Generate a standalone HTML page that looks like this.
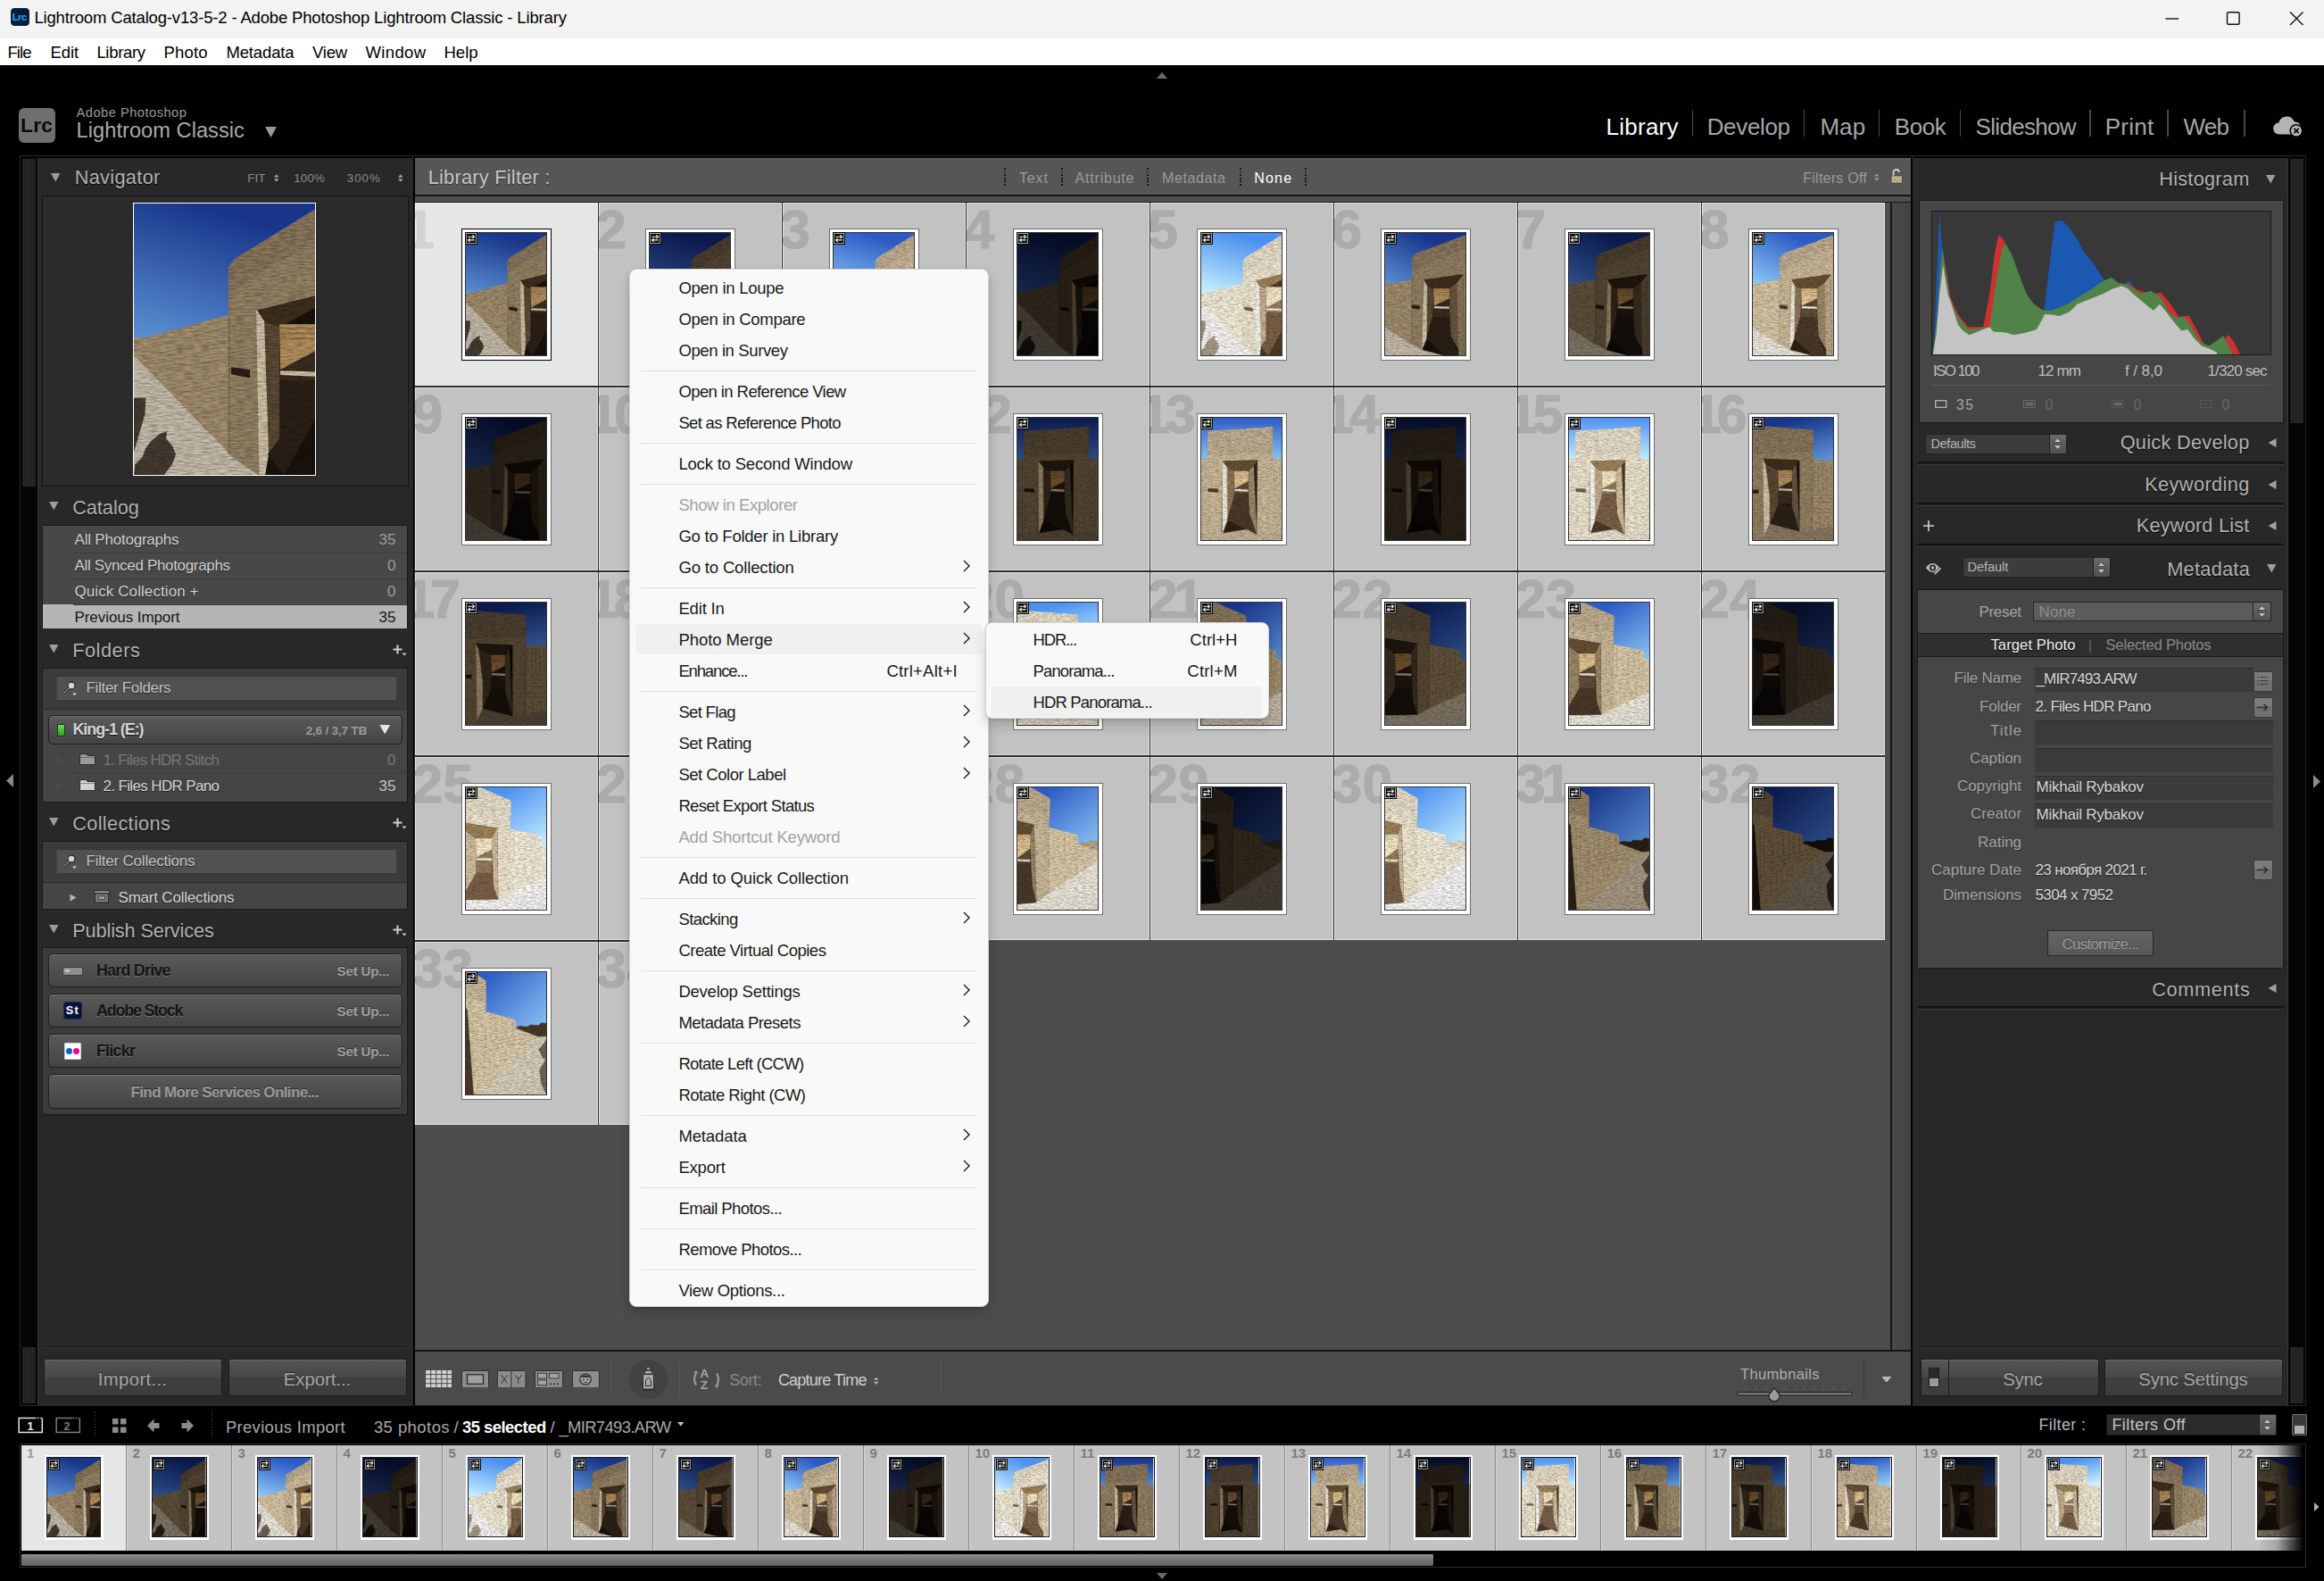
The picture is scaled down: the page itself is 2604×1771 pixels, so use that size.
<!DOCTYPE html>
<html lang="en"><head><meta charset="utf-8"><title>Lightroom Catalog-v13-5-2 - Adobe Photoshop Lightroom Classic - Library</title>
<style>
html,body{margin:0;padding:0;background:#000;}
body{width:2604px;height:1771px;overflow:hidden;font-family:"Liberation Sans",sans-serif;}
#app{position:relative;width:2604px;height:1771px;overflow:hidden;background:#000;}
#app div,#app svg{position:absolute;box-sizing:border-box;}
.t{white-space:nowrap;line-height:1;}
.btn{background:linear-gradient(#565656,#474747 50%,#3f3f3f 51%,#3c3c3c);border:1px solid #1c1c1c;box-shadow:inset 0 1px 0 #6a6a6a;}
.pill{background:linear-gradient(#5a5a5a,#444);border:1px solid #1e1e1e;border-radius:5px;box-shadow:inset 0 1px 0 #707070;}
.cell{background:#c2c2c2;border-left:1px solid #2c2c2c;border-top:2px solid #2c2c2c;box-shadow:inset 0 0 0 1px #e2e2e2;}
.cell.act{background:#e6e6e6;box-shadow:inset 0 0 0 1px #f4f4f4;}
.fr{background:#fff;border:1px solid #6e6e6e;}
.fr.act{border-color:#000;}
.fc{background:#c3c3c3;border-right:1px solid #8a8a8a;box-shadow:inset 1px 0 0 #d4d4d4;}
.fc.act{background:#e6e6e6;}
.hd{height:3px;background:#1a1a1a;border-top:1px solid #0c0c0c;border-bottom:1px solid #3c3c3c;}
.field{background:#3b3b3b;box-shadow:inset 0 1px 0 #2f2f2f;}
.stripes{background:repeating-linear-gradient(90deg,#1c1c1c 0,#1c1c1c 1px,#2c2c2c 1px,#2c2c2c 2px);}
.num{left:-3px;top:0px;font-size:61px;font-weight:700;letter-spacing:-4.5px;}

</style></head><body>
<svg width="0" height="0" style="position:absolute;left:-10px;top:-10px"><defs>
<filter id="nz" x="0" y="0" width="1" height="1" color-interpolation-filters="sRGB"><feTurbulence type="fractalNoise" baseFrequency="0.35 1.9" numOctaves="3" seed="11" result="n"/><feColorMatrix in="n" type="matrix" values="0 0 0 0 0 0 0 0 0 0 0 0 0 0 0 0.55 0 0 0 -0.17" result="a"/><feComposite in="a" in2="SourceGraphic" operator="in" result="m"/><feMerge><feMergeNode in="SourceGraphic"/><feMergeNode in="m"/></feMerge></filter>
<symbol id="p1" viewBox="0 0 60 90" preserveAspectRatio="none"><linearGradient id="g1" gradientUnits="userSpaceOnUse" x1="20" y1="0" x2="6" y2="46"><stop offset="0" stop-color="#18358a"/><stop offset="1" stop-color="#5b90d2"/></linearGradient><rect width="60" height="90" fill="url(#g1)"/><g filter="url(#nz)"><path d="M0 44.5 3.5 44.7 3.5 53 0 53z" fill="#a5906f" stroke="#a5906f" stroke-width="0.35"/><path d="M3.5 44.7 31.5 37.1 31.5 84 0.5 51z" fill="#a5906f" stroke="#a5906f" stroke-width="0.35"/><path d="M0 51 0.5 51 31.5 83.1 41.4 90 0 90z" fill="#c9bfad" stroke="#c9bfad" stroke-width="0.35"/><path d="M31.5 21.1 33.6 18.4 60 2.1 60 90 41.4 90 31.5 83.1z" fill="#978365" stroke="#978365" stroke-width="0.35"/><path d="M31.5 21.1 33.6 18.4 60 2.1 60 13 46 20 31.5 30z" fill="#82705a" stroke="#82705a" stroke-width="0.35" opacity="0.55"/><path d="M31.5 37V83" fill="none" stroke="#7b6749" stroke-width="0.5" opacity="0.8"/><path d="M6 47.5L31 41M5 50L31 46M8 55L31 52M14 63L31 60M20 70L31 68.500" fill="none" stroke="#7b6749" stroke-width="0.3" opacity="0.45"/><path d="M0 64.6 3.8 64.6 3.5 69.800 0 81.800z" fill="#453d33" stroke="#453d33" stroke-width="0.35"/><path d="M0.2 90 0.5 86.700 2.900 84.300 4.100 81.200 5.900 78.800 8.900 76.400 10.800 75.800 10.400 77.900 12.700 80.600 13.700 83.100 12.700 86.100 9.800 90z" fill="#453d33" stroke="#453d33" stroke-width="0.35"/><path d="M40.7 35.6 60 30.8 60 90 43.3 90z" fill="#1a130c" stroke="#1a130c" stroke-width="0.35"/><path d="M43 39 48.4 40.8 48.4 78 44.5 83.100z" fill="#5c4a35" stroke="#5c4a35" stroke-width="0.35"/><path d="M40.7 35.6 60 30.8 60 34.4 48.4 40.8 43 39z" fill="#3f301e" stroke="#3f301e" stroke-width="0.35"/><path d="M40.7 35.6 43 39 44.5 83.100 43.300 90 41.700 90z" fill="#d4c6aa" stroke="#d4c6aa" stroke-width="0.35"/><path d="M48.4 40.2 60 40.2 60 58.9 48.4 58.9z" fill="#3b2d1f" stroke="#3b2d1f" stroke-width="0.35"/><path d="M48.4 40.2 60 40.2 60 48.7 48.699999999999996 54.8z" fill="#b7925f" stroke="#b7925f" stroke-width="0.35"/><path d="M48.4 41.4H60" stroke="#8b6a45" stroke-width="0.6" opacity="0.7"/><path d="M48.4 43.1H60" stroke="#8b6a45" stroke-width="0.6" opacity="0.7"/><path d="M48.4 44.8H60" stroke="#8b6a45" stroke-width="0.6" opacity="0.7"/><path d="M48.699999999999996 55.6 60 56.0 60 57.2 48.699999999999996 56.7z" fill="#d9cdb5" stroke="#d9cdb5" stroke-width="0.35"/><path d="M48.4 58.9 60 58.9 60 90 50 90 44.5 83.100 48.4 78z" fill="#2c2117" stroke="#2c2117" stroke-width="0.35"/><path d="M50 90 60 90 60 72z" fill="#1a130c" stroke="#1a130c" stroke-width="0.35"/><path d="M32.4 54.4 38.3 55.3 38.3 57.7 32.4 56.5z" fill="#2c2117" stroke="#2c2117" stroke-width="0.35"/></g></symbol>
<symbol id="p2" viewBox="0 0 60 90" preserveAspectRatio="none"><linearGradient id="g2" gradientUnits="userSpaceOnUse" x1="20" y1="0" x2="6" y2="46"><stop offset="0" stop-color="#0b194b"/><stop offset="1" stop-color="#2e508a"/></linearGradient><rect width="60" height="90" fill="url(#g2)"/><g filter="url(#nz)"><path d="M0 44.5 3.5 44.7 3.5 53 0 53z" fill="#5f503a" stroke="#5f503a" stroke-width="0.35"/><path d="M3.5 44.7 31.5 37.1 31.5 84 0.5 51z" fill="#5f503a" stroke="#5f503a" stroke-width="0.35"/><path d="M0 51 0.5 51 31.5 83.1 41.4 90 0 90z" fill="#807666" stroke="#807666" stroke-width="0.35"/><path d="M31.5 21.1 33.6 18.4 60 2.1 60 90 41.4 90 31.5 83.1z" fill="#554734" stroke="#554734" stroke-width="0.35"/><path d="M31.5 21.1 33.6 18.4 60 2.1 60 13 46 20 31.5 30z" fill="#463a2d" stroke="#463a2d" stroke-width="0.35" opacity="0.55"/><path d="M31.5 37V83" fill="none" stroke="#413524" stroke-width="0.5" opacity="0.8"/><path d="M6 47.5L31 41M5 50L31 46M8 55L31 52M14 63L31 60M20 70L31 68.500" fill="none" stroke="#413524" stroke-width="0.3" opacity="0.45"/><path d="M0 64.6 3.8 64.6 3.5 69.800 0 81.800z" fill="#221e18" stroke="#221e18" stroke-width="0.35"/><path d="M0.2 90 0.5 86.700 2.900 84.300 4.100 81.200 5.900 78.800 8.900 76.400 10.800 75.800 10.400 77.900 12.700 80.600 13.700 83.100 12.700 86.100 9.800 90z" fill="#221e18" stroke="#221e18" stroke-width="0.35"/><path d="M40.7 35.6 60 30.8 60 90 43.3 90z" fill="#0c0905" stroke="#0c0905" stroke-width="0.35"/><path d="M43 39 48.4 40.8 48.4 78 44.5 83.100z" fill="#2f2419" stroke="#2f2419" stroke-width="0.35"/><path d="M40.7 35.6 60 30.8 60 34.4 48.4 40.8 43 39z" fill="#1f170e" stroke="#1f170e" stroke-width="0.35"/><path d="M40.7 35.6 43 39 44.5 83.100 43.300 90 41.700 90z" fill="#8d7d63" stroke="#8d7d63" stroke-width="0.35"/><path d="M48.4 40.2 60 40.2 60 58.9 48.4 58.9z" fill="#1c150e" stroke="#1c150e" stroke-width="0.35"/><path d="M48.4 40.2 60 40.2 60 48.7 48.699999999999996 54.8z" fill="#6f5130" stroke="#6f5130" stroke-width="0.35"/><path d="M48.4 41.4H60" stroke="#4c3722" stroke-width="0.6" opacity="0.7"/><path d="M48.4 43.1H60" stroke="#4c3722" stroke-width="0.6" opacity="0.7"/><path d="M48.4 44.8H60" stroke="#4c3722" stroke-width="0.6" opacity="0.7"/><path d="M48.699999999999996 55.6 60 56.0 60 57.2 48.699999999999996 56.7z" fill="#93856d" stroke="#93856d" stroke-width="0.35"/><path d="M48.4 58.9 60 58.9 60 90 50 90 44.5 83.100 48.4 78z" fill="#150f0b" stroke="#150f0b" stroke-width="0.35"/><path d="M50 90 60 90 60 72z" fill="#0c0905" stroke="#0c0905" stroke-width="0.35"/><path d="M32.4 54.4 38.3 55.3 38.3 57.7 32.4 56.5z" fill="#150f0b" stroke="#150f0b" stroke-width="0.35"/></g></symbol>
<symbol id="p3" viewBox="0 0 60 90" preserveAspectRatio="none"><linearGradient id="g3" gradientUnits="userSpaceOnUse" x1="20" y1="0" x2="6" y2="46"><stop offset="0" stop-color="#2c5bc5"/><stop offset="1" stop-color="#91caf6"/></linearGradient><rect width="60" height="90" fill="url(#g3)"/><g filter="url(#nz)"><path d="M0 44.5 3.5 44.7 3.5 53 0 53z" fill="#dccaa9" stroke="#dccaa9" stroke-width="0.35"/><path d="M3.5 44.7 31.5 37.1 31.5 84 0.5 51z" fill="#dccaa9" stroke="#dccaa9" stroke-width="0.35"/><path d="M0 51 0.5 51 31.5 83.1 41.4 90 0 90z" fill="#f2ede1" stroke="#f2ede1" stroke-width="0.35"/><path d="M31.5 21.1 33.6 18.4 60 2.1 60 90 41.4 90 31.5 83.1z" fill="#d1be9d" stroke="#d1be9d" stroke-width="0.35"/><path d="M31.5 21.1 33.6 18.4 60 2.1 60 13 46 20 31.5 30z" fill="#bdaa8f" stroke="#bdaa8f" stroke-width="0.35" opacity="0.55"/><path d="M31.5 37V83" fill="none" stroke="#b6a079" stroke-width="0.5" opacity="0.8"/><path d="M6 47.5L31 41M5 50L31 46M8 55L31 52M14 63L31 60M20 70L31 68.500" fill="none" stroke="#b6a079" stroke-width="0.3" opacity="0.45"/><path d="M0 64.6 3.8 64.6 3.5 69.800 0 81.800z" fill="#736758" stroke="#736758" stroke-width="0.35"/><path d="M0.2 90 0.5 86.700 2.900 84.300 4.100 81.200 5.900 78.800 8.900 76.400 10.800 75.800 10.400 77.900 12.700 80.600 13.700 83.100 12.700 86.100 9.800 90z" fill="#736758" stroke="#736758" stroke-width="0.35"/><path d="M40.7 35.6 60 30.8 60 90 43.3 90z" fill="#2f2316" stroke="#2f2316" stroke-width="0.35"/><path d="M43 39 48.4 40.8 48.4 78 44.5 83.100z" fill="#927a5b" stroke="#927a5b" stroke-width="0.35"/><path d="M40.7 35.6 60 30.8 60 34.4 48.4 40.8 43 39z" fill="#6a5336" stroke="#6a5336" stroke-width="0.35"/><path d="M40.7 35.6 43 39 44.5 83.100 43.300 90 41.700 90z" fill="#f6f0df" stroke="#f6f0df" stroke-width="0.35"/><path d="M48.4 40.2 60 40.2 60 58.9 48.4 58.9z" fill="#644f38" stroke="#644f38" stroke-width="0.35"/><path d="M48.4 40.2 60 40.2 60 48.7 48.699999999999996 54.8z" fill="#e8cc96" stroke="#e8cc96" stroke-width="0.35"/><path d="M48.4 41.4H60" stroke="#c6a373" stroke-width="0.6" opacity="0.7"/><path d="M48.4 43.1H60" stroke="#c6a373" stroke-width="0.6" opacity="0.7"/><path d="M48.4 44.8H60" stroke="#c6a373" stroke-width="0.6" opacity="0.7"/><path d="M48.699999999999996 55.6 60 56.0 60 57.2 48.699999999999996 56.7z" fill="#f8f3e7" stroke="#f8f3e7" stroke-width="0.35"/><path d="M48.4 58.9 60 58.9 60 90 50 90 44.5 83.100 48.4 78z" fill="#4d3b2a" stroke="#4d3b2a" stroke-width="0.35"/><path d="M50 90 60 90 60 72z" fill="#2f2316" stroke="#2f2316" stroke-width="0.35"/><path d="M32.4 54.4 38.3 55.3 38.3 57.7 32.4 56.5z" fill="#4d3b2a" stroke="#4d3b2a" stroke-width="0.35"/></g></symbol>
<symbol id="p4" viewBox="0 0 60 90" preserveAspectRatio="none"><linearGradient id="g4" gradientUnits="userSpaceOnUse" x1="20" y1="0" x2="6" y2="46"><stop offset="0" stop-color="#050c25"/><stop offset="1" stop-color="#16274b"/></linearGradient><rect width="60" height="90" fill="url(#g4)"/><g filter="url(#nz)"><path d="M0 44.5 3.5 44.7 3.5 53 0 53z" fill="#30271c" stroke="#30271c" stroke-width="0.35"/><path d="M3.5 44.7 31.5 37.1 31.5 84 0.5 51z" fill="#30271c" stroke="#30271c" stroke-width="0.35"/><path d="M0 51 0.5 51 31.5 83.1 41.4 90 0 90z" fill="#443e34" stroke="#443e34" stroke-width="0.35"/><path d="M31.5 21.1 33.6 18.4 60 2.1 60 90 41.4 90 31.5 83.1z" fill="#2a2218" stroke="#2a2218" stroke-width="0.35"/><path d="M31.5 21.1 33.6 18.4 60 2.1 60 13 46 20 31.5 30z" fill="#221c15" stroke="#221c15" stroke-width="0.35" opacity="0.55"/><path d="M31.5 37V83" fill="none" stroke="#1f1911" stroke-width="0.5" opacity="0.8"/><path d="M6 47.5L31 41M5 50L31 46M8 55L31 52M14 63L31 60M20 70L31 68.500" fill="none" stroke="#1f1911" stroke-width="0.3" opacity="0.45"/><path d="M0 64.6 3.8 64.6 3.5 69.800 0 81.800z" fill="#100e0b" stroke="#100e0b" stroke-width="0.35"/><path d="M0.2 90 0.5 86.700 2.900 84.300 4.100 81.200 5.900 78.800 8.900 76.400 10.800 75.800 10.400 77.900 12.700 80.600 13.700 83.100 12.700 86.100 9.800 90z" fill="#100e0b" stroke="#100e0b" stroke-width="0.35"/><path d="M40.7 35.6 60 30.8 60 90 43.3 90z" fill="#050402" stroke="#050402" stroke-width="0.35"/><path d="M43 39 48.4 40.8 48.4 78 44.5 83.100z" fill="#16110c" stroke="#16110c" stroke-width="0.35"/><path d="M40.7 35.6 60 30.8 60 34.4 48.4 40.8 43 39z" fill="#0e0a06" stroke="#0e0a06" stroke-width="0.35"/><path d="M40.7 35.6 43 39 44.5 83.100 43.300 90 41.700 90z" fill="#4c4232" stroke="#4c4232" stroke-width="0.35"/><path d="M48.4 40.2 60 40.2 60 58.9 48.4 58.9z" fill="#0d0a07" stroke="#0d0a07" stroke-width="0.35"/><path d="M48.4 40.2 60 40.2 60 48.7 48.699999999999996 54.8z" fill="#392817" stroke="#392817" stroke-width="0.35"/><path d="M48.4 41.4H60" stroke="#251a10" stroke-width="0.6" opacity="0.7"/><path d="M48.4 43.1H60" stroke="#251a10" stroke-width="0.6" opacity="0.7"/><path d="M48.4 44.8H60" stroke="#251a10" stroke-width="0.6" opacity="0.7"/><path d="M48.699999999999996 55.6 60 56.0 60 57.2 48.699999999999996 56.7z" fill="#514738" stroke="#514738" stroke-width="0.35"/><path d="M48.4 58.9 60 58.9 60 90 50 90 44.5 83.100 48.4 78z" fill="#090705" stroke="#090705" stroke-width="0.35"/><path d="M50 90 60 90 60 72z" fill="#050402" stroke="#050402" stroke-width="0.35"/><path d="M32.4 54.4 38.3 55.3 38.3 57.7 32.4 56.5z" fill="#090705" stroke="#090705" stroke-width="0.35"/></g></symbol>
<symbol id="p5" viewBox="0 0 60 90" preserveAspectRatio="none"><linearGradient id="g5" gradientUnits="userSpaceOnUse" x1="20" y1="0" x2="6" y2="46"><stop offset="0" stop-color="#4c91f0"/><stop offset="1" stop-color="#cbf2ff"/></linearGradient><rect width="60" height="90" fill="url(#g5)"/><g filter="url(#nz)"><path d="M0 44.5 3.5 44.7 3.5 53 0 53z" fill="#f9f2de" stroke="#f9f2de" stroke-width="0.35"/><path d="M3.5 44.7 31.5 37.1 31.5 84 0.5 51z" fill="#f9f2de" stroke="#f9f2de" stroke-width="0.35"/><path d="M0 51 0.5 51 31.5 83.1 41.4 90 0 90z" fill="#fefdfb" stroke="#fefdfb" stroke-width="0.35"/><path d="M31.5 21.1 33.6 18.4 60 2.1 60 90 41.4 90 31.5 83.1z" fill="#f5ecd5" stroke="#f5ecd5" stroke-width="0.35"/><path d="M31.5 21.1 33.6 18.4 60 2.1 60 13 46 20 31.5 30z" fill="#ebdfca" stroke="#ebdfca" stroke-width="0.35" opacity="0.55"/><path d="M31.5 37V83" fill="none" stroke="#e7d7b3" stroke-width="0.5" opacity="0.8"/><path d="M6 47.5L31 41M5 50L31 46M8 55L31 52M14 63L31 60M20 70L31 68.500" fill="none" stroke="#e7d7b3" stroke-width="0.3" opacity="0.45"/><path d="M0 64.6 3.8 64.6 3.5 69.800 0 81.800z" fill="#ada08d" stroke="#ada08d" stroke-width="0.35"/><path d="M0.2 90 0.5 86.700 2.900 84.300 4.100 81.200 5.900 78.800 8.900 76.400 10.800 75.800 10.400 77.900 12.700 80.600 13.700 83.100 12.700 86.100 9.800 90z" fill="#ada08d" stroke="#ada08d" stroke-width="0.35"/><path d="M40.7 35.6 60 30.8 60 90 43.3 90z" fill="#523e29" stroke="#523e29" stroke-width="0.35"/><path d="M43 39 48.4 40.8 48.4 78 44.5 83.100z" fill="#ccb591" stroke="#ccb591" stroke-width="0.35"/><path d="M40.7 35.6 60 30.8 60 34.4 48.4 40.8 43 39z" fill="#a3875d" stroke="#a3875d" stroke-width="0.35"/><path d="M40.7 35.6 43 39 44.5 83.100 43.300 90 41.700 90z" fill="#fffefa" stroke="#fffefa" stroke-width="0.35"/><path d="M48.4 40.2 60 40.2 60 58.9 48.4 58.9z" fill="#9c805f" stroke="#9c805f" stroke-width="0.35"/><path d="M48.4 40.2 60 40.2 60 48.7 48.699999999999996 54.8z" fill="#fcf3cf" stroke="#fcf3cf" stroke-width="0.35"/><path d="M48.4 41.4H60" stroke="#f0daad" stroke-width="0.6" opacity="0.7"/><path d="M48.4 43.1H60" stroke="#f0daad" stroke-width="0.6" opacity="0.7"/><path d="M48.4 44.8H60" stroke="#f0daad" stroke-width="0.6" opacity="0.7"/><path d="M48.699999999999996 55.6 60 56.0 60 57.2 48.699999999999996 56.7z" fill="#fffefc" stroke="#fffefc" stroke-width="0.35"/><path d="M48.4 58.9 60 58.9 60 90 50 90 44.5 83.100 48.4 78z" fill="#7e644a" stroke="#7e644a" stroke-width="0.35"/><path d="M50 90 60 90 60 72z" fill="#523e29" stroke="#523e29" stroke-width="0.35"/><path d="M32.4 54.4 38.3 55.3 38.3 57.7 32.4 56.5z" fill="#7e644a" stroke="#7e644a" stroke-width="0.35"/></g></symbol>
<symbol id="p6" viewBox="0 0 60 90" preserveAspectRatio="none"><linearGradient id="g6" gradientUnits="userSpaceOnUse" x1="24" y1="0" x2="4" y2="40"><stop offset="0" stop-color="#18358a"/><stop offset="1" stop-color="#5b90d2"/></linearGradient><rect width="60" height="90" fill="url(#g6)"/><g filter="url(#nz)"><path d="M0 38.2 20.1 34.9 20.1 82 0 68.9z" fill="#a5906f" stroke="#a5906f" stroke-width="0.35"/><path d="M0 68.9 18.8 81.4 28 85.4 47 90 0 90z" fill="#c9bfad" stroke="#c9bfad" stroke-width="0.35"/><path d="M20.6 18.5 23.4 15.8 60 2.3 60 90 47 90 28 85.4 20.1 81.4z" fill="#978365" stroke="#978365" stroke-width="0.35"/><path d="M20.6 18.5 23.4 15.8 60 2.3 60 12 40 20 20.4 27z" fill="#82705a" stroke="#82705a" stroke-width="0.35" opacity="0.55"/><path d="M20.1 35V81.4" fill="none" stroke="#7b6749" stroke-width="0.5" opacity="0.8"/><path d="M1 42L20 39.500M1 48L20 46M1 55L20 54M4 63L20 62.500" fill="none" stroke="#7b6749" stroke-width="0.3" opacity="0.4"/><path d="M29.1 34.9 57.7 31 58.7 90 45 90 27.7 85.4z" fill="#1a130c" stroke="#1a130c" stroke-width="0.35"/><path d="M31.4 39.2 36.4 41.2 35.4 62.3 31.1 77.5z" fill="#5c4a35" stroke="#5c4a35" stroke-width="0.35"/><path d="M47.7 40.9 53.7 36.3 54.7 85.400 48.700 75.500z" fill="#695740" stroke="#695740" stroke-width="0.35"/><path d="M53.7 36.3 57.7 31.3 58.700 90 54.700 90z" fill="#978365" stroke="#978365" stroke-width="0.35" opacity="0.9"/><path d="M29.1 34.9 57.7 31 53.7 36.3 47.7 40.9 36.4 41.2 31.4 39.2z" fill="#3f301e" stroke="#3f301e" stroke-width="0.35"/><path d="M29.1 35.3 31.4 39.2 31.1 77.5 27.7 85.4z" fill="#d4c6aa" stroke="#d4c6aa" stroke-width="0.35"/><path d="M36.4 41.2 47.7 41.2 47.7 62 36.4 62z" fill="#3b2d1f" stroke="#3b2d1f" stroke-width="0.35"/><path d="M36.4 41.2 47.7 41.2 47.7 48.3 36.699999999999996 53.3z" fill="#b7925f" stroke="#b7925f" stroke-width="0.35"/><path d="M36.4 42.4H47.7" stroke="#8b6a45" stroke-width="0.6" opacity="0.7"/><path d="M36.4 44.1H47.7" stroke="#8b6a45" stroke-width="0.6" opacity="0.7"/><path d="M36.4 45.8H47.7" stroke="#8b6a45" stroke-width="0.6" opacity="0.7"/><path d="M36.699999999999996 54.1 47.7 54.5 47.7 55.7 36.699999999999996 55.2z" fill="#d9cdb5" stroke="#d9cdb5" stroke-width="0.35"/><path d="M31.1 77.5 35.4 62.3 47.7 62 48.700 75.500 54.700 90 45 90z" fill="#2c2117" stroke="#2c2117" stroke-width="0.35"/><path d="M20.4 53.1 26.1 53.7 26.1 56 20.4 55.4z" fill="#2c2117" stroke="#2c2117" stroke-width="0.35"/></g></symbol>
<symbol id="p7" viewBox="0 0 60 90" preserveAspectRatio="none"><linearGradient id="g7" gradientUnits="userSpaceOnUse" x1="24" y1="0" x2="4" y2="40"><stop offset="0" stop-color="#0b194b"/><stop offset="1" stop-color="#2e508a"/></linearGradient><rect width="60" height="90" fill="url(#g7)"/><g filter="url(#nz)"><path d="M0 38.2 20.1 34.9 20.1 82 0 68.9z" fill="#5f503a" stroke="#5f503a" stroke-width="0.35"/><path d="M0 68.9 18.8 81.4 28 85.4 47 90 0 90z" fill="#807666" stroke="#807666" stroke-width="0.35"/><path d="M20.6 18.5 23.4 15.8 60 2.3 60 90 47 90 28 85.4 20.1 81.4z" fill="#554734" stroke="#554734" stroke-width="0.35"/><path d="M20.6 18.5 23.4 15.8 60 2.3 60 12 40 20 20.4 27z" fill="#463a2d" stroke="#463a2d" stroke-width="0.35" opacity="0.55"/><path d="M20.1 35V81.4" fill="none" stroke="#413524" stroke-width="0.5" opacity="0.8"/><path d="M1 42L20 39.500M1 48L20 46M1 55L20 54M4 63L20 62.500" fill="none" stroke="#413524" stroke-width="0.3" opacity="0.4"/><path d="M29.1 34.9 57.7 31 58.7 90 45 90 27.7 85.4z" fill="#0c0905" stroke="#0c0905" stroke-width="0.35"/><path d="M31.4 39.2 36.4 41.2 35.4 62.3 31.1 77.5z" fill="#2f2419" stroke="#2f2419" stroke-width="0.35"/><path d="M47.7 40.9 53.7 36.3 54.7 85.400 48.700 75.500z" fill="#362c1f" stroke="#362c1f" stroke-width="0.35"/><path d="M53.7 36.3 57.7 31.3 58.700 90 54.700 90z" fill="#554734" stroke="#554734" stroke-width="0.35" opacity="0.9"/><path d="M29.1 34.9 57.7 31 53.7 36.3 47.7 40.9 36.4 41.2 31.4 39.2z" fill="#1f170e" stroke="#1f170e" stroke-width="0.35"/><path d="M29.1 35.3 31.4 39.2 31.1 77.5 27.7 85.4z" fill="#8d7d63" stroke="#8d7d63" stroke-width="0.35"/><path d="M36.4 41.2 47.7 41.2 47.7 62 36.4 62z" fill="#1c150e" stroke="#1c150e" stroke-width="0.35"/><path d="M36.4 41.2 47.7 41.2 47.7 48.3 36.699999999999996 53.3z" fill="#6f5130" stroke="#6f5130" stroke-width="0.35"/><path d="M36.4 42.4H47.7" stroke="#4c3722" stroke-width="0.6" opacity="0.7"/><path d="M36.4 44.1H47.7" stroke="#4c3722" stroke-width="0.6" opacity="0.7"/><path d="M36.4 45.8H47.7" stroke="#4c3722" stroke-width="0.6" opacity="0.7"/><path d="M36.699999999999996 54.1 47.7 54.5 47.7 55.7 36.699999999999996 55.2z" fill="#93856d" stroke="#93856d" stroke-width="0.35"/><path d="M31.1 77.5 35.4 62.3 47.7 62 48.700 75.500 54.700 90 45 90z" fill="#150f0b" stroke="#150f0b" stroke-width="0.35"/><path d="M20.4 53.1 26.1 53.7 26.1 56 20.4 55.4z" fill="#150f0b" stroke="#150f0b" stroke-width="0.35"/></g></symbol>
<symbol id="p8" viewBox="0 0 60 90" preserveAspectRatio="none"><linearGradient id="g8" gradientUnits="userSpaceOnUse" x1="24" y1="0" x2="4" y2="40"><stop offset="0" stop-color="#2c5bc5"/><stop offset="1" stop-color="#91caf6"/></linearGradient><rect width="60" height="90" fill="url(#g8)"/><g filter="url(#nz)"><path d="M0 38.2 20.1 34.9 20.1 82 0 68.9z" fill="#dccaa9" stroke="#dccaa9" stroke-width="0.35"/><path d="M0 68.9 18.8 81.4 28 85.4 47 90 0 90z" fill="#f2ede1" stroke="#f2ede1" stroke-width="0.35"/><path d="M20.6 18.5 23.4 15.8 60 2.3 60 90 47 90 28 85.4 20.1 81.4z" fill="#d1be9d" stroke="#d1be9d" stroke-width="0.35"/><path d="M20.6 18.5 23.4 15.8 60 2.3 60 12 40 20 20.4 27z" fill="#bdaa8f" stroke="#bdaa8f" stroke-width="0.35" opacity="0.55"/><path d="M20.1 35V81.4" fill="none" stroke="#b6a079" stroke-width="0.5" opacity="0.8"/><path d="M1 42L20 39.500M1 48L20 46M1 55L20 54M4 63L20 62.500" fill="none" stroke="#b6a079" stroke-width="0.3" opacity="0.4"/><path d="M29.1 34.9 57.7 31 58.7 90 45 90 27.7 85.4z" fill="#2f2316" stroke="#2f2316" stroke-width="0.35"/><path d="M31.4 39.2 36.4 41.2 35.4 62.3 31.1 77.5z" fill="#927a5b" stroke="#927a5b" stroke-width="0.35"/><path d="M47.7 40.9 53.7 36.3 54.7 85.400 48.700 75.500z" fill="#a28c6c" stroke="#a28c6c" stroke-width="0.35"/><path d="M53.7 36.3 57.7 31.3 58.700 90 54.700 90z" fill="#d1be9d" stroke="#d1be9d" stroke-width="0.35" opacity="0.9"/><path d="M29.1 34.9 57.7 31 53.7 36.3 47.7 40.9 36.4 41.2 31.4 39.2z" fill="#6a5336" stroke="#6a5336" stroke-width="0.35"/><path d="M29.1 35.3 31.4 39.2 31.1 77.5 27.7 85.4z" fill="#f6f0df" stroke="#f6f0df" stroke-width="0.35"/><path d="M36.4 41.2 47.7 41.2 47.7 62 36.4 62z" fill="#644f38" stroke="#644f38" stroke-width="0.35"/><path d="M36.4 41.2 47.7 41.2 47.7 48.3 36.699999999999996 53.3z" fill="#e8cc96" stroke="#e8cc96" stroke-width="0.35"/><path d="M36.4 42.4H47.7" stroke="#c6a373" stroke-width="0.6" opacity="0.7"/><path d="M36.4 44.1H47.7" stroke="#c6a373" stroke-width="0.6" opacity="0.7"/><path d="M36.4 45.8H47.7" stroke="#c6a373" stroke-width="0.6" opacity="0.7"/><path d="M36.699999999999996 54.1 47.7 54.5 47.7 55.7 36.699999999999996 55.2z" fill="#f8f3e7" stroke="#f8f3e7" stroke-width="0.35"/><path d="M31.1 77.5 35.4 62.3 47.7 62 48.700 75.500 54.700 90 45 90z" fill="#4d3b2a" stroke="#4d3b2a" stroke-width="0.35"/><path d="M20.4 53.1 26.1 53.7 26.1 56 20.4 55.4z" fill="#4d3b2a" stroke="#4d3b2a" stroke-width="0.35"/></g></symbol>
<symbol id="p9" viewBox="0 0 60 90" preserveAspectRatio="none"><linearGradient id="g9" gradientUnits="userSpaceOnUse" x1="24" y1="0" x2="4" y2="40"><stop offset="0" stop-color="#050c25"/><stop offset="1" stop-color="#16274b"/></linearGradient><rect width="60" height="90" fill="url(#g9)"/><g filter="url(#nz)"><path d="M0 38.2 20.1 34.9 20.1 82 0 68.9z" fill="#30271c" stroke="#30271c" stroke-width="0.35"/><path d="M0 68.9 18.8 81.4 28 85.4 47 90 0 90z" fill="#443e34" stroke="#443e34" stroke-width="0.35"/><path d="M20.6 18.5 23.4 15.8 60 2.3 60 90 47 90 28 85.4 20.1 81.4z" fill="#2a2218" stroke="#2a2218" stroke-width="0.35"/><path d="M20.6 18.5 23.4 15.8 60 2.3 60 12 40 20 20.4 27z" fill="#221c15" stroke="#221c15" stroke-width="0.35" opacity="0.55"/><path d="M20.1 35V81.4" fill="none" stroke="#1f1911" stroke-width="0.5" opacity="0.8"/><path d="M1 42L20 39.500M1 48L20 46M1 55L20 54M4 63L20 62.500" fill="none" stroke="#1f1911" stroke-width="0.3" opacity="0.4"/><path d="M29.1 34.9 57.7 31 58.7 90 45 90 27.7 85.4z" fill="#050402" stroke="#050402" stroke-width="0.35"/><path d="M31.4 39.2 36.4 41.2 35.4 62.3 31.1 77.5z" fill="#16110c" stroke="#16110c" stroke-width="0.35"/><path d="M47.7 40.9 53.7 36.3 54.7 85.400 48.700 75.500z" fill="#1a140e" stroke="#1a140e" stroke-width="0.35"/><path d="M53.7 36.3 57.7 31.3 58.700 90 54.700 90z" fill="#2a2218" stroke="#2a2218" stroke-width="0.35" opacity="0.9"/><path d="M29.1 34.9 57.7 31 53.7 36.3 47.7 40.9 36.4 41.2 31.4 39.2z" fill="#0e0a06" stroke="#0e0a06" stroke-width="0.35"/><path d="M29.1 35.3 31.4 39.2 31.1 77.5 27.7 85.4z" fill="#4c4232" stroke="#4c4232" stroke-width="0.35"/><path d="M36.4 41.2 47.7 41.2 47.7 62 36.4 62z" fill="#0d0a07" stroke="#0d0a07" stroke-width="0.35"/><path d="M36.4 41.2 47.7 41.2 47.7 48.3 36.699999999999996 53.3z" fill="#392817" stroke="#392817" stroke-width="0.35"/><path d="M36.4 42.4H47.7" stroke="#251a10" stroke-width="0.6" opacity="0.7"/><path d="M36.4 44.1H47.7" stroke="#251a10" stroke-width="0.6" opacity="0.7"/><path d="M36.4 45.8H47.7" stroke="#251a10" stroke-width="0.6" opacity="0.7"/><path d="M36.699999999999996 54.1 47.7 54.5 47.7 55.7 36.699999999999996 55.2z" fill="#514738" stroke="#514738" stroke-width="0.35"/><path d="M31.1 77.5 35.4 62.3 47.7 62 48.700 75.500 54.700 90 45 90z" fill="#090705" stroke="#090705" stroke-width="0.35"/><path d="M20.4 53.1 26.1 53.7 26.1 56 20.4 55.4z" fill="#090705" stroke="#090705" stroke-width="0.35"/></g></symbol>
<symbol id="p10" viewBox="0 0 60 90" preserveAspectRatio="none"><linearGradient id="g10" gradientUnits="userSpaceOnUse" x1="24" y1="0" x2="4" y2="40"><stop offset="0" stop-color="#4c91f0"/><stop offset="1" stop-color="#cbf2ff"/></linearGradient><rect width="60" height="90" fill="url(#g10)"/><g filter="url(#nz)"><path d="M0 38.2 20.1 34.9 20.1 82 0 68.9z" fill="#f9f2de" stroke="#f9f2de" stroke-width="0.35"/><path d="M0 68.9 18.8 81.4 28 85.4 47 90 0 90z" fill="#fefdfb" stroke="#fefdfb" stroke-width="0.35"/><path d="M20.6 18.5 23.4 15.8 60 2.3 60 90 47 90 28 85.4 20.1 81.4z" fill="#f5ecd5" stroke="#f5ecd5" stroke-width="0.35"/><path d="M20.6 18.5 23.4 15.8 60 2.3 60 12 40 20 20.4 27z" fill="#ebdfca" stroke="#ebdfca" stroke-width="0.35" opacity="0.55"/><path d="M20.1 35V81.4" fill="none" stroke="#e7d7b3" stroke-width="0.5" opacity="0.8"/><path d="M1 42L20 39.500M1 48L20 46M1 55L20 54M4 63L20 62.500" fill="none" stroke="#e7d7b3" stroke-width="0.3" opacity="0.4"/><path d="M29.1 34.9 57.7 31 58.7 90 45 90 27.7 85.4z" fill="#523e29" stroke="#523e29" stroke-width="0.35"/><path d="M31.4 39.2 36.4 41.2 35.4 62.3 31.1 77.5z" fill="#ccb591" stroke="#ccb591" stroke-width="0.35"/><path d="M47.7 40.9 53.7 36.3 54.7 85.400 48.700 75.500z" fill="#d9c6a5" stroke="#d9c6a5" stroke-width="0.35"/><path d="M53.7 36.3 57.7 31.3 58.700 90 54.700 90z" fill="#f5ecd5" stroke="#f5ecd5" stroke-width="0.35" opacity="0.9"/><path d="M29.1 34.9 57.7 31 53.7 36.3 47.7 40.9 36.4 41.2 31.4 39.2z" fill="#a3875d" stroke="#a3875d" stroke-width="0.35"/><path d="M29.1 35.3 31.4 39.2 31.1 77.5 27.7 85.4z" fill="#fffefa" stroke="#fffefa" stroke-width="0.35"/><path d="M36.4 41.2 47.7 41.2 47.7 62 36.4 62z" fill="#9c805f" stroke="#9c805f" stroke-width="0.35"/><path d="M36.4 41.2 47.7 41.2 47.7 48.3 36.699999999999996 53.3z" fill="#fcf3cf" stroke="#fcf3cf" stroke-width="0.35"/><path d="M36.4 42.4H47.7" stroke="#f0daad" stroke-width="0.6" opacity="0.7"/><path d="M36.4 44.1H47.7" stroke="#f0daad" stroke-width="0.6" opacity="0.7"/><path d="M36.4 45.8H47.7" stroke="#f0daad" stroke-width="0.6" opacity="0.7"/><path d="M36.699999999999996 54.1 47.7 54.5 47.7 55.7 36.699999999999996 55.2z" fill="#fffefc" stroke="#fffefc" stroke-width="0.35"/><path d="M31.1 77.5 35.4 62.3 47.7 62 48.700 75.500 54.700 90 45 90z" fill="#7e644a" stroke="#7e644a" stroke-width="0.35"/><path d="M20.4 53.1 26.1 53.7 26.1 56 20.4 55.4z" fill="#7e644a" stroke="#7e644a" stroke-width="0.35"/></g></symbol>
<symbol id="p11" viewBox="0 0 60 90" preserveAspectRatio="none"><linearGradient id="g11" gradientUnits="userSpaceOnUse" x1="30" y1="0" x2="30" y2="34"><stop offset="0" stop-color="#18358a"/><stop offset="1" stop-color="#5b90d2"/></linearGradient><rect width="60" height="90" fill="url(#g11)"/><g filter="url(#nz)"><path d="M0 30.7 5 30.7 5 90 0 90z" fill="#978365" stroke="#978365" stroke-width="0.35"/><path d="M52.500 30.7 60 30.7 60 90 52.500 90z" fill="#978365" stroke="#978365" stroke-width="0.35"/><path d="M5.8 10.6 53 7.4 52.500 90 5 90z" fill="#978365" stroke="#978365" stroke-width="0.35"/><path d="M5.8 10.6 53 7.4 52.800 26 5.3 28z" fill="#82705a" stroke="#82705a" stroke-width="0.35" opacity="0.5"/><path d="M54 36V80M56 36V80M58 36V80M53 50H60M53 53H60M53 56H60M53 70H60M2 40V82M4 60V84" fill="none" stroke="#7b6749" stroke-width="0.4" opacity="0.55"/><path d="M16.2 32.5 41.8 31.6 41.3 85.700 15.7 84.800z" fill="#1a130c" stroke="#1a130c" stroke-width="0.35"/><path d="M19.3 36.5 25.1 39.6 25.500 55 19.800 75z" fill="#5c4a35" stroke="#5c4a35" stroke-width="0.35"/><path d="M35 39.6 39.1 35.6 41.3 85.700 36 70.500z" fill="#695740" stroke="#695740" stroke-width="0.35"/><path d="M16.2 32.5 41.8 31.6 39.1 35.6 35 39.6 25.1 39.6 19.3 36.5z" fill="#3f301e" stroke="#3f301e" stroke-width="0.35"/><path d="M16.2 32.5 19.3 36.5 19.800 75 16.2 84.800z" fill="#d4c6aa" stroke="#d4c6aa" stroke-width="0.35"/><path d="M25.1 39.6 35 39.6 35 56 25.1 56z" fill="#3b2d1f" stroke="#3b2d1f" stroke-width="0.35"/><path d="M25.1 39.6 35 39.6 35 46.8 25.400000000000002 51.8z" fill="#b7925f" stroke="#b7925f" stroke-width="0.35"/><path d="M25.1 40.8H35" stroke="#8b6a45" stroke-width="0.6" opacity="0.7"/><path d="M25.1 42.5H35" stroke="#8b6a45" stroke-width="0.6" opacity="0.7"/><path d="M25.1 44.2H35" stroke="#8b6a45" stroke-width="0.6" opacity="0.7"/><path d="M25.400000000000002 52.6 35 53.0 35 54.2 25.400000000000002 53.7z" fill="#d9cdb5" stroke="#d9cdb5" stroke-width="0.35"/><path d="M19.800 75 25.500 56 35 56 36 70.500 41.3 85.700 34 82z" fill="#2c2117" stroke="#2c2117" stroke-width="0.35"/><path d="M5.8 52.2 13 52.6 13 54.800 5.8 54.400z" fill="#2c2117" stroke="#2c2117" stroke-width="0.35"/><path d="M0 85 15.700 84.800 34 82 41.300 85.700 60 84 60 90 0 90z" fill="#8d7c64" stroke="#8d7c64" stroke-width="0.35"/></g></symbol>
<symbol id="p12" viewBox="0 0 60 90" preserveAspectRatio="none"><linearGradient id="g12" gradientUnits="userSpaceOnUse" x1="30" y1="0" x2="30" y2="34"><stop offset="0" stop-color="#0b194b"/><stop offset="1" stop-color="#2e508a"/></linearGradient><rect width="60" height="90" fill="url(#g12)"/><g filter="url(#nz)"><path d="M0 30.7 5 30.7 5 90 0 90z" fill="#554734" stroke="#554734" stroke-width="0.35"/><path d="M52.500 30.7 60 30.7 60 90 52.500 90z" fill="#554734" stroke="#554734" stroke-width="0.35"/><path d="M5.8 10.6 53 7.4 52.500 90 5 90z" fill="#554734" stroke="#554734" stroke-width="0.35"/><path d="M5.8 10.6 53 7.4 52.800 26 5.3 28z" fill="#463a2d" stroke="#463a2d" stroke-width="0.35" opacity="0.5"/><path d="M54 36V80M56 36V80M58 36V80M53 50H60M53 53H60M53 56H60M53 70H60M2 40V82M4 60V84" fill="none" stroke="#413524" stroke-width="0.4" opacity="0.55"/><path d="M16.2 32.5 41.8 31.6 41.3 85.700 15.7 84.800z" fill="#0c0905" stroke="#0c0905" stroke-width="0.35"/><path d="M19.3 36.5 25.1 39.6 25.500 55 19.800 75z" fill="#2f2419" stroke="#2f2419" stroke-width="0.35"/><path d="M35 39.6 39.1 35.6 41.3 85.700 36 70.500z" fill="#362c1f" stroke="#362c1f" stroke-width="0.35"/><path d="M16.2 32.5 41.8 31.6 39.1 35.6 35 39.6 25.1 39.6 19.3 36.5z" fill="#1f170e" stroke="#1f170e" stroke-width="0.35"/><path d="M16.2 32.5 19.3 36.5 19.800 75 16.2 84.800z" fill="#8d7d63" stroke="#8d7d63" stroke-width="0.35"/><path d="M25.1 39.6 35 39.6 35 56 25.1 56z" fill="#1c150e" stroke="#1c150e" stroke-width="0.35"/><path d="M25.1 39.6 35 39.6 35 46.8 25.400000000000002 51.8z" fill="#6f5130" stroke="#6f5130" stroke-width="0.35"/><path d="M25.1 40.8H35" stroke="#4c3722" stroke-width="0.6" opacity="0.7"/><path d="M25.1 42.5H35" stroke="#4c3722" stroke-width="0.6" opacity="0.7"/><path d="M25.1 44.2H35" stroke="#4c3722" stroke-width="0.6" opacity="0.7"/><path d="M25.400000000000002 52.6 35 53.0 35 54.2 25.400000000000002 53.7z" fill="#93856d" stroke="#93856d" stroke-width="0.35"/><path d="M19.800 75 25.500 56 35 56 36 70.500 41.3 85.700 34 82z" fill="#150f0b" stroke="#150f0b" stroke-width="0.35"/><path d="M5.8 52.2 13 52.6 13 54.800 5.8 54.400z" fill="#150f0b" stroke="#150f0b" stroke-width="0.35"/><path d="M0 85 15.700 84.800 34 82 41.300 85.700 60 84 60 90 0 90z" fill="#4d4233" stroke="#4d4233" stroke-width="0.35"/></g></symbol>
<symbol id="p13" viewBox="0 0 60 90" preserveAspectRatio="none"><linearGradient id="g13" gradientUnits="userSpaceOnUse" x1="30" y1="0" x2="30" y2="34"><stop offset="0" stop-color="#2c5bc5"/><stop offset="1" stop-color="#91caf6"/></linearGradient><rect width="60" height="90" fill="url(#g13)"/><g filter="url(#nz)"><path d="M0 30.7 5 30.7 5 90 0 90z" fill="#d1be9d" stroke="#d1be9d" stroke-width="0.35"/><path d="M52.500 30.7 60 30.7 60 90 52.500 90z" fill="#d1be9d" stroke="#d1be9d" stroke-width="0.35"/><path d="M5.8 10.6 53 7.4 52.500 90 5 90z" fill="#d1be9d" stroke="#d1be9d" stroke-width="0.35"/><path d="M5.8 10.6 53 7.4 52.800 26 5.3 28z" fill="#bdaa8f" stroke="#bdaa8f" stroke-width="0.35" opacity="0.5"/><path d="M54 36V80M56 36V80M58 36V80M53 50H60M53 53H60M53 56H60M53 70H60M2 40V82M4 60V84" fill="none" stroke="#b6a079" stroke-width="0.4" opacity="0.55"/><path d="M16.2 32.5 41.8 31.6 41.3 85.700 15.7 84.800z" fill="#2f2316" stroke="#2f2316" stroke-width="0.35"/><path d="M19.3 36.5 25.1 39.6 25.500 55 19.800 75z" fill="#927a5b" stroke="#927a5b" stroke-width="0.35"/><path d="M35 39.6 39.1 35.6 41.3 85.700 36 70.500z" fill="#a28c6c" stroke="#a28c6c" stroke-width="0.35"/><path d="M16.2 32.5 41.8 31.6 39.1 35.6 35 39.6 25.1 39.6 19.3 36.5z" fill="#6a5336" stroke="#6a5336" stroke-width="0.35"/><path d="M16.2 32.5 19.3 36.5 19.800 75 16.2 84.800z" fill="#f6f0df" stroke="#f6f0df" stroke-width="0.35"/><path d="M25.1 39.6 35 39.6 35 56 25.1 56z" fill="#644f38" stroke="#644f38" stroke-width="0.35"/><path d="M25.1 39.6 35 39.6 35 46.8 25.400000000000002 51.8z" fill="#e8cc96" stroke="#e8cc96" stroke-width="0.35"/><path d="M25.1 40.8H35" stroke="#c6a373" stroke-width="0.6" opacity="0.7"/><path d="M25.1 42.5H35" stroke="#c6a373" stroke-width="0.6" opacity="0.7"/><path d="M25.1 44.2H35" stroke="#c6a373" stroke-width="0.6" opacity="0.7"/><path d="M25.400000000000002 52.6 35 53.0 35 54.2 25.400000000000002 53.7z" fill="#f8f3e7" stroke="#f8f3e7" stroke-width="0.35"/><path d="M19.800 75 25.500 56 35 56 36 70.500 41.3 85.700 34 82z" fill="#4d3b2a" stroke="#4d3b2a" stroke-width="0.35"/><path d="M5.8 52.2 13 52.6 13 54.800 5.8 54.400z" fill="#4d3b2a" stroke="#4d3b2a" stroke-width="0.35"/><path d="M0 85 15.700 84.800 34 82 41.300 85.700 60 84 60 90 0 90z" fill="#c8b79c" stroke="#c8b79c" stroke-width="0.35"/></g></symbol>
<symbol id="p14" viewBox="0 0 60 90" preserveAspectRatio="none"><linearGradient id="g14" gradientUnits="userSpaceOnUse" x1="30" y1="0" x2="30" y2="34"><stop offset="0" stop-color="#050c25"/><stop offset="1" stop-color="#16274b"/></linearGradient><rect width="60" height="90" fill="url(#g14)"/><g filter="url(#nz)"><path d="M0 30.7 5 30.7 5 90 0 90z" fill="#2a2218" stroke="#2a2218" stroke-width="0.35"/><path d="M52.500 30.7 60 30.7 60 90 52.500 90z" fill="#2a2218" stroke="#2a2218" stroke-width="0.35"/><path d="M5.8 10.6 53 7.4 52.500 90 5 90z" fill="#2a2218" stroke="#2a2218" stroke-width="0.35"/><path d="M5.8 10.6 53 7.4 52.800 26 5.3 28z" fill="#221c15" stroke="#221c15" stroke-width="0.35" opacity="0.5"/><path d="M54 36V80M56 36V80M58 36V80M53 50H60M53 53H60M53 56H60M53 70H60M2 40V82M4 60V84" fill="none" stroke="#1f1911" stroke-width="0.4" opacity="0.55"/><path d="M16.2 32.5 41.8 31.6 41.3 85.700 15.7 84.800z" fill="#050402" stroke="#050402" stroke-width="0.35"/><path d="M19.3 36.5 25.1 39.6 25.500 55 19.800 75z" fill="#16110c" stroke="#16110c" stroke-width="0.35"/><path d="M35 39.6 39.1 35.6 41.3 85.700 36 70.500z" fill="#1a140e" stroke="#1a140e" stroke-width="0.35"/><path d="M16.2 32.5 41.8 31.6 39.1 35.6 35 39.6 25.1 39.6 19.3 36.5z" fill="#0e0a06" stroke="#0e0a06" stroke-width="0.35"/><path d="M16.2 32.5 19.3 36.5 19.800 75 16.2 84.800z" fill="#4c4232" stroke="#4c4232" stroke-width="0.35"/><path d="M25.1 39.6 35 39.6 35 56 25.1 56z" fill="#0d0a07" stroke="#0d0a07" stroke-width="0.35"/><path d="M25.1 39.6 35 39.6 35 46.8 25.400000000000002 51.8z" fill="#392817" stroke="#392817" stroke-width="0.35"/><path d="M25.1 40.8H35" stroke="#251a10" stroke-width="0.6" opacity="0.7"/><path d="M25.1 42.5H35" stroke="#251a10" stroke-width="0.6" opacity="0.7"/><path d="M25.1 44.2H35" stroke="#251a10" stroke-width="0.6" opacity="0.7"/><path d="M25.400000000000002 52.6 35 53.0 35 54.2 25.400000000000002 53.7z" fill="#514738" stroke="#514738" stroke-width="0.35"/><path d="M19.800 75 25.500 56 35 56 36 70.500 41.3 85.700 34 82z" fill="#090705" stroke="#090705" stroke-width="0.35"/><path d="M5.8 52.2 13 52.6 13 54.800 5.8 54.400z" fill="#090705" stroke="#090705" stroke-width="0.35"/><path d="M0 85 15.700 84.800 34 82 41.300 85.700 60 84 60 90 0 90z" fill="#262018" stroke="#262018" stroke-width="0.35"/></g></symbol>
<symbol id="p15" viewBox="0 0 60 90" preserveAspectRatio="none"><linearGradient id="g15" gradientUnits="userSpaceOnUse" x1="30" y1="0" x2="30" y2="34"><stop offset="0" stop-color="#4c91f0"/><stop offset="1" stop-color="#cbf2ff"/></linearGradient><rect width="60" height="90" fill="url(#g15)"/><g filter="url(#nz)"><path d="M0 30.7 5 30.7 5 90 0 90z" fill="#f5ecd5" stroke="#f5ecd5" stroke-width="0.35"/><path d="M52.500 30.7 60 30.7 60 90 52.500 90z" fill="#f5ecd5" stroke="#f5ecd5" stroke-width="0.35"/><path d="M5.8 10.6 53 7.4 52.500 90 5 90z" fill="#f5ecd5" stroke="#f5ecd5" stroke-width="0.35"/><path d="M5.8 10.6 53 7.4 52.800 26 5.3 28z" fill="#ebdfca" stroke="#ebdfca" stroke-width="0.35" opacity="0.5"/><path d="M54 36V80M56 36V80M58 36V80M53 50H60M53 53H60M53 56H60M53 70H60M2 40V82M4 60V84" fill="none" stroke="#e7d7b3" stroke-width="0.4" opacity="0.55"/><path d="M16.2 32.5 41.8 31.6 41.3 85.700 15.7 84.800z" fill="#523e29" stroke="#523e29" stroke-width="0.35"/><path d="M19.3 36.5 25.1 39.6 25.500 55 19.800 75z" fill="#ccb591" stroke="#ccb591" stroke-width="0.35"/><path d="M35 39.6 39.1 35.6 41.3 85.700 36 70.500z" fill="#d9c6a5" stroke="#d9c6a5" stroke-width="0.35"/><path d="M16.2 32.5 41.8 31.6 39.1 35.6 35 39.6 25.1 39.6 19.3 36.5z" fill="#a3875d" stroke="#a3875d" stroke-width="0.35"/><path d="M16.2 32.5 19.3 36.5 19.800 75 16.2 84.800z" fill="#fffefa" stroke="#fffefa" stroke-width="0.35"/><path d="M25.1 39.6 35 39.6 35 56 25.1 56z" fill="#9c805f" stroke="#9c805f" stroke-width="0.35"/><path d="M25.1 39.6 35 39.6 35 46.8 25.400000000000002 51.8z" fill="#fcf3cf" stroke="#fcf3cf" stroke-width="0.35"/><path d="M25.1 40.8H35" stroke="#f0daad" stroke-width="0.6" opacity="0.7"/><path d="M25.1 42.5H35" stroke="#f0daad" stroke-width="0.6" opacity="0.7"/><path d="M25.1 44.2H35" stroke="#f0daad" stroke-width="0.6" opacity="0.7"/><path d="M25.400000000000002 52.6 35 53.0 35 54.2 25.400000000000002 53.7z" fill="#fffefc" stroke="#fffefc" stroke-width="0.35"/><path d="M19.800 75 25.500 56 35 56 36 70.500 41.3 85.700 34 82z" fill="#7e644a" stroke="#7e644a" stroke-width="0.35"/><path d="M5.8 52.2 13 52.6 13 54.800 5.8 54.400z" fill="#7e644a" stroke="#7e644a" stroke-width="0.35"/><path d="M0 85 15.700 84.800 34 82 41.300 85.700 60 84 60 90 0 90z" fill="#f1e8d5" stroke="#f1e8d5" stroke-width="0.35"/></g></symbol>
<symbol id="p16" viewBox="0 0 60 90" preserveAspectRatio="none"><linearGradient id="g16" gradientUnits="userSpaceOnUse" x1="40" y1="0" x2="48" y2="32"><stop offset="0" stop-color="#18358a"/><stop offset="1" stop-color="#5b90d2"/></linearGradient><rect width="60" height="90" fill="url(#g16)"/><g filter="url(#nz)"><path d="M44.400 31.2 60 32.2 60 90 44.400 90z" fill="#a5906f" stroke="#a5906f" stroke-width="0.35"/><path d="M46 34V54M49 34V54M52 34V54M55 34V54M58 34V54M45 57H60M45 59.500H60M45 62H60M45 67H60M45 69.500H60M47 72V80M50 72V80M53 72V80M56 72V80" fill="none" stroke="#7b6749" stroke-width="0.45" opacity="0.6"/><path d="M0 6.3 44.7 9.7 44.400 90 0 90z" fill="#978365" stroke="#978365" stroke-width="0.35"/><path d="M0 6.3 44.7 9.7 44.600 25 0 27z" fill="#82705a" stroke="#82705a" stroke-width="0.35" opacity="0.5"/><path d="M44.500 31V82" fill="none" stroke="#7b6749" stroke-width="0.5" opacity="0.7"/><path d="M8.1 30.6 34.8 31.8 34.8 83.500 8.900 87z" fill="#1a130c" stroke="#1a130c" stroke-width="0.35"/><path d="M9.6 34 19.4 39 19.7 63.1 13.6 78.1z" fill="#5c4a35" stroke="#5c4a35" stroke-width="0.35"/><path d="M29.3 39.3 32.500 34.500 34.8 83.500 29.3 65.200z" fill="#695740" stroke="#695740" stroke-width="0.35"/><path d="M8.1 30.6 34.8 31.8 32.500 34.500 29.3 39.3 19.4 39 9.6 34z" fill="#3f301e" stroke="#3f301e" stroke-width="0.35"/><path d="M8.1 30.8 9.6 34 12.9 58 12.9 78.1 8.900 87z" fill="#d4c6aa" stroke="#d4c6aa" stroke-width="0.35"/><path d="M19.4 39 29.3 39 29.3 63.1 19.4 63.1z" fill="#3b2d1f" stroke="#3b2d1f" stroke-width="0.35"/><path d="M19.4 39 29.3 39 29.3 46.3 19.7 51.4z" fill="#b7925f" stroke="#b7925f" stroke-width="0.35"/><path d="M19.4 40.2H29.3" stroke="#8b6a45" stroke-width="0.6" opacity="0.7"/><path d="M19.4 41.9H29.3" stroke="#8b6a45" stroke-width="0.6" opacity="0.7"/><path d="M19.4 43.6H29.3" stroke="#8b6a45" stroke-width="0.6" opacity="0.7"/><path d="M19.7 52.2 29.3 52.6 29.3 53.8 19.7 53.3z" fill="#d9cdb5" stroke="#d9cdb5" stroke-width="0.35"/><path d="M13.6 78.1 19.7 63.1 29.3 65.200 34.8 83.500z" fill="#2c2117" stroke="#2c2117" stroke-width="0.35"/><path d="M0 53.3 4.7 53.3 4.7 55.6 0 55.6z" fill="#2c2117" stroke="#2c2117" stroke-width="0.35"/><path d="M8.900 87 13.6 78.1 34.8 83.500 44.400 82.200 60 79.500 60 90 8 90z" fill="#8d7c64" stroke="#8d7c64" stroke-width="0.35"/></g></symbol>
<symbol id="p17" viewBox="0 0 60 90" preserveAspectRatio="none"><linearGradient id="g17" gradientUnits="userSpaceOnUse" x1="40" y1="0" x2="48" y2="32"><stop offset="0" stop-color="#0b194b"/><stop offset="1" stop-color="#2e508a"/></linearGradient><rect width="60" height="90" fill="url(#g17)"/><g filter="url(#nz)"><path d="M44.400 31.2 60 32.2 60 90 44.400 90z" fill="#5f503a" stroke="#5f503a" stroke-width="0.35"/><path d="M46 34V54M49 34V54M52 34V54M55 34V54M58 34V54M45 57H60M45 59.500H60M45 62H60M45 67H60M45 69.500H60M47 72V80M50 72V80M53 72V80M56 72V80" fill="none" stroke="#413524" stroke-width="0.45" opacity="0.6"/><path d="M0 6.3 44.7 9.7 44.400 90 0 90z" fill="#554734" stroke="#554734" stroke-width="0.35"/><path d="M0 6.3 44.7 9.7 44.600 25 0 27z" fill="#463a2d" stroke="#463a2d" stroke-width="0.35" opacity="0.5"/><path d="M44.500 31V82" fill="none" stroke="#413524" stroke-width="0.5" opacity="0.7"/><path d="M8.1 30.6 34.8 31.8 34.8 83.500 8.900 87z" fill="#0c0905" stroke="#0c0905" stroke-width="0.35"/><path d="M9.6 34 19.4 39 19.7 63.1 13.6 78.1z" fill="#2f2419" stroke="#2f2419" stroke-width="0.35"/><path d="M29.3 39.3 32.500 34.500 34.8 83.500 29.3 65.200z" fill="#362c1f" stroke="#362c1f" stroke-width="0.35"/><path d="M8.1 30.6 34.8 31.8 32.500 34.500 29.3 39.3 19.4 39 9.6 34z" fill="#1f170e" stroke="#1f170e" stroke-width="0.35"/><path d="M8.1 30.8 9.6 34 12.9 58 12.9 78.1 8.900 87z" fill="#8d7d63" stroke="#8d7d63" stroke-width="0.35"/><path d="M19.4 39 29.3 39 29.3 63.1 19.4 63.1z" fill="#1c150e" stroke="#1c150e" stroke-width="0.35"/><path d="M19.4 39 29.3 39 29.3 46.3 19.7 51.4z" fill="#6f5130" stroke="#6f5130" stroke-width="0.35"/><path d="M19.4 40.2H29.3" stroke="#4c3722" stroke-width="0.6" opacity="0.7"/><path d="M19.4 41.9H29.3" stroke="#4c3722" stroke-width="0.6" opacity="0.7"/><path d="M19.4 43.6H29.3" stroke="#4c3722" stroke-width="0.6" opacity="0.7"/><path d="M19.7 52.2 29.3 52.6 29.3 53.8 19.7 53.3z" fill="#93856d" stroke="#93856d" stroke-width="0.35"/><path d="M13.6 78.1 19.7 63.1 29.3 65.200 34.8 83.500z" fill="#150f0b" stroke="#150f0b" stroke-width="0.35"/><path d="M0 53.3 4.7 53.3 4.7 55.6 0 55.6z" fill="#150f0b" stroke="#150f0b" stroke-width="0.35"/><path d="M8.900 87 13.6 78.1 34.8 83.500 44.400 82.200 60 79.500 60 90 8 90z" fill="#4d4233" stroke="#4d4233" stroke-width="0.35"/></g></symbol>
<symbol id="p18" viewBox="0 0 60 90" preserveAspectRatio="none"><linearGradient id="g18" gradientUnits="userSpaceOnUse" x1="40" y1="0" x2="48" y2="32"><stop offset="0" stop-color="#2c5bc5"/><stop offset="1" stop-color="#91caf6"/></linearGradient><rect width="60" height="90" fill="url(#g18)"/><g filter="url(#nz)"><path d="M44.400 31.2 60 32.2 60 90 44.400 90z" fill="#dccaa9" stroke="#dccaa9" stroke-width="0.35"/><path d="M46 34V54M49 34V54M52 34V54M55 34V54M58 34V54M45 57H60M45 59.500H60M45 62H60M45 67H60M45 69.500H60M47 72V80M50 72V80M53 72V80M56 72V80" fill="none" stroke="#b6a079" stroke-width="0.45" opacity="0.6"/><path d="M0 6.3 44.7 9.7 44.400 90 0 90z" fill="#d1be9d" stroke="#d1be9d" stroke-width="0.35"/><path d="M0 6.3 44.7 9.7 44.600 25 0 27z" fill="#bdaa8f" stroke="#bdaa8f" stroke-width="0.35" opacity="0.5"/><path d="M44.500 31V82" fill="none" stroke="#b6a079" stroke-width="0.5" opacity="0.7"/><path d="M8.1 30.6 34.8 31.8 34.8 83.500 8.900 87z" fill="#2f2316" stroke="#2f2316" stroke-width="0.35"/><path d="M9.6 34 19.4 39 19.7 63.1 13.6 78.1z" fill="#927a5b" stroke="#927a5b" stroke-width="0.35"/><path d="M29.3 39.3 32.500 34.500 34.8 83.500 29.3 65.200z" fill="#a28c6c" stroke="#a28c6c" stroke-width="0.35"/><path d="M8.1 30.6 34.8 31.8 32.500 34.500 29.3 39.3 19.4 39 9.6 34z" fill="#6a5336" stroke="#6a5336" stroke-width="0.35"/><path d="M8.1 30.8 9.6 34 12.9 58 12.9 78.1 8.900 87z" fill="#f6f0df" stroke="#f6f0df" stroke-width="0.35"/><path d="M19.4 39 29.3 39 29.3 63.1 19.4 63.1z" fill="#644f38" stroke="#644f38" stroke-width="0.35"/><path d="M19.4 39 29.3 39 29.3 46.3 19.7 51.4z" fill="#e8cc96" stroke="#e8cc96" stroke-width="0.35"/><path d="M19.4 40.2H29.3" stroke="#c6a373" stroke-width="0.6" opacity="0.7"/><path d="M19.4 41.9H29.3" stroke="#c6a373" stroke-width="0.6" opacity="0.7"/><path d="M19.4 43.6H29.3" stroke="#c6a373" stroke-width="0.6" opacity="0.7"/><path d="M19.7 52.2 29.3 52.6 29.3 53.8 19.7 53.3z" fill="#f8f3e7" stroke="#f8f3e7" stroke-width="0.35"/><path d="M13.6 78.1 19.7 63.1 29.3 65.200 34.8 83.500z" fill="#4d3b2a" stroke="#4d3b2a" stroke-width="0.35"/><path d="M0 53.3 4.7 53.3 4.7 55.6 0 55.6z" fill="#4d3b2a" stroke="#4d3b2a" stroke-width="0.35"/><path d="M8.900 87 13.6 78.1 34.8 83.500 44.400 82.200 60 79.500 60 90 8 90z" fill="#c8b79c" stroke="#c8b79c" stroke-width="0.35"/></g></symbol>
<symbol id="p19" viewBox="0 0 60 90" preserveAspectRatio="none"><linearGradient id="g19" gradientUnits="userSpaceOnUse" x1="40" y1="0" x2="48" y2="32"><stop offset="0" stop-color="#050c25"/><stop offset="1" stop-color="#16274b"/></linearGradient><rect width="60" height="90" fill="url(#g19)"/><g filter="url(#nz)"><path d="M44.400 31.2 60 32.2 60 90 44.400 90z" fill="#30271c" stroke="#30271c" stroke-width="0.35"/><path d="M46 34V54M49 34V54M52 34V54M55 34V54M58 34V54M45 57H60M45 59.500H60M45 62H60M45 67H60M45 69.500H60M47 72V80M50 72V80M53 72V80M56 72V80" fill="none" stroke="#1f1911" stroke-width="0.45" opacity="0.6"/><path d="M0 6.3 44.7 9.7 44.400 90 0 90z" fill="#2a2218" stroke="#2a2218" stroke-width="0.35"/><path d="M0 6.3 44.7 9.7 44.600 25 0 27z" fill="#221c15" stroke="#221c15" stroke-width="0.35" opacity="0.5"/><path d="M44.500 31V82" fill="none" stroke="#1f1911" stroke-width="0.5" opacity="0.7"/><path d="M8.1 30.6 34.8 31.8 34.8 83.500 8.900 87z" fill="#050402" stroke="#050402" stroke-width="0.35"/><path d="M9.6 34 19.4 39 19.7 63.1 13.6 78.1z" fill="#16110c" stroke="#16110c" stroke-width="0.35"/><path d="M29.3 39.3 32.500 34.500 34.8 83.500 29.3 65.200z" fill="#1a140e" stroke="#1a140e" stroke-width="0.35"/><path d="M8.1 30.6 34.8 31.8 32.500 34.500 29.3 39.3 19.4 39 9.6 34z" fill="#0e0a06" stroke="#0e0a06" stroke-width="0.35"/><path d="M8.1 30.8 9.6 34 12.9 58 12.9 78.1 8.900 87z" fill="#4c4232" stroke="#4c4232" stroke-width="0.35"/><path d="M19.4 39 29.3 39 29.3 63.1 19.4 63.1z" fill="#0d0a07" stroke="#0d0a07" stroke-width="0.35"/><path d="M19.4 39 29.3 39 29.3 46.3 19.7 51.4z" fill="#392817" stroke="#392817" stroke-width="0.35"/><path d="M19.4 40.2H29.3" stroke="#251a10" stroke-width="0.6" opacity="0.7"/><path d="M19.4 41.9H29.3" stroke="#251a10" stroke-width="0.6" opacity="0.7"/><path d="M19.4 43.6H29.3" stroke="#251a10" stroke-width="0.6" opacity="0.7"/><path d="M19.7 52.2 29.3 52.6 29.3 53.8 19.7 53.3z" fill="#514738" stroke="#514738" stroke-width="0.35"/><path d="M13.6 78.1 19.7 63.1 29.3 65.200 34.8 83.500z" fill="#090705" stroke="#090705" stroke-width="0.35"/><path d="M0 53.3 4.7 53.3 4.7 55.6 0 55.6z" fill="#090705" stroke="#090705" stroke-width="0.35"/><path d="M8.900 87 13.6 78.1 34.8 83.500 44.400 82.200 60 79.500 60 90 8 90z" fill="#262018" stroke="#262018" stroke-width="0.35"/></g></symbol>
<symbol id="p20" viewBox="0 0 60 90" preserveAspectRatio="none"><linearGradient id="g20" gradientUnits="userSpaceOnUse" x1="40" y1="0" x2="48" y2="32"><stop offset="0" stop-color="#4c91f0"/><stop offset="1" stop-color="#cbf2ff"/></linearGradient><rect width="60" height="90" fill="url(#g20)"/><g filter="url(#nz)"><path d="M44.400 31.2 60 32.2 60 90 44.400 90z" fill="#f9f2de" stroke="#f9f2de" stroke-width="0.35"/><path d="M46 34V54M49 34V54M52 34V54M55 34V54M58 34V54M45 57H60M45 59.500H60M45 62H60M45 67H60M45 69.500H60M47 72V80M50 72V80M53 72V80M56 72V80" fill="none" stroke="#e7d7b3" stroke-width="0.45" opacity="0.6"/><path d="M0 6.3 44.7 9.7 44.400 90 0 90z" fill="#f5ecd5" stroke="#f5ecd5" stroke-width="0.35"/><path d="M0 6.3 44.7 9.7 44.600 25 0 27z" fill="#ebdfca" stroke="#ebdfca" stroke-width="0.35" opacity="0.5"/><path d="M44.500 31V82" fill="none" stroke="#e7d7b3" stroke-width="0.5" opacity="0.7"/><path d="M8.1 30.6 34.8 31.8 34.8 83.500 8.900 87z" fill="#523e29" stroke="#523e29" stroke-width="0.35"/><path d="M9.6 34 19.4 39 19.7 63.1 13.6 78.1z" fill="#ccb591" stroke="#ccb591" stroke-width="0.35"/><path d="M29.3 39.3 32.500 34.500 34.8 83.500 29.3 65.200z" fill="#d9c6a5" stroke="#d9c6a5" stroke-width="0.35"/><path d="M8.1 30.6 34.8 31.8 32.500 34.500 29.3 39.3 19.4 39 9.6 34z" fill="#a3875d" stroke="#a3875d" stroke-width="0.35"/><path d="M8.1 30.8 9.6 34 12.9 58 12.9 78.1 8.900 87z" fill="#fffefa" stroke="#fffefa" stroke-width="0.35"/><path d="M19.4 39 29.3 39 29.3 63.1 19.4 63.1z" fill="#9c805f" stroke="#9c805f" stroke-width="0.35"/><path d="M19.4 39 29.3 39 29.3 46.3 19.7 51.4z" fill="#fcf3cf" stroke="#fcf3cf" stroke-width="0.35"/><path d="M19.4 40.2H29.3" stroke="#f0daad" stroke-width="0.6" opacity="0.7"/><path d="M19.4 41.9H29.3" stroke="#f0daad" stroke-width="0.6" opacity="0.7"/><path d="M19.4 43.6H29.3" stroke="#f0daad" stroke-width="0.6" opacity="0.7"/><path d="M19.7 52.2 29.3 52.6 29.3 53.8 19.7 53.3z" fill="#fffefc" stroke="#fffefc" stroke-width="0.35"/><path d="M13.6 78.1 19.7 63.1 29.3 65.200 34.8 83.500z" fill="#7e644a" stroke="#7e644a" stroke-width="0.35"/><path d="M0 53.3 4.7 53.3 4.7 55.6 0 55.6z" fill="#7e644a" stroke="#7e644a" stroke-width="0.35"/><path d="M8.900 87 13.6 78.1 34.8 83.500 44.400 82.200 60 79.500 60 90 8 90z" fill="#f1e8d5" stroke="#f1e8d5" stroke-width="0.35"/></g></symbol>
<symbol id="p21" viewBox="0 0 60 90" preserveAspectRatio="none"><linearGradient id="g21" gradientUnits="userSpaceOnUse" x1="34" y1="0" x2="62" y2="44"><stop offset="0" stop-color="#18358a"/><stop offset="1" stop-color="#5b90d2"/></linearGradient><rect width="60" height="90" fill="url(#g21)"/><g filter="url(#nz)"><path d="M33.1 31.2 55.3 35.6 56 42 60 42.4 60 66 32 80z" fill="#ab9674" stroke="#ab9674" stroke-width="0.35"/><path d="M36 33V50M40 34V52M44 34.500V53M48 35.500V52M52 36V50M34 55L58 50M34 58L58 52.500M34 61L58 55M38 63V74M42 62V72M46 60.500V70M50 59V68M54 58V66" fill="none" stroke="#7b6749" stroke-width="0.45" opacity="0.55"/><path d="M0 0 9 0 33.6 10.4 33.1 31.2 32.7 78.1 24.2 82.500 0 82.900z" fill="#978365" stroke="#978365" stroke-width="0.35"/><path d="M0 0 9 0 33.6 10.4 33.4 22 0 20z" fill="#82705a" stroke="#82705a" stroke-width="0.35" opacity="0.5"/><path d="M32.900 31V78" fill="none" stroke="#7b6749" stroke-width="0.5" opacity="0.7"/><path d="M0 26.7 23.7 30.5 24.2 82.500 0 82.900z" fill="#1a130c" stroke="#1a130c" stroke-width="0.35"/><path d="M0 32 8.1 38 8.4 63.1 0 77.4z" fill="#695740" stroke="#695740" stroke-width="0.35"/><path d="M19.7 38 21.700 33.500 23.7 30.5 24.2 82.500 21.1 73.300z" fill="#695740" stroke="#695740" stroke-width="0.35"/><path d="M0 26.7 23.7 30.5 21.700 33.500 19.7 38 8.1 38 0 32z" fill="#3f301e" stroke="#3f301e" stroke-width="0.35"/><path d="M8.1 38 19.7 38 19.7 63 8.1 63z" fill="#3b2d1f" stroke="#3b2d1f" stroke-width="0.35"/><path d="M8.1 38 19.7 38 19.7 45.8 8.4 51.4z" fill="#b7925f" stroke="#b7925f" stroke-width="0.35"/><path d="M8.1 39.2H19.7" stroke="#8b6a45" stroke-width="0.6" opacity="0.7"/><path d="M8.1 40.9H19.7" stroke="#8b6a45" stroke-width="0.6" opacity="0.7"/><path d="M8.1 42.6H19.7" stroke="#8b6a45" stroke-width="0.6" opacity="0.7"/><path d="M8.4 52.2 19.7 52.6 19.7 53.8 8.4 53.3z" fill="#d9cdb5" stroke="#d9cdb5" stroke-width="0.35"/><path d="M0 77.4 8.4 63.1 19.7 63 21.1 73.300 24.2 82.500 0 82.900z" fill="#2c2117" stroke="#2c2117" stroke-width="0.35"/><path d="M0 82.900 24.2 82.500 32.700 78.100 60 65.900 60 90 0 90z" fill="#c9bfad" stroke="#c9bfad" stroke-width="0.35"/></g></symbol>
<symbol id="p22" viewBox="0 0 60 90" preserveAspectRatio="none"><linearGradient id="g22" gradientUnits="userSpaceOnUse" x1="34" y1="0" x2="62" y2="44"><stop offset="0" stop-color="#0b194b"/><stop offset="1" stop-color="#2e508a"/></linearGradient><rect width="60" height="90" fill="url(#g22)"/><g filter="url(#nz)"><path d="M33.1 31.2 55.3 35.6 56 42 60 42.4 60 66 32 80z" fill="#64543d" stroke="#64543d" stroke-width="0.35"/><path d="M36 33V50M40 34V52M44 34.500V53M48 35.500V52M52 36V50M34 55L58 50M34 58L58 52.500M34 61L58 55M38 63V74M42 62V72M46 60.500V70M50 59V68M54 58V66" fill="none" stroke="#413524" stroke-width="0.45" opacity="0.55"/><path d="M0 0 9 0 33.6 10.4 33.1 31.2 32.7 78.1 24.2 82.500 0 82.900z" fill="#554734" stroke="#554734" stroke-width="0.35"/><path d="M0 0 9 0 33.6 10.4 33.4 22 0 20z" fill="#463a2d" stroke="#463a2d" stroke-width="0.35" opacity="0.5"/><path d="M32.900 31V78" fill="none" stroke="#413524" stroke-width="0.5" opacity="0.7"/><path d="M0 26.7 23.7 30.5 24.2 82.500 0 82.900z" fill="#0c0905" stroke="#0c0905" stroke-width="0.35"/><path d="M0 32 8.1 38 8.4 63.1 0 77.4z" fill="#362c1f" stroke="#362c1f" stroke-width="0.35"/><path d="M19.7 38 21.700 33.500 23.7 30.5 24.2 82.500 21.1 73.300z" fill="#362c1f" stroke="#362c1f" stroke-width="0.35"/><path d="M0 26.7 23.7 30.5 21.700 33.500 19.7 38 8.1 38 0 32z" fill="#1f170e" stroke="#1f170e" stroke-width="0.35"/><path d="M8.1 38 19.7 38 19.7 63 8.1 63z" fill="#1c150e" stroke="#1c150e" stroke-width="0.35"/><path d="M8.1 38 19.7 38 19.7 45.8 8.4 51.4z" fill="#6f5130" stroke="#6f5130" stroke-width="0.35"/><path d="M8.1 39.2H19.7" stroke="#4c3722" stroke-width="0.6" opacity="0.7"/><path d="M8.1 40.9H19.7" stroke="#4c3722" stroke-width="0.6" opacity="0.7"/><path d="M8.1 42.6H19.7" stroke="#4c3722" stroke-width="0.6" opacity="0.7"/><path d="M8.4 52.2 19.7 52.6 19.7 53.8 8.4 53.3z" fill="#93856d" stroke="#93856d" stroke-width="0.35"/><path d="M0 77.4 8.4 63.1 19.7 63 21.1 73.300 24.2 82.500 0 82.900z" fill="#150f0b" stroke="#150f0b" stroke-width="0.35"/><path d="M0 82.900 24.2 82.500 32.700 78.100 60 65.900 60 90 0 90z" fill="#807666" stroke="#807666" stroke-width="0.35"/></g></symbol>
<symbol id="p23" viewBox="0 0 60 90" preserveAspectRatio="none"><linearGradient id="g23" gradientUnits="userSpaceOnUse" x1="34" y1="0" x2="62" y2="44"><stop offset="0" stop-color="#2c5bc5"/><stop offset="1" stop-color="#91caf6"/></linearGradient><rect width="60" height="90" fill="url(#g23)"/><g filter="url(#nz)"><path d="M33.1 31.2 55.3 35.6 56 42 60 42.4 60 66 32 80z" fill="#e0d0ae" stroke="#e0d0ae" stroke-width="0.35"/><path d="M36 33V50M40 34V52M44 34.500V53M48 35.500V52M52 36V50M34 55L58 50M34 58L58 52.500M34 61L58 55M38 63V74M42 62V72M46 60.500V70M50 59V68M54 58V66" fill="none" stroke="#b6a079" stroke-width="0.45" opacity="0.55"/><path d="M0 0 9 0 33.6 10.4 33.1 31.2 32.7 78.1 24.2 82.500 0 82.900z" fill="#d1be9d" stroke="#d1be9d" stroke-width="0.35"/><path d="M0 0 9 0 33.6 10.4 33.4 22 0 20z" fill="#bdaa8f" stroke="#bdaa8f" stroke-width="0.35" opacity="0.5"/><path d="M32.900 31V78" fill="none" stroke="#b6a079" stroke-width="0.5" opacity="0.7"/><path d="M0 26.7 23.7 30.5 24.2 82.500 0 82.900z" fill="#2f2316" stroke="#2f2316" stroke-width="0.35"/><path d="M0 32 8.1 38 8.4 63.1 0 77.4z" fill="#a28c6c" stroke="#a28c6c" stroke-width="0.35"/><path d="M19.7 38 21.700 33.500 23.7 30.5 24.2 82.500 21.1 73.300z" fill="#a28c6c" stroke="#a28c6c" stroke-width="0.35"/><path d="M0 26.7 23.7 30.5 21.700 33.500 19.7 38 8.1 38 0 32z" fill="#6a5336" stroke="#6a5336" stroke-width="0.35"/><path d="M8.1 38 19.7 38 19.7 63 8.1 63z" fill="#644f38" stroke="#644f38" stroke-width="0.35"/><path d="M8.1 38 19.7 38 19.7 45.8 8.4 51.4z" fill="#e8cc96" stroke="#e8cc96" stroke-width="0.35"/><path d="M8.1 39.2H19.7" stroke="#c6a373" stroke-width="0.6" opacity="0.7"/><path d="M8.1 40.9H19.7" stroke="#c6a373" stroke-width="0.6" opacity="0.7"/><path d="M8.1 42.6H19.7" stroke="#c6a373" stroke-width="0.6" opacity="0.7"/><path d="M8.4 52.2 19.7 52.6 19.7 53.8 8.4 53.3z" fill="#f8f3e7" stroke="#f8f3e7" stroke-width="0.35"/><path d="M0 77.4 8.4 63.1 19.7 63 21.1 73.300 24.2 82.500 0 82.900z" fill="#4d3b2a" stroke="#4d3b2a" stroke-width="0.35"/><path d="M0 82.900 24.2 82.500 32.700 78.100 60 65.900 60 90 0 90z" fill="#f2ede1" stroke="#f2ede1" stroke-width="0.35"/></g></symbol>
<symbol id="p24" viewBox="0 0 60 90" preserveAspectRatio="none"><linearGradient id="g24" gradientUnits="userSpaceOnUse" x1="34" y1="0" x2="62" y2="44"><stop offset="0" stop-color="#050c25"/><stop offset="1" stop-color="#16274b"/></linearGradient><rect width="60" height="90" fill="url(#g24)"/><g filter="url(#nz)"><path d="M33.1 31.2 55.3 35.6 56 42 60 42.4 60 66 32 80z" fill="#33291d" stroke="#33291d" stroke-width="0.35"/><path d="M36 33V50M40 34V52M44 34.500V53M48 35.500V52M52 36V50M34 55L58 50M34 58L58 52.500M34 61L58 55M38 63V74M42 62V72M46 60.500V70M50 59V68M54 58V66" fill="none" stroke="#1f1911" stroke-width="0.45" opacity="0.55"/><path d="M0 0 9 0 33.6 10.4 33.1 31.2 32.7 78.1 24.2 82.500 0 82.900z" fill="#2a2218" stroke="#2a2218" stroke-width="0.35"/><path d="M0 0 9 0 33.6 10.4 33.4 22 0 20z" fill="#221c15" stroke="#221c15" stroke-width="0.35" opacity="0.5"/><path d="M32.900 31V78" fill="none" stroke="#1f1911" stroke-width="0.5" opacity="0.7"/><path d="M0 26.7 23.7 30.5 24.2 82.500 0 82.900z" fill="#050402" stroke="#050402" stroke-width="0.35"/><path d="M0 32 8.1 38 8.4 63.1 0 77.4z" fill="#1a140e" stroke="#1a140e" stroke-width="0.35"/><path d="M19.7 38 21.700 33.500 23.7 30.5 24.2 82.500 21.1 73.300z" fill="#1a140e" stroke="#1a140e" stroke-width="0.35"/><path d="M0 26.7 23.7 30.5 21.700 33.500 19.7 38 8.1 38 0 32z" fill="#0e0a06" stroke="#0e0a06" stroke-width="0.35"/><path d="M8.1 38 19.7 38 19.7 63 8.1 63z" fill="#0d0a07" stroke="#0d0a07" stroke-width="0.35"/><path d="M8.1 38 19.7 38 19.7 45.8 8.4 51.4z" fill="#392817" stroke="#392817" stroke-width="0.35"/><path d="M8.1 39.2H19.7" stroke="#251a10" stroke-width="0.6" opacity="0.7"/><path d="M8.1 40.9H19.7" stroke="#251a10" stroke-width="0.6" opacity="0.7"/><path d="M8.1 42.6H19.7" stroke="#251a10" stroke-width="0.6" opacity="0.7"/><path d="M8.4 52.2 19.7 52.6 19.7 53.8 8.4 53.3z" fill="#514738" stroke="#514738" stroke-width="0.35"/><path d="M0 77.4 8.4 63.1 19.7 63 21.1 73.300 24.2 82.500 0 82.900z" fill="#090705" stroke="#090705" stroke-width="0.35"/><path d="M0 82.900 24.2 82.500 32.700 78.100 60 65.900 60 90 0 90z" fill="#443e34" stroke="#443e34" stroke-width="0.35"/></g></symbol>
<symbol id="p25" viewBox="0 0 60 90" preserveAspectRatio="none"><linearGradient id="g25" gradientUnits="userSpaceOnUse" x1="34" y1="0" x2="62" y2="44"><stop offset="0" stop-color="#4c91f0"/><stop offset="1" stop-color="#cbf2ff"/></linearGradient><rect width="60" height="90" fill="url(#g25)"/><g filter="url(#nz)"><path d="M33.1 31.2 55.3 35.6 56 42 60 42.4 60 66 32 80z" fill="#faf5e2" stroke="#faf5e2" stroke-width="0.35"/><path d="M36 33V50M40 34V52M44 34.500V53M48 35.500V52M52 36V50M34 55L58 50M34 58L58 52.500M34 61L58 55M38 63V74M42 62V72M46 60.500V70M50 59V68M54 58V66" fill="none" stroke="#e7d7b3" stroke-width="0.45" opacity="0.55"/><path d="M0 0 9 0 33.6 10.4 33.1 31.2 32.7 78.1 24.2 82.500 0 82.900z" fill="#f5ecd5" stroke="#f5ecd5" stroke-width="0.35"/><path d="M0 0 9 0 33.6 10.4 33.4 22 0 20z" fill="#ebdfca" stroke="#ebdfca" stroke-width="0.35" opacity="0.5"/><path d="M32.900 31V78" fill="none" stroke="#e7d7b3" stroke-width="0.5" opacity="0.7"/><path d="M0 26.7 23.7 30.5 24.2 82.500 0 82.900z" fill="#523e29" stroke="#523e29" stroke-width="0.35"/><path d="M0 32 8.1 38 8.4 63.1 0 77.4z" fill="#d9c6a5" stroke="#d9c6a5" stroke-width="0.35"/><path d="M19.7 38 21.700 33.500 23.7 30.5 24.2 82.500 21.1 73.300z" fill="#d9c6a5" stroke="#d9c6a5" stroke-width="0.35"/><path d="M0 26.7 23.7 30.5 21.700 33.500 19.7 38 8.1 38 0 32z" fill="#a3875d" stroke="#a3875d" stroke-width="0.35"/><path d="M8.1 38 19.7 38 19.7 63 8.1 63z" fill="#9c805f" stroke="#9c805f" stroke-width="0.35"/><path d="M8.1 38 19.7 38 19.7 45.8 8.4 51.4z" fill="#fcf3cf" stroke="#fcf3cf" stroke-width="0.35"/><path d="M8.1 39.2H19.7" stroke="#f0daad" stroke-width="0.6" opacity="0.7"/><path d="M8.1 40.9H19.7" stroke="#f0daad" stroke-width="0.6" opacity="0.7"/><path d="M8.1 42.6H19.7" stroke="#f0daad" stroke-width="0.6" opacity="0.7"/><path d="M8.4 52.2 19.7 52.6 19.7 53.8 8.4 53.3z" fill="#fffefc" stroke="#fffefc" stroke-width="0.35"/><path d="M0 77.4 8.4 63.1 19.7 63 21.1 73.300 24.2 82.500 0 82.900z" fill="#7e644a" stroke="#7e644a" stroke-width="0.35"/><path d="M0 82.900 24.2 82.500 32.700 78.100 60 65.900 60 90 0 90z" fill="#fefdfb" stroke="#fefdfb" stroke-width="0.35"/></g></symbol>
<symbol id="p26" viewBox="0 0 60 90" preserveAspectRatio="none"><linearGradient id="g26" gradientUnits="userSpaceOnUse" x1="26" y1="0" x2="62" y2="46"><stop offset="0" stop-color="#18358a"/><stop offset="1" stop-color="#5b90d2"/></linearGradient><rect width="60" height="90" fill="url(#g26)"/><g filter="url(#nz)"><path d="M45 42.5 47 40.500 52 41 53 39.500 60 40 60 49 45 49z" fill="#82705a" stroke="#82705a" stroke-width="0.35"/><path d="M23.9 29.9 44.7 35.3 45.1 42.1 60 47 60 54.200 23 80z" fill="#ab9674" stroke="#ab9674" stroke-width="0.35"/><path d="M27 31.500V48M31 32.500V49M35 33.500V50M39 34.500V50M43 35.500V49M25 52L52 47M25 55L50 50M25 58L48 53M28 60V72M32 58.500V69M36 57V66M40 55.500V63" fill="none" stroke="#7b6749" stroke-width="0.45" opacity="0.55"/><path d="M0 0 9 0 24.4 8.8 23.9 29.9 23.5 78.500 14.400 84.800 0 86z" fill="#978365" stroke="#978365" stroke-width="0.35"/><path d="M0 0 9 0 24.4 8.8 24.200 20 0 19z" fill="#82705a" stroke="#82705a" stroke-width="0.35" opacity="0.5"/><path d="M23.700 30V78" fill="none" stroke="#7b6749" stroke-width="0.5" opacity="0.7"/><path d="M0 25 12.6 28.1 14.4 84.800 0 86z" fill="#1a130c" stroke="#1a130c" stroke-width="0.35"/><path d="M9.900 35.300 11.500 31 12.6 28.1 14.4 84.800 11.500 72z" fill="#695740" stroke="#695740" stroke-width="0.35"/><path d="M0 25 12.6 28.1 11.500 31 9.900 35.300 0 35.300z" fill="#3f301e" stroke="#3f301e" stroke-width="0.35"/><path d="M0 35.3 9.9 35.3 9.9 56 0 56z" fill="#3b2d1f" stroke="#3b2d1f" stroke-width="0.35"/><path d="M0 35.3 9.9 35.3 9.9 45.0 0.3 52.2z" fill="#b7925f" stroke="#b7925f" stroke-width="0.35"/><path d="M0 36.5H9.9" stroke="#8b6a45" stroke-width="0.6" opacity="0.7"/><path d="M0 38.2H9.9" stroke="#8b6a45" stroke-width="0.6" opacity="0.7"/><path d="M0 39.9H9.9" stroke="#8b6a45" stroke-width="0.6" opacity="0.7"/><path d="M0.3 53 9.9 53.4 9.9 54.6 0.3 54.1z" fill="#d9cdb5" stroke="#d9cdb5" stroke-width="0.35"/><path d="M0 56 9.900 56 11.500 72 14.4 84.800 0 86z" fill="#2c2117" stroke="#2c2117" stroke-width="0.35"/><path d="M0 86 14.4 84.800 23.500 78.500 60 54.200 60 90 0 90z" fill="#c9bfad" stroke="#c9bfad" stroke-width="0.35"/></g></symbol>
<symbol id="p27" viewBox="0 0 60 90" preserveAspectRatio="none"><linearGradient id="g27" gradientUnits="userSpaceOnUse" x1="26" y1="0" x2="62" y2="46"><stop offset="0" stop-color="#0b194b"/><stop offset="1" stop-color="#2e508a"/></linearGradient><rect width="60" height="90" fill="url(#g27)"/><g filter="url(#nz)"><path d="M45 42.5 47 40.500 52 41 53 39.500 60 40 60 49 45 49z" fill="#463a2d" stroke="#463a2d" stroke-width="0.35"/><path d="M23.9 29.9 44.7 35.3 45.1 42.1 60 47 60 54.200 23 80z" fill="#64543d" stroke="#64543d" stroke-width="0.35"/><path d="M27 31.500V48M31 32.500V49M35 33.500V50M39 34.500V50M43 35.500V49M25 52L52 47M25 55L50 50M25 58L48 53M28 60V72M32 58.500V69M36 57V66M40 55.500V63" fill="none" stroke="#413524" stroke-width="0.45" opacity="0.55"/><path d="M0 0 9 0 24.4 8.8 23.9 29.9 23.5 78.500 14.400 84.800 0 86z" fill="#554734" stroke="#554734" stroke-width="0.35"/><path d="M0 0 9 0 24.4 8.8 24.200 20 0 19z" fill="#463a2d" stroke="#463a2d" stroke-width="0.35" opacity="0.5"/><path d="M23.700 30V78" fill="none" stroke="#413524" stroke-width="0.5" opacity="0.7"/><path d="M0 25 12.6 28.1 14.4 84.800 0 86z" fill="#0c0905" stroke="#0c0905" stroke-width="0.35"/><path d="M9.900 35.300 11.500 31 12.6 28.1 14.4 84.800 11.500 72z" fill="#362c1f" stroke="#362c1f" stroke-width="0.35"/><path d="M0 25 12.6 28.1 11.500 31 9.900 35.300 0 35.300z" fill="#1f170e" stroke="#1f170e" stroke-width="0.35"/><path d="M0 35.3 9.9 35.3 9.9 56 0 56z" fill="#1c150e" stroke="#1c150e" stroke-width="0.35"/><path d="M0 35.3 9.9 35.3 9.9 45.0 0.3 52.2z" fill="#6f5130" stroke="#6f5130" stroke-width="0.35"/><path d="M0 36.5H9.9" stroke="#4c3722" stroke-width="0.6" opacity="0.7"/><path d="M0 38.2H9.9" stroke="#4c3722" stroke-width="0.6" opacity="0.7"/><path d="M0 39.9H9.9" stroke="#4c3722" stroke-width="0.6" opacity="0.7"/><path d="M0.3 53 9.9 53.4 9.9 54.6 0.3 54.1z" fill="#93856d" stroke="#93856d" stroke-width="0.35"/><path d="M0 56 9.900 56 11.500 72 14.4 84.800 0 86z" fill="#150f0b" stroke="#150f0b" stroke-width="0.35"/><path d="M0 86 14.4 84.800 23.500 78.500 60 54.200 60 90 0 90z" fill="#807666" stroke="#807666" stroke-width="0.35"/></g></symbol>
<symbol id="p28" viewBox="0 0 60 90" preserveAspectRatio="none"><linearGradient id="g28" gradientUnits="userSpaceOnUse" x1="26" y1="0" x2="62" y2="46"><stop offset="0" stop-color="#2c5bc5"/><stop offset="1" stop-color="#91caf6"/></linearGradient><rect width="60" height="90" fill="url(#g28)"/><g filter="url(#nz)"><path d="M45 42.5 47 40.500 52 41 53 39.500 60 40 60 49 45 49z" fill="#bdaa8f" stroke="#bdaa8f" stroke-width="0.35"/><path d="M23.9 29.9 44.7 35.3 45.1 42.1 60 47 60 54.200 23 80z" fill="#e0d0ae" stroke="#e0d0ae" stroke-width="0.35"/><path d="M27 31.500V48M31 32.500V49M35 33.500V50M39 34.500V50M43 35.500V49M25 52L52 47M25 55L50 50M25 58L48 53M28 60V72M32 58.500V69M36 57V66M40 55.500V63" fill="none" stroke="#b6a079" stroke-width="0.45" opacity="0.55"/><path d="M0 0 9 0 24.4 8.8 23.9 29.9 23.5 78.500 14.400 84.800 0 86z" fill="#d1be9d" stroke="#d1be9d" stroke-width="0.35"/><path d="M0 0 9 0 24.4 8.8 24.200 20 0 19z" fill="#bdaa8f" stroke="#bdaa8f" stroke-width="0.35" opacity="0.5"/><path d="M23.700 30V78" fill="none" stroke="#b6a079" stroke-width="0.5" opacity="0.7"/><path d="M0 25 12.6 28.1 14.4 84.800 0 86z" fill="#2f2316" stroke="#2f2316" stroke-width="0.35"/><path d="M9.900 35.300 11.500 31 12.6 28.1 14.4 84.800 11.500 72z" fill="#a28c6c" stroke="#a28c6c" stroke-width="0.35"/><path d="M0 25 12.6 28.1 11.500 31 9.900 35.300 0 35.300z" fill="#6a5336" stroke="#6a5336" stroke-width="0.35"/><path d="M0 35.3 9.9 35.3 9.9 56 0 56z" fill="#644f38" stroke="#644f38" stroke-width="0.35"/><path d="M0 35.3 9.9 35.3 9.9 45.0 0.3 52.2z" fill="#e8cc96" stroke="#e8cc96" stroke-width="0.35"/><path d="M0 36.5H9.9" stroke="#c6a373" stroke-width="0.6" opacity="0.7"/><path d="M0 38.2H9.9" stroke="#c6a373" stroke-width="0.6" opacity="0.7"/><path d="M0 39.9H9.9" stroke="#c6a373" stroke-width="0.6" opacity="0.7"/><path d="M0.3 53 9.9 53.4 9.9 54.6 0.3 54.1z" fill="#f8f3e7" stroke="#f8f3e7" stroke-width="0.35"/><path d="M0 56 9.900 56 11.500 72 14.4 84.800 0 86z" fill="#4d3b2a" stroke="#4d3b2a" stroke-width="0.35"/><path d="M0 86 14.4 84.800 23.500 78.500 60 54.200 60 90 0 90z" fill="#f2ede1" stroke="#f2ede1" stroke-width="0.35"/></g></symbol>
<symbol id="p29" viewBox="0 0 60 90" preserveAspectRatio="none"><linearGradient id="g29" gradientUnits="userSpaceOnUse" x1="26" y1="0" x2="62" y2="46"><stop offset="0" stop-color="#050c25"/><stop offset="1" stop-color="#16274b"/></linearGradient><rect width="60" height="90" fill="url(#g29)"/><g filter="url(#nz)"><path d="M45 42.5 47 40.500 52 41 53 39.500 60 40 60 49 45 49z" fill="#221c15" stroke="#221c15" stroke-width="0.35"/><path d="M23.9 29.9 44.7 35.3 45.1 42.1 60 47 60 54.200 23 80z" fill="#33291d" stroke="#33291d" stroke-width="0.35"/><path d="M27 31.500V48M31 32.500V49M35 33.500V50M39 34.500V50M43 35.500V49M25 52L52 47M25 55L50 50M25 58L48 53M28 60V72M32 58.500V69M36 57V66M40 55.500V63" fill="none" stroke="#1f1911" stroke-width="0.45" opacity="0.55"/><path d="M0 0 9 0 24.4 8.8 23.9 29.9 23.5 78.500 14.400 84.800 0 86z" fill="#2a2218" stroke="#2a2218" stroke-width="0.35"/><path d="M0 0 9 0 24.4 8.8 24.200 20 0 19z" fill="#221c15" stroke="#221c15" stroke-width="0.35" opacity="0.5"/><path d="M23.700 30V78" fill="none" stroke="#1f1911" stroke-width="0.5" opacity="0.7"/><path d="M0 25 12.6 28.1 14.4 84.800 0 86z" fill="#050402" stroke="#050402" stroke-width="0.35"/><path d="M9.900 35.300 11.500 31 12.6 28.1 14.4 84.800 11.500 72z" fill="#1a140e" stroke="#1a140e" stroke-width="0.35"/><path d="M0 25 12.6 28.1 11.500 31 9.900 35.300 0 35.300z" fill="#0e0a06" stroke="#0e0a06" stroke-width="0.35"/><path d="M0 35.3 9.9 35.3 9.9 56 0 56z" fill="#0d0a07" stroke="#0d0a07" stroke-width="0.35"/><path d="M0 35.3 9.9 35.3 9.9 45.0 0.3 52.2z" fill="#392817" stroke="#392817" stroke-width="0.35"/><path d="M0 36.5H9.9" stroke="#251a10" stroke-width="0.6" opacity="0.7"/><path d="M0 38.2H9.9" stroke="#251a10" stroke-width="0.6" opacity="0.7"/><path d="M0 39.9H9.9" stroke="#251a10" stroke-width="0.6" opacity="0.7"/><path d="M0.3 53 9.9 53.4 9.9 54.6 0.3 54.1z" fill="#514738" stroke="#514738" stroke-width="0.35"/><path d="M0 56 9.900 56 11.500 72 14.4 84.800 0 86z" fill="#090705" stroke="#090705" stroke-width="0.35"/><path d="M0 86 14.4 84.800 23.500 78.500 60 54.200 60 90 0 90z" fill="#443e34" stroke="#443e34" stroke-width="0.35"/></g></symbol>
<symbol id="p30" viewBox="0 0 60 90" preserveAspectRatio="none"><linearGradient id="g30" gradientUnits="userSpaceOnUse" x1="26" y1="0" x2="62" y2="46"><stop offset="0" stop-color="#4c91f0"/><stop offset="1" stop-color="#cbf2ff"/></linearGradient><rect width="60" height="90" fill="url(#g30)"/><g filter="url(#nz)"><path d="M45 42.5 47 40.500 52 41 53 39.500 60 40 60 49 45 49z" fill="#ebdfca" stroke="#ebdfca" stroke-width="0.35"/><path d="M23.9 29.9 44.7 35.3 45.1 42.1 60 47 60 54.200 23 80z" fill="#faf5e2" stroke="#faf5e2" stroke-width="0.35"/><path d="M27 31.500V48M31 32.500V49M35 33.500V50M39 34.500V50M43 35.500V49M25 52L52 47M25 55L50 50M25 58L48 53M28 60V72M32 58.500V69M36 57V66M40 55.500V63" fill="none" stroke="#e7d7b3" stroke-width="0.45" opacity="0.55"/><path d="M0 0 9 0 24.4 8.8 23.9 29.9 23.5 78.500 14.400 84.800 0 86z" fill="#f5ecd5" stroke="#f5ecd5" stroke-width="0.35"/><path d="M0 0 9 0 24.4 8.8 24.200 20 0 19z" fill="#ebdfca" stroke="#ebdfca" stroke-width="0.35" opacity="0.5"/><path d="M23.700 30V78" fill="none" stroke="#e7d7b3" stroke-width="0.5" opacity="0.7"/><path d="M0 25 12.6 28.1 14.4 84.800 0 86z" fill="#523e29" stroke="#523e29" stroke-width="0.35"/><path d="M9.900 35.300 11.500 31 12.6 28.1 14.4 84.800 11.500 72z" fill="#d9c6a5" stroke="#d9c6a5" stroke-width="0.35"/><path d="M0 25 12.6 28.1 11.500 31 9.900 35.300 0 35.300z" fill="#a3875d" stroke="#a3875d" stroke-width="0.35"/><path d="M0 35.3 9.9 35.3 9.9 56 0 56z" fill="#9c805f" stroke="#9c805f" stroke-width="0.35"/><path d="M0 35.3 9.9 35.3 9.9 45.0 0.3 52.2z" fill="#fcf3cf" stroke="#fcf3cf" stroke-width="0.35"/><path d="M0 36.5H9.9" stroke="#f0daad" stroke-width="0.6" opacity="0.7"/><path d="M0 38.2H9.9" stroke="#f0daad" stroke-width="0.6" opacity="0.7"/><path d="M0 39.9H9.9" stroke="#f0daad" stroke-width="0.6" opacity="0.7"/><path d="M0.3 53 9.9 53.4 9.9 54.6 0.3 54.1z" fill="#fffefc" stroke="#fffefc" stroke-width="0.35"/><path d="M0 56 9.900 56 11.500 72 14.4 84.800 0 86z" fill="#7e644a" stroke="#7e644a" stroke-width="0.35"/><path d="M0 86 14.4 84.800 23.500 78.500 60 54.200 60 90 0 90z" fill="#fefdfb" stroke="#fefdfb" stroke-width="0.35"/></g></symbol>
<symbol id="p31" viewBox="0 0 60 90" preserveAspectRatio="none"><linearGradient id="g31" gradientUnits="userSpaceOnUse" x1="18" y1="0" x2="62" y2="46"><stop offset="0" stop-color="#18358a"/><stop offset="1" stop-color="#5b90d2"/></linearGradient><rect width="60" height="90" fill="url(#g31)"/><g filter="url(#nz)"><path d="M37 41.500 40 40 46 40.500 48 39 54 39.500 56 37.500 60 38 60 49 37 49z" fill="#2c2117" stroke="#2c2117" stroke-width="0.35"/><path d="M0 0 9.800 3.4 15.2 7 15.2 29.5 36.900 35.300 37.400 41.600 54.100 47.900 10.700 90 0 90z" fill="#ab9674" stroke="#ab9674" stroke-width="0.35"/><path d="M0 0 9.800 3.4 15.2 7 15.2 22 0 20z" fill="#82705a" stroke="#82705a" stroke-width="0.35" opacity="0.45"/><path d="M15.200 29.500V62M19 31V50M23 32V50M27 33V50M31 34V49M35 35V47M12 53L44 46M12 56L42 49M12 59L40 52M14 62V78M18 60.500V74M22 59V70M26 57.500V66M30 56V62M6 30V70M9 30V74" fill="none" stroke="#7b6749" stroke-width="0.45" opacity="0.55"/><path d="M0 26 1.600 28 6.200 90 0 90z" fill="#2c2117" stroke="#2c2117" stroke-width="0.35"/><path d="M10.700 90 54.100 47.900 60 47.400 60 90z" fill="#a99c86" stroke="#a99c86" stroke-width="0.35"/><path d="M60 49.700 55.900 55.100 54.100 56.900 57.300 63.200 59.500 64.100 55 71.300 55.900 81.200 60 90z" fill="#453d33" stroke="#453d33" stroke-width="0.35"/></g></symbol>
<symbol id="p32" viewBox="0 0 60 90" preserveAspectRatio="none"><linearGradient id="g32" gradientUnits="userSpaceOnUse" x1="18" y1="0" x2="62" y2="46"><stop offset="0" stop-color="#0b194b"/><stop offset="1" stop-color="#2e508a"/></linearGradient><rect width="60" height="90" fill="url(#g32)"/><g filter="url(#nz)"><path d="M37 41.500 40 40 46 40.500 48 39 54 39.500 56 37.500 60 38 60 49 37 49z" fill="#150f0b" stroke="#150f0b" stroke-width="0.35"/><path d="M0 0 9.800 3.4 15.2 7 15.2 29.5 36.900 35.300 37.400 41.600 54.100 47.900 10.700 90 0 90z" fill="#64543d" stroke="#64543d" stroke-width="0.35"/><path d="M0 0 9.800 3.4 15.2 7 15.2 22 0 20z" fill="#463a2d" stroke="#463a2d" stroke-width="0.35" opacity="0.45"/><path d="M15.200 29.500V62M19 31V50M23 32V50M27 33V50M31 34V49M35 35V47M12 53L44 46M12 56L42 49M12 59L40 52M14 62V78M18 60.500V74M22 59V70M26 57.500V66M30 56V62M6 30V70M9 30V74" fill="none" stroke="#413524" stroke-width="0.45" opacity="0.55"/><path d="M0 26 1.600 28 6.200 90 0 90z" fill="#150f0b" stroke="#150f0b" stroke-width="0.35"/><path d="M10.700 90 54.100 47.900 60 47.400 60 90z" fill="#635849" stroke="#635849" stroke-width="0.35"/><path d="M60 49.700 55.900 55.100 54.100 56.900 57.300 63.200 59.500 64.100 55 71.300 55.900 81.200 60 90z" fill="#221e18" stroke="#221e18" stroke-width="0.35"/></g></symbol>
<symbol id="p33" viewBox="0 0 60 90" preserveAspectRatio="none"><linearGradient id="g33" gradientUnits="userSpaceOnUse" x1="18" y1="0" x2="62" y2="46"><stop offset="0" stop-color="#2c5bc5"/><stop offset="1" stop-color="#91caf6"/></linearGradient><rect width="60" height="90" fill="url(#g33)"/><g filter="url(#nz)"><path d="M37 41.500 40 40 46 40.500 48 39 54 39.500 56 37.500 60 38 60 49 37 49z" fill="#4d3b2a" stroke="#4d3b2a" stroke-width="0.35"/><path d="M0 0 9.800 3.4 15.2 7 15.2 29.5 36.900 35.300 37.400 41.600 54.100 47.900 10.700 90 0 90z" fill="#e0d0ae" stroke="#e0d0ae" stroke-width="0.35"/><path d="M0 0 9.800 3.4 15.2 7 15.2 22 0 20z" fill="#bdaa8f" stroke="#bdaa8f" stroke-width="0.35" opacity="0.45"/><path d="M15.200 29.500V62M19 31V50M23 32V50M27 33V50M31 34V49M35 35V47M12 53L44 46M12 56L42 49M12 59L40 52M14 62V78M18 60.500V74M22 59V70M26 57.500V66M30 56V62M6 30V70M9 30V74" fill="none" stroke="#b6a079" stroke-width="0.45" opacity="0.55"/><path d="M0 26 1.600 28 6.200 90 0 90z" fill="#4d3b2a" stroke="#4d3b2a" stroke-width="0.35"/><path d="M10.700 90 54.100 47.900 60 47.400 60 90z" fill="#dfd5c1" stroke="#dfd5c1" stroke-width="0.35"/><path d="M60 49.700 55.900 55.100 54.100 56.900 57.300 63.200 59.500 64.100 55 71.300 55.900 81.200 60 90z" fill="#736758" stroke="#736758" stroke-width="0.35"/></g></symbol>
<symbol id="p34" viewBox="0 0 60 90" preserveAspectRatio="none"><linearGradient id="g34" gradientUnits="userSpaceOnUse" x1="18" y1="0" x2="62" y2="46"><stop offset="0" stop-color="#050c25"/><stop offset="1" stop-color="#16274b"/></linearGradient><rect width="60" height="90" fill="url(#g34)"/><g filter="url(#nz)"><path d="M37 41.500 40 40 46 40.500 48 39 54 39.500 56 37.500 60 38 60 49 37 49z" fill="#090705" stroke="#090705" stroke-width="0.35"/><path d="M0 0 9.800 3.4 15.2 7 15.2 29.5 36.900 35.300 37.400 41.600 54.100 47.900 10.700 90 0 90z" fill="#33291d" stroke="#33291d" stroke-width="0.35"/><path d="M0 0 9.800 3.4 15.2 7 15.2 22 0 20z" fill="#221c15" stroke="#221c15" stroke-width="0.35" opacity="0.45"/><path d="M15.200 29.500V62M19 31V50M23 32V50M27 33V50M31 34V49M35 35V47M12 53L44 46M12 56L42 49M12 59L40 52M14 62V78M18 60.500V74M22 59V70M26 57.500V66M30 56V62M6 30V70M9 30V74" fill="none" stroke="#1f1911" stroke-width="0.45" opacity="0.55"/><path d="M0 26 1.600 28 6.200 90 0 90z" fill="#090705" stroke="#090705" stroke-width="0.35"/><path d="M10.700 90 54.100 47.900 60 47.400 60 90z" fill="#322c23" stroke="#322c23" stroke-width="0.35"/><path d="M60 49.700 55.900 55.100 54.100 56.900 57.300 63.200 59.500 64.100 55 71.300 55.900 81.200 60 90z" fill="#100e0b" stroke="#100e0b" stroke-width="0.35"/></g></symbol>
<symbol id="p35" viewBox="0 0 60 90" preserveAspectRatio="none"><linearGradient id="g35" gradientUnits="userSpaceOnUse" x1="18" y1="0" x2="62" y2="46"><stop offset="0" stop-color="#4c91f0"/><stop offset="1" stop-color="#cbf2ff"/></linearGradient><rect width="60" height="90" fill="url(#g35)"/><g filter="url(#nz)"><path d="M37 41.500 40 40 46 40.500 48 39 54 39.500 56 37.500 60 38 60 49 37 49z" fill="#7e644a" stroke="#7e644a" stroke-width="0.35"/><path d="M0 0 9.800 3.4 15.2 7 15.2 29.5 36.900 35.300 37.400 41.600 54.100 47.900 10.700 90 0 90z" fill="#faf5e2" stroke="#faf5e2" stroke-width="0.35"/><path d="M0 0 9.800 3.4 15.2 7 15.2 22 0 20z" fill="#ebdfca" stroke="#ebdfca" stroke-width="0.35" opacity="0.45"/><path d="M15.200 29.500V62M19 31V50M23 32V50M27 33V50M31 34V49M35 35V47M12 53L44 46M12 56L42 49M12 59L40 52M14 62V78M18 60.500V74M22 59V70M26 57.500V66M30 56V62M6 30V70M9 30V74" fill="none" stroke="#e7d7b3" stroke-width="0.45" opacity="0.55"/><path d="M0 26 1.600 28 6.200 90 0 90z" fill="#7e644a" stroke="#7e644a" stroke-width="0.35"/><path d="M10.700 90 54.100 47.900 60 47.400 60 90z" fill="#faf7ee" stroke="#faf7ee" stroke-width="0.35"/><path d="M60 49.700 55.900 55.100 54.100 56.900 57.300 63.200 59.500 64.100 55 71.300 55.900 81.200 60 90z" fill="#ada08d" stroke="#ada08d" stroke-width="0.35"/></g></symbol>

</defs></svg>
<div id="app">
<div style="left:0px;top:0px;width:2604px;height:43px;background:#f3f3f3"></div>
<div style="left:0px;top:43px;width:2604px;height:30px;background:#fff"></div>
<div style="left:12px;top:9px;width:21px;height:19.5px;background:#001e36;border-radius:4px;border:1px solid #0a2a4a"></div>
<div class="t" style="left:13.8px;top:14.2px;font-size:11px;color:#31a8ff;letter-spacing:-0.40px;font-weight:700;">Lrc</div>
<div class="t" style="left:38.4px;top:11.3px;font-size:18.5px;color:#000;letter-spacing:-0.16px;">Lightroom Catalog-v13-5-2 - Adobe Photoshop Lightroom Classic - Library</div>
<svg style="left:2420px;top:8px" width="170" height="28" viewBox="0 0 170 28"><g stroke="#111" stroke-width="1.4" fill="none"><path d="M6.5 13H21"/><rect x="75.5" y="5.7" width="13.6" height="13.6" rx="1.5"/><path d="M146 5.5L160.5 20M160.5 5.5L146 20"/></g></svg>
<div class="t" style="left:8.4px;top:49.6px;font-size:18.5px;color:#000;letter-spacing:-0.86px;">File</div>
<div class="t" style="left:56.4px;top:49.6px;font-size:18.5px;color:#000;letter-spacing:-0.06px;">Edit</div>
<div class="t" style="left:108.4px;top:49.6px;font-size:18.5px;color:#000;letter-spacing:-0.31px;">Library</div>
<div class="t" style="left:183.4px;top:49.6px;font-size:18.5px;color:#000;letter-spacing:0.22px;">Photo</div>
<div class="t" style="left:253.4px;top:49.6px;font-size:18.5px;color:#000;letter-spacing:-0.13px;">Metadata</div>
<div class="t" style="left:349.9px;top:49.6px;font-size:18.5px;color:#000;letter-spacing:-0.18px;">View</div>
<div class="t" style="left:409.4px;top:49.6px;font-size:18.5px;color:#000;letter-spacing:0.38px;">Window</div>
<div class="t" style="left:497.4px;top:49.6px;font-size:18.5px;color:#000;letter-spacing:0.05px;">Help</div>
<svg style="left:1296px;top:81px" width="12" height="7" viewBox="0 0 12 7"><path d="M0 7L6 0L12 7z" fill="#6a6a6a"/></svg>
<svg style="left:1296px;top:1762px" width="12" height="7" viewBox="0 0 12 7"><path d="M0 0L6 7L12 0z" fill="#6a6a6a"/></svg>
<div style="left:21px;top:121px;width:41px;height:39px;background:#6f6f6f;border-radius:6px"></div>
<div class="t" style="left:23.1px;top:129.3px;font-size:22.68px;color:#0a0a0a;letter-spacing:0.22px;font-weight:700;">Lrc</div>
<div class="t" style="left:85.6px;top:118.6px;font-size:14.65px;color:#9a9a9a;letter-spacing:0.49px;">Adobe Photoshop</div>
<div class="t" style="left:85.6px;top:134.5px;font-size:23.62px;color:#a9a9a9;letter-spacing:0.04px;">Lightroom Classic</div>
<svg style="left:296.5px;top:142px" width="13" height="12" viewBox="0 0 13 12"><path d="M0 0H13L6.5 12z" fill="#9a9a9a"/></svg>
<div class="t" style="left:1799.6px;top:128.5px;font-size:25.99px;color:#fff;letter-spacing:0.25px;">Library</div>
<div class="t" style="left:1912.7px;top:128.5px;font-size:25.99px;color:#a6a6a6;letter-spacing:-0.34px;">Develop</div>
<div class="t" style="left:2039.4px;top:128.5px;font-size:25.99px;color:#a6a6a6;letter-spacing:0.08px;">Map</div>
<div class="t" style="left:2122.8px;top:128.5px;font-size:25.99px;color:#a6a6a6;letter-spacing:-0.41px;">Book</div>
<div class="t" style="left:2213.6px;top:128.5px;font-size:25.99px;color:#a6a6a6;letter-spacing:-0.69px;">Slideshow</div>
<div class="t" style="left:2358.7px;top:128.5px;font-size:25.99px;color:#a6a6a6;letter-spacing:0.30px;">Print</div>
<div class="t" style="left:2446.6px;top:128.5px;font-size:25.99px;color:#a6a6a6;letter-spacing:-0.82px;">Web</div>
<div style="left:1895.9px;top:123px;width:1.5px;height:30px;background:#4a4a4a"></div>
<div style="left:2020.8px;top:123px;width:1.5px;height:30px;background:#4a4a4a"></div>
<div style="left:2104.9px;top:123px;width:1.5px;height:30px;background:#4a4a4a"></div>
<div style="left:2195.5px;top:123px;width:1.5px;height:30px;background:#4a4a4a"></div>
<div style="left:2341.3px;top:123px;width:1.5px;height:30px;background:#4a4a4a"></div>
<div style="left:2428.1px;top:123px;width:1.5px;height:30px;background:#4a4a4a"></div>
<div style="left:2514.4px;top:123px;width:1.5px;height:30px;background:#4a4a4a"></div>
<svg style="left:2546px;top:129px" width="36" height="26" viewBox="0 0 36 26"><path d="M8 21.5a6.5 6.5 0 0 1-.6-13A9 9 0 0 1 24.6 7.2 7.3 7.3 0 0 1 27 21.5z" fill="#b4b4b4"/><circle cx="27" cy="17.5" r="7.6" fill="#000"/><circle cx="27" cy="17.5" r="6" fill="#b4b4b4"/><path d="M24.4 14.9l5.2 5.2M29.6 14.9l-5.2 5.2" stroke="#000" stroke-width="1.6"/></svg>
<div style="left:22px;top:174px;width:2562px;height:1px;background:#262626"></div>
<div style="left:22px;top:174px;width:441px;height:1401px;background:#050505;border:1px solid #262626"></div>
<div class="stripes" style="left:25px;top:178px;width:15px;height:367px;"></div>
<div class="stripes" style="left:25px;top:1509px;width:15px;height:63px;"></div>
<div style="left:42px;top:177px;width:420px;height:1397px;background:#282828;border-left:1px solid #3a3a3a"></div>
<svg style="left:56.5px;top:194px" width="10.5" height="9.5" viewBox="0 0 10 9"><path d="M0 0H10L5 9z" fill="#9c9c9c"/></svg>
<div class="t" style="left:83.7px;top:187.6px;font-size:21.73px;color:#b2b2b2;letter-spacing:0.33px;text-shadow:0 1px 1px #000;">Navigator</div>
<div class="t" style="left:277.2px;top:193.4px;font-size:13.23px;color:#8c8c8c;letter-spacing:0.13px;">FIT</div>
<svg style="left:307px;top:194.5px" width="5.5" height="9" viewBox="0 0 6 10"><path d="M0 4L3 0.5L6 4zM0 6L3 9.5L6 6z" fill="#b0b0b0"/></svg>
<div class="t" style="left:329.2px;top:193.4px;font-size:13.23px;color:#8c8c8c;letter-spacing:0.26px;">100%</div>
<div class="t" style="left:388.7px;top:193.4px;font-size:13.23px;color:#8c8c8c;letter-spacing:1.09px;">300%</div>
<svg style="left:446px;top:194.5px" width="5.5" height="9" viewBox="0 0 6 10"><path d="M0 4L3 0.5L6 4zM0 6L3 9.5L6 6z" fill="#b0b0b0"/></svg>
<div style="left:47px;top:219px;width:410.5px;height:326px;background:#2b2b2b;border:1px solid #161616"></div>
<div style="left:149px;top:227px;width:205px;height:306px;background:#fff"></div>
<svg style="left:150px;top:228px" width="203" height="304"><use href="#p1" width="203" height="304"/></svg>
<svg style="left:55px;top:561.5px" width="10.5" height="9.5" viewBox="0 0 10 9"><path d="M0 0H10L5 9z" fill="#9c9c9c"/></svg>
<div class="t" style="left:81.2px;top:557.6px;font-size:21.73px;color:#b2b2b2;letter-spacing:-0.04px;text-shadow:0 1px 1px #000;">Catalog</div>
<div style="left:46.5px;top:588px;width:410.5px;height:116px;background:#484848;border:1px solid #1a1a1a"></div>
<div style="left:47.5px;top:677px;width:408.5px;height:26.5px;background:#b5b5b5"></div>
<div class="t" style="left:83.5px;top:596.4px;font-size:17.01px;color:#cfcfcf;letter-spacing:-0.21px;text-shadow:0 1px 1px #222;">All Photographs</div>
<div class="t" style="left:424.6px;top:596.4px;font-size:17.01px;color:#9c9c9c;">35</div>
<div style="left:82px;top:618.5px;width:374px;height:1px;background:#3c3c3c"></div>
<div class="t" style="left:83.5px;top:625.4px;font-size:17.01px;color:#cfcfcf;letter-spacing:-0.33px;text-shadow:0 1px 1px #222;">All Synced Photographs</div>
<div class="t" style="left:434.1px;top:625.4px;font-size:17.01px;color:#9c9c9c;">0</div>
<div style="left:82px;top:647.5px;width:374px;height:1px;background:#3c3c3c"></div>
<div class="t" style="left:83.5px;top:654.4px;font-size:17.01px;color:#cfcfcf;letter-spacing:0.09px;text-shadow:0 1px 1px #222;">Quick Collection  +</div>
<div class="t" style="left:434.1px;top:654.4px;font-size:17.01px;color:#9c9c9c;">0</div>
<div style="left:82px;top:676.5px;width:374px;height:1px;background:#3c3c3c"></div>
<div class="t" style="left:83.5px;top:683.4px;font-size:17.01px;color:#161616;letter-spacing:-0.07px;">Previous Import</div>
<div class="t" style="left:424.6px;top:683.4px;font-size:17.01px;color:#161616;">35</div>
<svg style="left:55px;top:722px" width="10.5" height="9.5" viewBox="0 0 10 9"><path d="M0 0H10L5 9z" fill="#9c9c9c"/></svg>
<div class="t" style="left:81.2px;top:717.6px;font-size:21.73px;color:#b2b2b2;letter-spacing:0.53px;text-shadow:0 1px 1px #000;">Folders</div>
<svg style="left:440px;top:722px" width="16" height="14" viewBox="0 0 16 14"><path d="M0.5 5.5H10.5M5.5 0.5V10.5" stroke="#d0d0d0" stroke-width="2" fill="none"/><path d="M10.5 9.5H15.5L13 12.5z" fill="#c8c8c8"/></svg>
<div style="left:46.5px;top:747.5px;width:410.5px;height:151px;background:#3b3b3b;border:1px solid #1a1a1a"></div>
<div style="left:62.5px;top:756.5px;width:381px;height:27.5px;background:#515151;border-top:1px solid #353535;border-left:1px solid #454545"></div>
<svg style="left:70px;top:761.5px" width="18" height="18" viewBox="0 0 18 18"><circle cx="10" cy="6" r="4" fill="#d4d4d4" stroke="#2a2a2a" stroke-width="1.3"/><path d="M7 9L1.5 14.5" stroke="#2a2a2a" stroke-width="2.6"/><path d="M7 9L1.5 14.5" stroke="#c8c8c8" stroke-width="1"/><path d="M11 14.5H16L13.5 17z" fill="#d4d4d4"/></svg>
<div class="t" style="left:96.5px;top:761.6px;font-size:17.01px;color:#c4c4c4;letter-spacing:-0.32px;text-shadow:0 1px 1px #222;">Filter Folders</div>
<div style="left:47.5px;top:793.5px;width:408.5px;height:1px;background:#2a2a2a"></div>
<div style="left:47.5px;top:794.5px;width:408.5px;height:103px;background:#454545"></div>
<div class="pill" style="left:53.5px;top:801px;width:397px;height:33px;"></div>
<div style="left:63.5px;top:811px;width:9px;height:13.5px;background:linear-gradient(#6fd957,#2f9e22);border:1px solid #1a3a12;border-radius:1px"></div>
<div class="t" style="left:81.4px;top:809.3px;font-size:17.95px;color:#d6d6d6;letter-spacing:-1.05px;font-weight:700;text-shadow:0 1px 1px #111;">King-1 (E:)</div>
<div class="t" style="left:342.7px;top:811.7px;font-size:13.7px;color:#9a9a9a;letter-spacing:-0.26px;font-weight:700;">2,6 / 3,7 TB</div>
<svg style="left:425px;top:812px" width="12.5" height="10.5" viewBox="0 0 10 9"><path d="M0 0H10L5 9z" fill="#e6e6e6"/></svg>
<svg style="left:62px;top:847.5px" width="8" height="8" viewBox="0 0 8 8"><path d="M1 0.5L7 4L1 7.5z" fill="none" stroke="#606060" stroke-width="0.8" stroke-dasharray="1 1"/></svg>
<svg style="left:88.5px;top:843.5px" width="18" height="13" viewBox="0 0 18 13"><path d="M0.5 2.5q0-2 2-2h5l1.5 2h8.5v10h-17z" fill="#9a9a9a" stroke="#2c2c2c" stroke-width="1"/><path d="M1 4.5h16" stroke="#2c2c2c" stroke-width="0.8" opacity="0.5"/></svg>
<div class="t" style="left:115.5px;top:843.3px;font-size:17.01px;color:#787878;letter-spacing:-0.73px;">1. Files HDR Stitch</div>
<div class="t" style="left:434.1px;top:843.3px;font-size:17.01px;color:#787878;">0</div>
<div style="left:82px;top:865px;width:374px;height:1px;background:#3a3a3a"></div>
<svg style="left:62px;top:876.5px" width="8" height="8" viewBox="0 0 8 8"><path d="M1 0.5L7 4L1 7.5z" fill="none" stroke="#606060" stroke-width="0.8" stroke-dasharray="1 1"/></svg>
<svg style="left:88.5px;top:872.5px" width="18" height="13" viewBox="0 0 18 13"><path d="M0.5 2.5q0-2 2-2h5l1.5 2h8.5v10h-17z" fill="#d0d0d0" stroke="#2c2c2c" stroke-width="1"/><path d="M1 4.5h16" stroke="#2c2c2c" stroke-width="0.8" opacity="0.5"/></svg>
<div class="t" style="left:115.5px;top:872.3px;font-size:17.01px;color:#d4d4d4;letter-spacing:-0.64px;text-shadow:0 1px 1px #222;">2. Files HDR Pano</div>
<div class="t" style="left:424.6px;top:872.3px;font-size:17.01px;color:#c4c4c4;">35</div>
<svg style="left:55px;top:915.5px" width="10.5" height="9.5" viewBox="0 0 10 9"><path d="M0 0H10L5 9z" fill="#9c9c9c"/></svg>
<div class="t" style="left:81.2px;top:911.8px;font-size:21.73px;color:#b2b2b2;letter-spacing:0.34px;text-shadow:0 1px 1px #000;">Collections</div>
<svg style="left:440px;top:915.5px" width="16" height="14" viewBox="0 0 16 14"><path d="M0.5 5.5H10.5M5.5 0.5V10.5" stroke="#d0d0d0" stroke-width="2" fill="none"/><path d="M10.5 9.5H15.5L13 12.5z" fill="#c8c8c8"/></svg>
<div style="left:46.5px;top:942px;width:410.5px;height:76.5px;background:#3b3b3b;border:1px solid #1a1a1a"></div>
<div style="left:62.5px;top:950.5px;width:381px;height:27.5px;background:#515151;border-top:1px solid #353535;border-left:1px solid #454545"></div>
<svg style="left:70px;top:955.5px" width="18" height="18" viewBox="0 0 18 18"><circle cx="10" cy="6" r="4" fill="#d4d4d4" stroke="#2a2a2a" stroke-width="1.3"/><path d="M7 9L1.5 14.5" stroke="#2a2a2a" stroke-width="2.6"/><path d="M7 9L1.5 14.5" stroke="#c8c8c8" stroke-width="1"/><path d="M11 14.5H16L13.5 17z" fill="#d4d4d4"/></svg>
<div class="t" style="left:96.5px;top:955.6px;font-size:17.01px;color:#c4c4c4;letter-spacing:-0.21px;text-shadow:0 1px 1px #222;">Filter Collections</div>
<div style="left:47.5px;top:987.5px;width:408.5px;height:1px;background:#2a2a2a"></div>
<div style="left:47.5px;top:988.5px;width:408.5px;height:29px;background:#454545"></div>
<svg style="left:78px;top:1000.5px" width="8" height="9" viewBox="0 0 8 9"><path d="M0.5 0.5L7.5 4.5L0.5 8.5z" fill="#b4b4b4"/></svg>
<svg style="left:104.5px;top:996.5px" width="18" height="15" viewBox="0 0 18 15"><rect x="0.5" y="0.5" width="17" height="3.5" fill="#8a8a8a" stroke="#2a2a2a"/><rect x="1.5" y="4" width="15" height="10" fill="#777" stroke="#2a2a2a"/><rect x="5.5" y="7" width="7" height="3.5" fill="#a8a8a8" stroke="#333" stroke-width="0.8"/></svg>
<div class="t" style="left:132.5px;top:996.9px;font-size:17.01px;color:#d4d4d4;letter-spacing:-0.20px;text-shadow:0 1px 1px #222;">Smart Collections</div>
<svg style="left:55px;top:1036px" width="10.5" height="9.5" viewBox="0 0 10 9"><path d="M0 0H10L5 9z" fill="#9c9c9c"/></svg>
<div class="t" style="left:81.2px;top:1032.2px;font-size:21.73px;color:#b2b2b2;letter-spacing:-0.13px;text-shadow:0 1px 1px #000;">Publish Services</div>
<svg style="left:440px;top:1036px" width="16" height="14" viewBox="0 0 16 14"><path d="M0.5 5.5H10.5M5.5 0.5V10.5" stroke="#d0d0d0" stroke-width="2" fill="none"/><path d="M10.5 9.5H15.5L13 12.5z" fill="#c8c8c8"/></svg>
<div style="left:46.5px;top:1061px;width:410.5px;height:187.5px;background:#3b3b3b;border:1px solid #1a1a1a"></div>
<div class="pill" style="left:53.5px;top:1068.3px;width:397px;height:37.5px;"></div>
<div class="t" style="left:107.9px;top:1079.4px;font-size:17.95px;color:#141414;letter-spacing:-0.79px;font-weight:700;text-shadow:0 1px 0 rgba(255,255,255,0.22);">Hard Drive</div>
<div class="t" style="left:377.6px;top:1080.3px;font-size:15.12px;color:#a0a0a0;letter-spacing:-0.20px;font-weight:700;text-shadow:0 -1px 0 #2a2a2a;">Set Up...</div>
<div class="pill" style="left:53.5px;top:1113.2px;width:397px;height:37.5px;"></div>
<div class="t" style="left:107.9px;top:1124.3px;font-size:17.95px;color:#141414;letter-spacing:-1.20px;font-weight:700;text-shadow:0 1px 0 rgba(255,255,255,0.22);">Adobe Stock</div>
<div class="t" style="left:377.6px;top:1125.2px;font-size:15.12px;color:#a0a0a0;letter-spacing:-0.20px;font-weight:700;text-shadow:0 -1px 0 #2a2a2a;">Set Up...</div>
<div class="pill" style="left:53.5px;top:1158.2px;width:397px;height:37.5px;"></div>
<div class="t" style="left:107.9px;top:1169.3px;font-size:17.95px;color:#141414;letter-spacing:-0.74px;font-weight:700;text-shadow:0 1px 0 rgba(255,255,255,0.22);">Flickr</div>
<div class="t" style="left:377.6px;top:1170.2px;font-size:15.12px;color:#a0a0a0;letter-spacing:-0.20px;font-weight:700;text-shadow:0 -1px 0 #2a2a2a;">Set Up...</div>
<div class="pill" style="left:53.5px;top:1203px;width:397px;height:39px;"></div>
<div class="t" style="left:146.5px;top:1214.9px;font-size:17.01px;color:#9a9a9a;letter-spacing:-0.62px;font-weight:700;text-shadow:0 -1px 0 #2a2a2a;">Find More Services Online...</div>
<svg style="left:70px;top:1082.5px" width="23" height="10" viewBox="0 0 23 10"><rect x="0.5" y="0.5" width="22" height="9" rx="1.5" fill="#8e8e8e" stroke="#3a3a3a"/><rect x="3" y="3.5" width="5" height="2" fill="#d8d8d8"/></svg>
<div style="left:70.5px;top:1122px;width:21px;height:19.5px;background:#0b1238;border-radius:3px;border:1px solid #1d2a5a"></div>
<div class="t" style="left:73.7px;top:1126.2px;font-size:12.76px;color:#fff;letter-spacing:1.28px;font-weight:700;">St</div>
<div style="left:71.5px;top:1167.5px;width:19px;height:19.5px;background:#fff;border:1px solid #ccc;border-radius:1px"></div>
<div style="left:74px;top:1173.5px;width:7px;height:7px;background:#0063dc;border-radius:50%"></div>
<div style="left:81.5px;top:1173.5px;width:7px;height:7px;background:#ff0084;border-radius:50%"></div>
<div style="left:49.5px;top:1508px;width:405px;height:1px;background:#141414"></div>
<div style="left:49.5px;top:1509px;width:405px;height:1px;background:#363636"></div>
<div class="btn" style="left:49px;top:1522px;width:200px;height:42px;"></div>
<div class="btn" style="left:256px;top:1522px;width:199.5px;height:42px;"></div>
<div class="t" style="left:109.8px;top:1535.1px;font-size:20.32px;color:#a8a8a8;letter-spacing:0.37px;text-shadow:0 -1px 0 #1e1e1e;">Import...</div>
<div class="t" style="left:317.8px;top:1535.1px;font-size:20.32px;color:#a8a8a8;letter-spacing:-0.03px;text-shadow:0 -1px 0 #1e1e1e;">Export...</div>
<svg style="left:7px;top:867px" width="8" height="15" viewBox="0 0 8 15"><path d="M8 0V15L0 7.5z" fill="#8a8a8a"/></svg>
<svg style="left:2591.5px;top:868px" width="8" height="15" viewBox="0 0 8 15"><path d="M0 0V15L8 7.5z" fill="#8a8a8a"/></svg>
<div style="left:465px;top:177px;width:1676px;height:1397px;background:#4d4d4d"></div>
<div style="left:465px;top:177px;width:1676px;height:41px;background:#565656;border-top:1px solid #626262"></div>
<div style="left:465px;top:217.8px;width:1676px;height:1.8px;background:#141414"></div>
<div style="left:465px;top:219.6px;width:1676px;height:6.3px;background:#4f4f4f"></div>
<div style="left:465px;top:225.8px;width:1676px;height:1.2px;background:#141414"></div>
<div class="t" style="left:479.7px;top:187.6px;font-size:21.73px;color:#c6c6c6;letter-spacing:0.26px;text-shadow:0 1px 1px #333;">Library Filter :</div>
<div class="t" style="left:1142.0px;top:190.9px;font-size:16.06px;color:#9a9a9a;letter-spacing:0.83px;">Text</div>
<div class="t" style="left:1204.6px;top:190.9px;font-size:16.06px;color:#9a9a9a;letter-spacing:0.77px;">Attribute</div>
<div class="t" style="left:1302.0px;top:190.9px;font-size:16.06px;color:#9a9a9a;letter-spacing:0.57px;">Metadata</div>
<div class="t" style="left:1405.2px;top:190.9px;font-size:16.06px;color:#fff;letter-spacing:1.18px;">None</div>
<div style="left:1125px;top:188px;width:2px;height:20px;background:repeating-linear-gradient(#161616 0,#161616 1.800px,transparent 1.800px,transparent 3.600px)"></div>
<div style="left:1189px;top:188px;width:2px;height:20px;background:repeating-linear-gradient(#161616 0,#161616 1.800px,transparent 1.800px,transparent 3.600px)"></div>
<div style="left:1285.3px;top:188px;width:2px;height:20px;background:repeating-linear-gradient(#161616 0,#161616 1.800px,transparent 1.800px,transparent 3.600px)"></div>
<div style="left:1389px;top:188px;width:2px;height:20px;background:repeating-linear-gradient(#161616 0,#161616 1.800px,transparent 1.800px,transparent 3.600px)"></div>
<div style="left:1461.8px;top:188px;width:2px;height:20px;background:repeating-linear-gradient(#161616 0,#161616 1.800px,transparent 1.800px,transparent 3.600px)"></div>
<div class="t" style="left:2020.3px;top:190.9px;font-size:16.06px;color:#9a9a9a;letter-spacing:0.22px;">Filters Off</div>
<svg style="left:2100px;top:193.5px" width="5.5" height="9" viewBox="0 0 6 10"><path d="M0 4L3 0.5L6 4zM0 6L3 9.5L6 6z" fill="#9a9a9a"/></svg>
<svg style="left:2117.5px;top:189px" width="15" height="17" viewBox="0 0 15 17"><path d="M3.5 8V4.5a3.2 3.2 0 0 1 6.4-0.6" fill="none" stroke="#d8d0b8" stroke-width="1.8"/><rect x="1" y="8" width="12.5" height="8" rx="1" fill="#c9bf9e" stroke="#3a3a3a" stroke-width="0.8"/><path d="M1.5 11H13M1.5 13.5H13" stroke="#8a8268" stroke-width="0.8"/></svg>
<div style="left:2118px;top:227px;width:1.6px;height:1285px;background:#161616"></div>
<div style="left:2119.6px;top:227px;width:21.5px;height:1285px;background:linear-gradient(90deg,#484848,#454545 60%,#424242)"></div>
<div style="left:0px;top:227px;width:2604px;height:1285px;overflow:hidden"><div class="cell act" style="left:464.2px;top:-2.2px;width:205.9px;height:207.1px;overflow:hidden"><div class="t num" style="color:#d2d2d2;-webkit-text-stroke:1.1px #d2d2d2; left:-12px;letter-spacing:-5px;">1</div><div class="fr act" style="left:52px;top:29px;width:101px;height:148px"></div><svg style="left:56.100px;top:33.100px;outline:1px solid #333;outline-offset:-1px" width="92" height="139"><use href="#p1" width="91.500" height="138.500"/></svg><svg style="left:56.1px;top:33.1px" width="14" height="14" viewBox="0 0 14 14"><rect width="14" height="14" fill="#0a0a0a"/><rect x="1.5" y="1.5" width="11" height="11" fill="none" stroke="#b4b4b4" stroke-width="0.9"/><path d="M3.2 5.2H10.5M8.3 3.2L10.6 5.2L8.3 7.200M10.800 8.900H3.500M5.700 6.900L3.400 8.900L5.700 10.900" fill="none" stroke="#f0f0f0" stroke-width="1.1"/></svg></div><div class="cell" style="left:670.1px;top:-2.2px;width:206px;height:207.1px;overflow:hidden"><div class="t num" style="color:#ababab;-webkit-text-stroke:1.1px #ababab;letter-spacing:0.500px;">2</div><div class="fr" style="left:52px;top:29px;width:101px;height:148px"></div><svg style="left:56.100px;top:33.100px;outline:1px solid #333;outline-offset:-1px" width="92" height="139"><use href="#p2" width="91.500" height="138.500"/></svg><svg style="left:56.1px;top:33.1px" width="14" height="14" viewBox="0 0 14 14"><rect width="14" height="14" fill="#0a0a0a"/><rect x="1.5" y="1.5" width="11" height="11" fill="none" stroke="#b4b4b4" stroke-width="0.9"/><path d="M3.2 5.2H10.5M8.3 3.2L10.6 5.2L8.3 7.200M10.800 8.900H3.500M5.700 6.900L3.400 8.900L5.700 10.900" fill="none" stroke="#f0f0f0" stroke-width="1.1"/></svg></div><div class="cell" style="left:876.1px;top:-2.2px;width:205.9px;height:207.1px;overflow:hidden"><div class="t num" style="color:#ababab;-webkit-text-stroke:1.1px #ababab;letter-spacing:0.500px;">3</div><div class="fr" style="left:52px;top:29px;width:101px;height:148px"></div><svg style="left:56.100px;top:33.100px;outline:1px solid #333;outline-offset:-1px" width="92" height="139"><use href="#p3" width="91.500" height="138.500"/></svg><svg style="left:56.1px;top:33.1px" width="14" height="14" viewBox="0 0 14 14"><rect width="14" height="14" fill="#0a0a0a"/><rect x="1.5" y="1.5" width="11" height="11" fill="none" stroke="#b4b4b4" stroke-width="0.9"/><path d="M3.2 5.2H10.5M8.3 3.2L10.6 5.2L8.3 7.200M10.800 8.900H3.500M5.700 6.900L3.400 8.900L5.700 10.900" fill="none" stroke="#f0f0f0" stroke-width="1.1"/></svg></div><div class="cell" style="left:1082px;top:-2.2px;width:206px;height:207.1px;overflow:hidden"><div class="t num" style="color:#ababab;-webkit-text-stroke:1.1px #ababab;letter-spacing:0.500px;">4</div><div class="fr" style="left:52px;top:29px;width:101px;height:148px"></div><svg style="left:56.100px;top:33.100px;outline:1px solid #333;outline-offset:-1px" width="92" height="139"><use href="#p4" width="91.500" height="138.500"/></svg><svg style="left:56.1px;top:33.1px" width="14" height="14" viewBox="0 0 14 14"><rect width="14" height="14" fill="#0a0a0a"/><rect x="1.5" y="1.5" width="11" height="11" fill="none" stroke="#b4b4b4" stroke-width="0.9"/><path d="M3.2 5.2H10.5M8.3 3.2L10.6 5.2L8.3 7.200M10.800 8.900H3.500M5.700 6.900L3.400 8.900L5.700 10.900" fill="none" stroke="#f0f0f0" stroke-width="1.1"/></svg></div><div class="cell" style="left:1288px;top:-2.2px;width:206px;height:207.1px;overflow:hidden"><div class="t num" style="color:#ababab;-webkit-text-stroke:1.1px #ababab;letter-spacing:0.500px;">5</div><div class="fr" style="left:52px;top:29px;width:101px;height:148px"></div><svg style="left:56.100px;top:33.100px;outline:1px solid #333;outline-offset:-1px" width="92" height="139"><use href="#p5" width="91.500" height="138.500"/></svg><svg style="left:56.1px;top:33.1px" width="14" height="14" viewBox="0 0 14 14"><rect width="14" height="14" fill="#0a0a0a"/><rect x="1.5" y="1.5" width="11" height="11" fill="none" stroke="#b4b4b4" stroke-width="0.9"/><path d="M3.2 5.2H10.5M8.3 3.2L10.6 5.2L8.3 7.200M10.800 8.900H3.500M5.700 6.900L3.400 8.900L5.700 10.900" fill="none" stroke="#f0f0f0" stroke-width="1.1"/></svg></div><div class="cell" style="left:1494px;top:-2.2px;width:205.9px;height:207.1px;overflow:hidden"><div class="t num" style="color:#ababab;-webkit-text-stroke:1.1px #ababab;letter-spacing:0.500px;">6</div><div class="fr" style="left:52px;top:29px;width:101px;height:148px"></div><svg style="left:56.100px;top:33.100px;outline:1px solid #333;outline-offset:-1px" width="92" height="139"><use href="#p6" width="91.500" height="138.500"/></svg><svg style="left:56.1px;top:33.1px" width="14" height="14" viewBox="0 0 14 14"><rect width="14" height="14" fill="#0a0a0a"/><rect x="1.5" y="1.5" width="11" height="11" fill="none" stroke="#b4b4b4" stroke-width="0.9"/><path d="M3.2 5.2H10.5M8.3 3.2L10.6 5.2L8.3 7.200M10.800 8.900H3.500M5.700 6.900L3.400 8.900L5.700 10.900" fill="none" stroke="#f0f0f0" stroke-width="1.1"/></svg></div><div class="cell" style="left:1699.9px;top:-2.2px;width:205.9px;height:207.1px;overflow:hidden"><div class="t num" style="color:#ababab;-webkit-text-stroke:1.1px #ababab;letter-spacing:0.500px;">7</div><div class="fr" style="left:52px;top:29px;width:101px;height:148px"></div><svg style="left:56.100px;top:33.100px;outline:1px solid #333;outline-offset:-1px" width="92" height="139"><use href="#p7" width="91.500" height="138.500"/></svg><svg style="left:56.1px;top:33.1px" width="14" height="14" viewBox="0 0 14 14"><rect width="14" height="14" fill="#0a0a0a"/><rect x="1.5" y="1.5" width="11" height="11" fill="none" stroke="#b4b4b4" stroke-width="0.9"/><path d="M3.2 5.2H10.5M8.3 3.2L10.6 5.2L8.3 7.200M10.800 8.900H3.500M5.700 6.900L3.400 8.900L5.700 10.900" fill="none" stroke="#f0f0f0" stroke-width="1.1"/></svg></div><div class="cell" style="left:1905.8px;top:-2.2px;width:206px;height:207.1px;overflow:hidden"><div class="t num" style="color:#ababab;-webkit-text-stroke:1.1px #ababab;letter-spacing:0.500px;">8</div><div class="fr" style="left:52px;top:29px;width:101px;height:148px"></div><svg style="left:56.100px;top:33.100px;outline:1px solid #333;outline-offset:-1px" width="92" height="139"><use href="#p8" width="91.500" height="138.500"/></svg><svg style="left:56.1px;top:33.1px" width="14" height="14" viewBox="0 0 14 14"><rect width="14" height="14" fill="#0a0a0a"/><rect x="1.5" y="1.5" width="11" height="11" fill="none" stroke="#b4b4b4" stroke-width="0.9"/><path d="M3.2 5.2H10.5M8.3 3.2L10.6 5.2L8.3 7.200M10.800 8.900H3.500M5.700 6.900L3.400 8.900L5.700 10.900" fill="none" stroke="#f0f0f0" stroke-width="1.1"/></svg></div><div class="cell" style="left:464.2px;top:204.9px;width:205.9px;height:207.1px;overflow:hidden"><div class="t num" style="color:#ababab;-webkit-text-stroke:1.1px #ababab;letter-spacing:0.500px;">9</div><div class="fr" style="left:52px;top:29px;width:101px;height:148px"></div><svg style="left:56.100px;top:33.100px;outline:1px solid #333;outline-offset:-1px" width="92" height="139"><use href="#p9" width="91.500" height="138.500"/></svg><svg style="left:56.1px;top:33.1px" width="14" height="14" viewBox="0 0 14 14"><rect width="14" height="14" fill="#0a0a0a"/><rect x="1.5" y="1.5" width="11" height="11" fill="none" stroke="#b4b4b4" stroke-width="0.9"/><path d="M3.2 5.2H10.5M8.3 3.2L10.6 5.2L8.3 7.200M10.800 8.900H3.500M5.700 6.900L3.400 8.900L5.700 10.900" fill="none" stroke="#f0f0f0" stroke-width="1.1"/></svg></div><div class="cell" style="left:670.1px;top:204.9px;width:206px;height:207.1px;overflow:hidden"><div class="t num" style="color:#ababab;-webkit-text-stroke:1.1px #ababab; left:-12px;letter-spacing:-5px;">10</div><div class="fr" style="left:52px;top:29px;width:101px;height:148px"></div><svg style="left:56.100px;top:33.100px;outline:1px solid #333;outline-offset:-1px" width="92" height="139"><use href="#p10" width="91.500" height="138.500"/></svg><svg style="left:56.1px;top:33.1px" width="14" height="14" viewBox="0 0 14 14"><rect width="14" height="14" fill="#0a0a0a"/><rect x="1.5" y="1.5" width="11" height="11" fill="none" stroke="#b4b4b4" stroke-width="0.9"/><path d="M3.2 5.2H10.5M8.3 3.2L10.6 5.2L8.3 7.200M10.800 8.900H3.500M5.700 6.900L3.400 8.900L5.700 10.900" fill="none" stroke="#f0f0f0" stroke-width="1.1"/></svg></div><div class="cell" style="left:876.1px;top:204.9px;width:205.9px;height:207.1px;overflow:hidden"><div class="t num" style="color:#ababab;-webkit-text-stroke:1.1px #ababab; left:-12px;letter-spacing:-5px;">11</div><div class="fr" style="left:52px;top:29px;width:101px;height:148px"></div><svg style="left:56.100px;top:33.100px;outline:1px solid #333;outline-offset:-1px" width="92" height="139"><use href="#p11" width="91.500" height="138.500"/></svg><svg style="left:56.1px;top:33.1px" width="14" height="14" viewBox="0 0 14 14"><rect width="14" height="14" fill="#0a0a0a"/><rect x="1.5" y="1.5" width="11" height="11" fill="none" stroke="#b4b4b4" stroke-width="0.9"/><path d="M3.2 5.2H10.5M8.3 3.2L10.6 5.2L8.3 7.200M10.800 8.900H3.500M5.700 6.900L3.400 8.900L5.700 10.900" fill="none" stroke="#f0f0f0" stroke-width="1.1"/></svg></div><div class="cell" style="left:1082px;top:204.9px;width:206px;height:207.1px;overflow:hidden"><div class="t num" style="color:#ababab;-webkit-text-stroke:1.1px #ababab; left:-12px;letter-spacing:-5px;">12</div><div class="fr" style="left:52px;top:29px;width:101px;height:148px"></div><svg style="left:56.100px;top:33.100px;outline:1px solid #333;outline-offset:-1px" width="92" height="139"><use href="#p12" width="91.500" height="138.500"/></svg><svg style="left:56.1px;top:33.1px" width="14" height="14" viewBox="0 0 14 14"><rect width="14" height="14" fill="#0a0a0a"/><rect x="1.5" y="1.5" width="11" height="11" fill="none" stroke="#b4b4b4" stroke-width="0.9"/><path d="M3.2 5.2H10.5M8.3 3.2L10.6 5.2L8.3 7.200M10.800 8.900H3.500M5.700 6.900L3.400 8.900L5.700 10.900" fill="none" stroke="#f0f0f0" stroke-width="1.1"/></svg></div><div class="cell" style="left:1288px;top:204.9px;width:206px;height:207.1px;overflow:hidden"><div class="t num" style="color:#ababab;-webkit-text-stroke:1.1px #ababab; left:-12px;letter-spacing:-5px;">13</div><div class="fr" style="left:52px;top:29px;width:101px;height:148px"></div><svg style="left:56.100px;top:33.100px;outline:1px solid #333;outline-offset:-1px" width="92" height="139"><use href="#p13" width="91.500" height="138.500"/></svg><svg style="left:56.1px;top:33.1px" width="14" height="14" viewBox="0 0 14 14"><rect width="14" height="14" fill="#0a0a0a"/><rect x="1.5" y="1.5" width="11" height="11" fill="none" stroke="#b4b4b4" stroke-width="0.9"/><path d="M3.2 5.2H10.5M8.3 3.2L10.6 5.2L8.3 7.200M10.800 8.900H3.500M5.700 6.900L3.400 8.900L5.700 10.900" fill="none" stroke="#f0f0f0" stroke-width="1.1"/></svg></div><div class="cell" style="left:1494px;top:204.9px;width:205.9px;height:207.1px;overflow:hidden"><div class="t num" style="color:#ababab;-webkit-text-stroke:1.1px #ababab; left:-12px;letter-spacing:-5px;">14</div><div class="fr" style="left:52px;top:29px;width:101px;height:148px"></div><svg style="left:56.100px;top:33.100px;outline:1px solid #333;outline-offset:-1px" width="92" height="139"><use href="#p14" width="91.500" height="138.500"/></svg><svg style="left:56.1px;top:33.1px" width="14" height="14" viewBox="0 0 14 14"><rect width="14" height="14" fill="#0a0a0a"/><rect x="1.5" y="1.5" width="11" height="11" fill="none" stroke="#b4b4b4" stroke-width="0.9"/><path d="M3.2 5.2H10.5M8.3 3.2L10.6 5.2L8.3 7.200M10.800 8.900H3.500M5.700 6.900L3.400 8.900L5.700 10.900" fill="none" stroke="#f0f0f0" stroke-width="1.1"/></svg></div><div class="cell" style="left:1699.9px;top:204.9px;width:205.9px;height:207.1px;overflow:hidden"><div class="t num" style="color:#ababab;-webkit-text-stroke:1.1px #ababab; left:-12px;letter-spacing:-5px;">15</div><div class="fr" style="left:52px;top:29px;width:101px;height:148px"></div><svg style="left:56.100px;top:33.100px;outline:1px solid #333;outline-offset:-1px" width="92" height="139"><use href="#p15" width="91.500" height="138.500"/></svg><svg style="left:56.1px;top:33.1px" width="14" height="14" viewBox="0 0 14 14"><rect width="14" height="14" fill="#0a0a0a"/><rect x="1.5" y="1.5" width="11" height="11" fill="none" stroke="#b4b4b4" stroke-width="0.9"/><path d="M3.2 5.2H10.5M8.3 3.2L10.6 5.2L8.3 7.200M10.800 8.900H3.500M5.700 6.900L3.400 8.900L5.700 10.900" fill="none" stroke="#f0f0f0" stroke-width="1.1"/></svg></div><div class="cell" style="left:1905.8px;top:204.9px;width:206px;height:207.1px;overflow:hidden"><div class="t num" style="color:#ababab;-webkit-text-stroke:1.1px #ababab; left:-12px;letter-spacing:-5px;">16</div><div class="fr" style="left:52px;top:29px;width:101px;height:148px"></div><svg style="left:56.100px;top:33.100px;outline:1px solid #333;outline-offset:-1px" width="92" height="139"><use href="#p16" width="91.500" height="138.500"/></svg><svg style="left:56.1px;top:33.1px" width="14" height="14" viewBox="0 0 14 14"><rect width="14" height="14" fill="#0a0a0a"/><rect x="1.5" y="1.5" width="11" height="11" fill="none" stroke="#b4b4b4" stroke-width="0.9"/><path d="M3.2 5.2H10.5M8.3 3.2L10.6 5.2L8.3 7.200M10.800 8.900H3.500M5.700 6.900L3.400 8.900L5.700 10.900" fill="none" stroke="#f0f0f0" stroke-width="1.1"/></svg></div><div class="cell" style="left:464.2px;top:412px;width:205.9px;height:207px;overflow:hidden"><div class="t num" style="color:#ababab;-webkit-text-stroke:1.1px #ababab; left:-12px;letter-spacing:-5px;">17</div><div class="fr" style="left:52px;top:29px;width:101px;height:148px"></div><svg style="left:56.100px;top:33.100px;outline:1px solid #333;outline-offset:-1px" width="92" height="139"><use href="#p17" width="91.500" height="138.500"/></svg><svg style="left:56.1px;top:33.1px" width="14" height="14" viewBox="0 0 14 14"><rect width="14" height="14" fill="#0a0a0a"/><rect x="1.5" y="1.5" width="11" height="11" fill="none" stroke="#b4b4b4" stroke-width="0.9"/><path d="M3.2 5.2H10.5M8.3 3.2L10.6 5.2L8.3 7.200M10.800 8.900H3.500M5.700 6.900L3.400 8.900L5.700 10.900" fill="none" stroke="#f0f0f0" stroke-width="1.1"/></svg></div><div class="cell" style="left:670.1px;top:412px;width:206px;height:207px;overflow:hidden"><div class="t num" style="color:#ababab;-webkit-text-stroke:1.1px #ababab; left:-12px;letter-spacing:-5px;">18</div><div class="fr" style="left:52px;top:29px;width:101px;height:148px"></div><svg style="left:56.100px;top:33.100px;outline:1px solid #333;outline-offset:-1px" width="92" height="139"><use href="#p18" width="91.500" height="138.500"/></svg><svg style="left:56.1px;top:33.1px" width="14" height="14" viewBox="0 0 14 14"><rect width="14" height="14" fill="#0a0a0a"/><rect x="1.5" y="1.5" width="11" height="11" fill="none" stroke="#b4b4b4" stroke-width="0.9"/><path d="M3.2 5.2H10.5M8.3 3.2L10.6 5.2L8.3 7.200M10.800 8.900H3.500M5.700 6.900L3.400 8.900L5.700 10.900" fill="none" stroke="#f0f0f0" stroke-width="1.1"/></svg></div><div class="cell" style="left:876.1px;top:412px;width:205.9px;height:207px;overflow:hidden"><div class="t num" style="color:#ababab;-webkit-text-stroke:1.1px #ababab; left:-12px;letter-spacing:-5px;">19</div><div class="fr" style="left:52px;top:29px;width:101px;height:148px"></div><svg style="left:56.100px;top:33.100px;outline:1px solid #333;outline-offset:-1px" width="92" height="139"><use href="#p19" width="91.500" height="138.500"/></svg><svg style="left:56.1px;top:33.1px" width="14" height="14" viewBox="0 0 14 14"><rect width="14" height="14" fill="#0a0a0a"/><rect x="1.5" y="1.5" width="11" height="11" fill="none" stroke="#b4b4b4" stroke-width="0.9"/><path d="M3.2 5.2H10.5M8.3 3.2L10.6 5.2L8.3 7.200M10.800 8.900H3.500M5.700 6.900L3.400 8.900L5.700 10.900" fill="none" stroke="#f0f0f0" stroke-width="1.1"/></svg></div><div class="cell" style="left:1082px;top:412px;width:206px;height:207px;overflow:hidden"><div class="t num" style="color:#ababab;-webkit-text-stroke:1.1px #ababab;letter-spacing:0.500px;">20</div><div class="fr" style="left:52px;top:29px;width:101px;height:148px"></div><svg style="left:56.100px;top:33.100px;outline:1px solid #333;outline-offset:-1px" width="92" height="139"><use href="#p20" width="91.500" height="138.500"/></svg><svg style="left:56.1px;top:33.1px" width="14" height="14" viewBox="0 0 14 14"><rect width="14" height="14" fill="#0a0a0a"/><rect x="1.5" y="1.5" width="11" height="11" fill="none" stroke="#b4b4b4" stroke-width="0.9"/><path d="M3.2 5.2H10.5M8.3 3.2L10.6 5.2L8.3 7.200M10.800 8.900H3.500M5.700 6.900L3.400 8.900L5.700 10.900" fill="none" stroke="#f0f0f0" stroke-width="1.1"/></svg></div><div class="cell" style="left:1288px;top:412px;width:206px;height:207px;overflow:hidden"><div class="t num" style="color:#ababab;-webkit-text-stroke:1.1px #ababab;letter-spacing:-5px;">21</div><div class="fr" style="left:52px;top:29px;width:101px;height:148px"></div><svg style="left:56.100px;top:33.100px;outline:1px solid #333;outline-offset:-1px" width="92" height="139"><use href="#p21" width="91.500" height="138.500"/></svg><svg style="left:56.1px;top:33.1px" width="14" height="14" viewBox="0 0 14 14"><rect width="14" height="14" fill="#0a0a0a"/><rect x="1.5" y="1.5" width="11" height="11" fill="none" stroke="#b4b4b4" stroke-width="0.9"/><path d="M3.2 5.2H10.5M8.3 3.2L10.6 5.2L8.3 7.200M10.800 8.900H3.500M5.700 6.900L3.400 8.900L5.700 10.900" fill="none" stroke="#f0f0f0" stroke-width="1.1"/></svg></div><div class="cell" style="left:1494px;top:412px;width:205.9px;height:207px;overflow:hidden"><div class="t num" style="color:#ababab;-webkit-text-stroke:1.1px #ababab;letter-spacing:0.500px;">22</div><div class="fr" style="left:52px;top:29px;width:101px;height:148px"></div><svg style="left:56.100px;top:33.100px;outline:1px solid #333;outline-offset:-1px" width="92" height="139"><use href="#p22" width="91.500" height="138.500"/></svg><svg style="left:56.1px;top:33.1px" width="14" height="14" viewBox="0 0 14 14"><rect width="14" height="14" fill="#0a0a0a"/><rect x="1.5" y="1.5" width="11" height="11" fill="none" stroke="#b4b4b4" stroke-width="0.9"/><path d="M3.2 5.2H10.5M8.3 3.2L10.6 5.2L8.3 7.200M10.800 8.900H3.500M5.700 6.900L3.400 8.900L5.700 10.900" fill="none" stroke="#f0f0f0" stroke-width="1.1"/></svg></div><div class="cell" style="left:1699.9px;top:412px;width:205.9px;height:207px;overflow:hidden"><div class="t num" style="color:#ababab;-webkit-text-stroke:1.1px #ababab;letter-spacing:0.500px;">23</div><div class="fr" style="left:52px;top:29px;width:101px;height:148px"></div><svg style="left:56.100px;top:33.100px;outline:1px solid #333;outline-offset:-1px" width="92" height="139"><use href="#p23" width="91.500" height="138.500"/></svg><svg style="left:56.1px;top:33.1px" width="14" height="14" viewBox="0 0 14 14"><rect width="14" height="14" fill="#0a0a0a"/><rect x="1.5" y="1.5" width="11" height="11" fill="none" stroke="#b4b4b4" stroke-width="0.9"/><path d="M3.2 5.2H10.5M8.3 3.2L10.6 5.2L8.3 7.200M10.800 8.900H3.500M5.700 6.900L3.400 8.900L5.700 10.900" fill="none" stroke="#f0f0f0" stroke-width="1.1"/></svg></div><div class="cell" style="left:1905.8px;top:412px;width:206px;height:207px;overflow:hidden"><div class="t num" style="color:#ababab;-webkit-text-stroke:1.1px #ababab;letter-spacing:0.500px;">24</div><div class="fr" style="left:52px;top:29px;width:101px;height:148px"></div><svg style="left:56.100px;top:33.100px;outline:1px solid #333;outline-offset:-1px" width="92" height="139"><use href="#p24" width="91.500" height="138.500"/></svg><svg style="left:56.1px;top:33.1px" width="14" height="14" viewBox="0 0 14 14"><rect width="14" height="14" fill="#0a0a0a"/><rect x="1.5" y="1.5" width="11" height="11" fill="none" stroke="#b4b4b4" stroke-width="0.9"/><path d="M3.2 5.2H10.5M8.3 3.2L10.6 5.2L8.3 7.200M10.800 8.900H3.500M5.700 6.900L3.400 8.900L5.700 10.900" fill="none" stroke="#f0f0f0" stroke-width="1.1"/></svg></div><div class="cell" style="left:464.2px;top:619px;width:205.9px;height:207.1px;overflow:hidden"><div class="t num" style="color:#ababab;-webkit-text-stroke:1.1px #ababab;letter-spacing:0.500px;">25</div><div class="fr" style="left:52px;top:29px;width:101px;height:148px"></div><svg style="left:56.100px;top:33.100px;outline:1px solid #333;outline-offset:-1px" width="92" height="139"><use href="#p25" width="91.500" height="138.500"/></svg><svg style="left:56.1px;top:33.1px" width="14" height="14" viewBox="0 0 14 14"><rect width="14" height="14" fill="#0a0a0a"/><rect x="1.5" y="1.5" width="11" height="11" fill="none" stroke="#b4b4b4" stroke-width="0.9"/><path d="M3.2 5.2H10.5M8.3 3.2L10.6 5.2L8.3 7.200M10.800 8.900H3.500M5.700 6.900L3.400 8.900L5.700 10.900" fill="none" stroke="#f0f0f0" stroke-width="1.1"/></svg></div><div class="cell" style="left:670.1px;top:619px;width:206px;height:207.1px;overflow:hidden"><div class="t num" style="color:#ababab;-webkit-text-stroke:1.1px #ababab;letter-spacing:0.500px;">26</div><div class="fr" style="left:52px;top:29px;width:101px;height:148px"></div><svg style="left:56.100px;top:33.100px;outline:1px solid #333;outline-offset:-1px" width="92" height="139"><use href="#p26" width="91.500" height="138.500"/></svg><svg style="left:56.1px;top:33.1px" width="14" height="14" viewBox="0 0 14 14"><rect width="14" height="14" fill="#0a0a0a"/><rect x="1.5" y="1.5" width="11" height="11" fill="none" stroke="#b4b4b4" stroke-width="0.9"/><path d="M3.2 5.2H10.5M8.3 3.2L10.6 5.2L8.3 7.200M10.800 8.900H3.500M5.700 6.900L3.400 8.900L5.700 10.900" fill="none" stroke="#f0f0f0" stroke-width="1.1"/></svg></div><div class="cell" style="left:876.1px;top:619px;width:205.9px;height:207.1px;overflow:hidden"><div class="t num" style="color:#ababab;-webkit-text-stroke:1.1px #ababab;letter-spacing:0.500px;">27</div><div class="fr" style="left:52px;top:29px;width:101px;height:148px"></div><svg style="left:56.100px;top:33.100px;outline:1px solid #333;outline-offset:-1px" width="92" height="139"><use href="#p27" width="91.500" height="138.500"/></svg><svg style="left:56.1px;top:33.1px" width="14" height="14" viewBox="0 0 14 14"><rect width="14" height="14" fill="#0a0a0a"/><rect x="1.5" y="1.5" width="11" height="11" fill="none" stroke="#b4b4b4" stroke-width="0.9"/><path d="M3.2 5.2H10.5M8.3 3.2L10.6 5.2L8.3 7.200M10.800 8.900H3.500M5.700 6.900L3.400 8.900L5.700 10.900" fill="none" stroke="#f0f0f0" stroke-width="1.1"/></svg></div><div class="cell" style="left:1082px;top:619px;width:206px;height:207.1px;overflow:hidden"><div class="t num" style="color:#ababab;-webkit-text-stroke:1.1px #ababab;letter-spacing:0.500px;">28</div><div class="fr" style="left:52px;top:29px;width:101px;height:148px"></div><svg style="left:56.100px;top:33.100px;outline:1px solid #333;outline-offset:-1px" width="92" height="139"><use href="#p28" width="91.500" height="138.500"/></svg><svg style="left:56.1px;top:33.1px" width="14" height="14" viewBox="0 0 14 14"><rect width="14" height="14" fill="#0a0a0a"/><rect x="1.5" y="1.5" width="11" height="11" fill="none" stroke="#b4b4b4" stroke-width="0.9"/><path d="M3.2 5.2H10.5M8.3 3.2L10.6 5.2L8.3 7.200M10.800 8.900H3.500M5.700 6.900L3.400 8.900L5.700 10.900" fill="none" stroke="#f0f0f0" stroke-width="1.1"/></svg></div><div class="cell" style="left:1288px;top:619px;width:206px;height:207.1px;overflow:hidden"><div class="t num" style="color:#ababab;-webkit-text-stroke:1.1px #ababab;letter-spacing:0.500px;">29</div><div class="fr" style="left:52px;top:29px;width:101px;height:148px"></div><svg style="left:56.100px;top:33.100px;outline:1px solid #333;outline-offset:-1px" width="92" height="139"><use href="#p29" width="91.500" height="138.500"/></svg><svg style="left:56.1px;top:33.1px" width="14" height="14" viewBox="0 0 14 14"><rect width="14" height="14" fill="#0a0a0a"/><rect x="1.5" y="1.5" width="11" height="11" fill="none" stroke="#b4b4b4" stroke-width="0.9"/><path d="M3.2 5.2H10.5M8.3 3.2L10.6 5.2L8.3 7.200M10.800 8.900H3.500M5.700 6.900L3.400 8.900L5.700 10.900" fill="none" stroke="#f0f0f0" stroke-width="1.1"/></svg></div><div class="cell" style="left:1494px;top:619px;width:205.9px;height:207.1px;overflow:hidden"><div class="t num" style="color:#ababab;-webkit-text-stroke:1.1px #ababab;letter-spacing:0.500px;">30</div><div class="fr" style="left:52px;top:29px;width:101px;height:148px"></div><svg style="left:56.100px;top:33.100px;outline:1px solid #333;outline-offset:-1px" width="92" height="139"><use href="#p30" width="91.500" height="138.500"/></svg><svg style="left:56.1px;top:33.1px" width="14" height="14" viewBox="0 0 14 14"><rect width="14" height="14" fill="#0a0a0a"/><rect x="1.5" y="1.5" width="11" height="11" fill="none" stroke="#b4b4b4" stroke-width="0.9"/><path d="M3.2 5.2H10.5M8.3 3.2L10.6 5.2L8.3 7.200M10.800 8.900H3.500M5.700 6.900L3.400 8.900L5.700 10.900" fill="none" stroke="#f0f0f0" stroke-width="1.1"/></svg></div><div class="cell" style="left:1699.9px;top:619px;width:205.9px;height:207.1px;overflow:hidden"><div class="t num" style="color:#ababab;-webkit-text-stroke:1.1px #ababab;letter-spacing:-5px;">31</div><div class="fr" style="left:52px;top:29px;width:101px;height:148px"></div><svg style="left:56.100px;top:33.100px;outline:1px solid #333;outline-offset:-1px" width="92" height="139"><use href="#p31" width="91.500" height="138.500"/></svg><svg style="left:56.1px;top:33.1px" width="14" height="14" viewBox="0 0 14 14"><rect width="14" height="14" fill="#0a0a0a"/><rect x="1.5" y="1.5" width="11" height="11" fill="none" stroke="#b4b4b4" stroke-width="0.9"/><path d="M3.2 5.2H10.5M8.3 3.2L10.6 5.2L8.3 7.200M10.800 8.900H3.500M5.700 6.900L3.400 8.900L5.700 10.900" fill="none" stroke="#f0f0f0" stroke-width="1.1"/></svg></div><div class="cell" style="left:1905.8px;top:619px;width:206px;height:207.1px;overflow:hidden"><div class="t num" style="color:#ababab;-webkit-text-stroke:1.1px #ababab;letter-spacing:0.500px;">32</div><div class="fr" style="left:52px;top:29px;width:101px;height:148px"></div><svg style="left:56.100px;top:33.100px;outline:1px solid #333;outline-offset:-1px" width="92" height="139"><use href="#p32" width="91.500" height="138.500"/></svg><svg style="left:56.1px;top:33.1px" width="14" height="14" viewBox="0 0 14 14"><rect width="14" height="14" fill="#0a0a0a"/><rect x="1.5" y="1.5" width="11" height="11" fill="none" stroke="#b4b4b4" stroke-width="0.9"/><path d="M3.2 5.2H10.5M8.3 3.2L10.6 5.2L8.3 7.200M10.800 8.900H3.500M5.700 6.900L3.400 8.900L5.700 10.900" fill="none" stroke="#f0f0f0" stroke-width="1.1"/></svg></div><div class="cell" style="left:464.2px;top:826.1px;width:205.9px;height:207.1px;overflow:hidden"><div class="t num" style="color:#ababab;-webkit-text-stroke:1.1px #ababab;letter-spacing:0.500px;">33</div><div class="fr" style="left:52px;top:29px;width:101px;height:148px"></div><svg style="left:56.100px;top:33.100px;outline:1px solid #333;outline-offset:-1px" width="92" height="139"><use href="#p33" width="91.500" height="138.500"/></svg><svg style="left:56.1px;top:33.1px" width="14" height="14" viewBox="0 0 14 14"><rect width="14" height="14" fill="#0a0a0a"/><rect x="1.5" y="1.5" width="11" height="11" fill="none" stroke="#b4b4b4" stroke-width="0.9"/><path d="M3.2 5.2H10.5M8.3 3.2L10.6 5.2L8.3 7.200M10.800 8.900H3.500M5.700 6.900L3.400 8.900L5.700 10.900" fill="none" stroke="#f0f0f0" stroke-width="1.1"/></svg></div><div class="cell" style="left:670.1px;top:826.1px;width:206px;height:207.1px;overflow:hidden"><div class="t num" style="color:#ababab;-webkit-text-stroke:1.1px #ababab;letter-spacing:0.500px;">34</div><div class="fr" style="left:52px;top:29px;width:101px;height:148px"></div><svg style="left:56.100px;top:33.100px;outline:1px solid #333;outline-offset:-1px" width="92" height="139"><use href="#p34" width="91.500" height="138.500"/></svg><svg style="left:56.1px;top:33.1px" width="14" height="14" viewBox="0 0 14 14"><rect width="14" height="14" fill="#0a0a0a"/><rect x="1.5" y="1.5" width="11" height="11" fill="none" stroke="#b4b4b4" stroke-width="0.9"/><path d="M3.2 5.2H10.5M8.3 3.2L10.6 5.2L8.3 7.200M10.800 8.900H3.500M5.700 6.900L3.400 8.900L5.700 10.900" fill="none" stroke="#f0f0f0" stroke-width="1.1"/></svg></div><div class="cell" style="left:876.1px;top:826.1px;width:205.9px;height:207.1px;overflow:hidden"><div class="t num" style="color:#ababab;-webkit-text-stroke:1.1px #ababab;letter-spacing:0.500px;">35</div><div class="fr" style="left:52px;top:29px;width:101px;height:148px"></div><svg style="left:56.100px;top:33.100px;outline:1px solid #333;outline-offset:-1px" width="92" height="139"><use href="#p35" width="91.500" height="138.500"/></svg><svg style="left:56.1px;top:33.1px" width="14" height="14" viewBox="0 0 14 14"><rect width="14" height="14" fill="#0a0a0a"/><rect x="1.5" y="1.5" width="11" height="11" fill="none" stroke="#b4b4b4" stroke-width="0.9"/><path d="M3.2 5.2H10.5M8.3 3.2L10.6 5.2L8.3 7.200M10.800 8.900H3.500M5.700 6.900L3.400 8.900L5.700 10.900" fill="none" stroke="#f0f0f0" stroke-width="1.1"/></svg></div></div>
<div style="left:465px;top:1512px;width:1676px;height:62.5px;background:#4b4b4b;border-top:2px solid #161616;border-bottom:1.500px solid #1c1c1c"></div>
<svg style="left:476.8px;top:1535px" width="29.6" height="19.3" viewBox="0 0 29 19"><rect x="0" y="0" width="5" height="4" fill="#d2d2d2"/><rect x="0" y="5" width="5" height="4" fill="#d2d2d2"/><rect x="0" y="10" width="5" height="4" fill="#d2d2d2"/><rect x="0" y="15" width="5" height="4" fill="#d2d2d2"/><rect x="6" y="0" width="5" height="4" fill="#d2d2d2"/><rect x="6" y="5" width="5" height="4" fill="#d2d2d2"/><rect x="6" y="10" width="5" height="4" fill="#d2d2d2"/><rect x="6" y="15" width="5" height="4" fill="#d2d2d2"/><rect x="12" y="0" width="5" height="4" fill="#d2d2d2"/><rect x="12" y="5" width="5" height="4" fill="#d2d2d2"/><rect x="12" y="10" width="5" height="4" fill="#d2d2d2"/><rect x="12" y="15" width="5" height="4" fill="#d2d2d2"/><rect x="18" y="0" width="5" height="4" fill="#d2d2d2"/><rect x="18" y="5" width="5" height="4" fill="#d2d2d2"/><rect x="18" y="10" width="5" height="4" fill="#d2d2d2"/><rect x="18" y="15" width="5" height="4" fill="#d2d2d2"/><rect x="24" y="0" width="5" height="4" fill="#d2d2d2"/><rect x="24" y="5" width="5" height="4" fill="#d2d2d2"/><rect x="24" y="10" width="5" height="4" fill="#d2d2d2"/><rect x="24" y="15" width="5" height="4" fill="#d2d2d2"/></svg>
<svg style="left:516.5px;top:1534.500px" width="32" height="21" viewBox="0 0 32 22" preserveAspectRatio="none"><rect x="0.5" y="0.5" width="30" height="20" rx="1.5" fill="#8c8c8c" stroke="#2c2c2c"/><rect x="0.5" y="20.5" width="30" height="1" fill="#5e5e5e"/><rect x="6.5" y="5" width="18" height="11" fill="#a0a0a0" stroke="#2a2a2a" stroke-width="1.3"/></svg>
<svg style="left:556.5px;top:1534.500px" width="33.5" height="21" viewBox="0 0 33.5 22" preserveAspectRatio="none"><rect x="0.5" y="0.5" width="31.5" height="20" rx="1.5" fill="#8c8c8c" stroke="#2c2c2c"/><rect x="0.5" y="20.5" width="31.5" height="1" fill="#5e5e5e"/><path d="M15.8 0.5V20.5" stroke="#2c2c2c"/><path d="M4.5 5.5L11.5 15.5M11.5 5.5L4.5 15.5M20 5.5L23.7 10.5L27.5 5.5M23.7 10.5V15.8" fill="none" stroke="#444" stroke-width="1.2"/></svg>
<svg style="left:598.5px;top:1534.500px" width="33" height="21" viewBox="0 0 33 22" preserveAspectRatio="none"><rect x="0.5" y="0.5" width="31" height="20" rx="1.5" fill="#8c8c8c" stroke="#2c2c2c"/><rect x="0.5" y="20.5" width="31" height="1" fill="#5e5e5e"/><rect x="3.5" y="3.5" width="10" height="6" fill="#a2a2a2" stroke="#3a3a3a"/><rect x="16.500" y="3.5" width="10.500" height="6" fill="#a2a2a2" stroke="#3a3a3a"/><rect x="3.5" y="11.5" width="10" height="6" fill="#a2a2a2" stroke="#3a3a3a"/><rect x="17" y="15" width="2" height="2" fill="#3a3a3a"/><rect x="21" y="15" width="2" height="2" fill="#3a3a3a"/><rect x="25" y="15" width="2" height="2" fill="#3a3a3a"/></svg>
<svg style="left:640.5px;top:1534.500px" width="32" height="21" viewBox="0 0 32 22" preserveAspectRatio="none"><rect x="0.5" y="0.5" width="30" height="20" rx="1.5" fill="#8c8c8c" stroke="#2c2c2c"/><rect x="0.5" y="20.5" width="30" height="1" fill="#5e5e5e"/><circle cx="15" cy="10.5" r="6.3" fill="#a0a0a0" stroke="#333" stroke-width="1.3"/><path d="M9 8.5q6 -6 12 0" fill="#333"/><circle cx="12.600" cy="11" r="0.9" fill="#333"/><circle cx="17.400" cy="11" r="0.9" fill="#333"/><path d="M13 13.800q2 1.300 4 0" fill="none" stroke="#333" stroke-width="0.9"/></svg>
<div style="left:683.5px;top:1524px;width:1.5px;height:41px;background:#333;border-right:0.5px solid #555"></div>
<div style="left:760.8px;top:1524px;width:1.5px;height:41px;background:#333;border-right:0.5px solid #555"></div>
<div style="left:1053.5px;top:1524px;width:1.5px;height:41px;background:#333;border-right:0.5px solid #555"></div>
<div style="left:704.8px;top:1523.3px;width:43.4px;height:43.4px;background:#424242;border-radius:50%"></div>
<svg style="left:719px;top:1531px" width="15" height="27" viewBox="0 0 15 27"><rect x="5.5" y="0.5" width="4" height="3" fill="#a8a8a8" stroke="#2a2a2a" stroke-width="0.8"/><path d="M3 8q0-4 4.500-4t4.500 4z" fill="#a8a8a8" stroke="#2a2a2a" stroke-width="0.8"/><rect x="1.5" y="8.5" width="12" height="17" rx="1" fill="#a8a8a8" stroke="#2a2a2a"/><path d="M4.500 21.500v-6l3-3.500l3 3.500v6z" fill="none" stroke="#2a2a2a" stroke-width="1"/><rect x="1" y="24.500" width="13" height="2" fill="#2a2a2a"/></svg>
<svg style="left:774.5px;top:1533px" width="33" height="24" viewBox="0 0 33 24"><g fill="none" stroke="#9c9c9c" stroke-width="2.100"><path d="M5 18.500Q1 12 5 5.500"/><path d="M28 5.500Q32 12 28 18.500"/></g><path d="M2.200 5.500h5.200l-2.600-3.500zM25.600 18.500h5.200l-2.600 3.500z" fill="#9c9c9c"/></svg>
<div class="t" style="left:784.2px;top:1531.9px;font-size:13.7px;color:#a4a4a4;font-weight:700;">A</div>
<div class="t" style="left:784.7px;top:1545.4px;font-size:13.7px;color:#a4a4a4;font-weight:700;">Z</div>
<div class="t" style="left:817.5px;top:1537.9px;font-size:17.48px;color:#8c8c8c;letter-spacing:-0.20px;">Sort:</div>
<div class="t" style="left:871.9px;top:1537.5px;font-size:17.95px;color:#cfcfcf;letter-spacing:-0.73px;">Capture Time</div>
<svg style="left:979px;top:1541.5px" width="5.5" height="9.5" viewBox="0 0 6 10"><path d="M0 4L3 0.5L6 4zM0 6L3 9.5L6 6z" fill="#b4b4b4"/></svg>
<div class="t" style="left:1950.0px;top:1532.3px;font-size:16.54px;color:#adadad;letter-spacing:0.34px;">Thumbnails</div>
<div style="left:1946px;top:1558.5px;width:130px;height:5.5px;background:linear-gradient(#7c7c7c,#5a5a5a);border:1px solid #1e1e1e;border-radius:3px;box-shadow:0 1px 0 #5a5a5a"></div>
<div style="left:1956px;top:1553.5px;width:110px;height:3px;background:repeating-linear-gradient(90deg,#626262 0,#626262 1px,transparent 1px,transparent 10.900px)"></div>
<svg style="left:1979.5px;top:1553.5px" width="16" height="17" viewBox="0 0 16 17"><path d="M8 0.800L13.500 7.500A6 6 0 1 1 2.500 7.500z" fill="#9a9a9a" stroke="#1e1e1e" stroke-width="1.200"/></svg>
<div style="left:2087.5px;top:1524px;width:1.5px;height:41px;background:#3a3a3a"></div>
<svg style="left:2107.500px;top:1541.500px" width="11.700" height="6.800" viewBox="0 0 13 8"><path d="M0 0H13L6.500 8z" fill="#b8b8b8"/></svg>
<div style="left:2143px;top:174px;width:441px;height:1401px;background:#050505;border:1px solid #262626"></div>
<div class="stripes" style="left:2566px;top:178px;width:15px;height:296px;"></div>
<div class="stripes" style="left:2566px;top:1509px;width:15px;height:63px;"></div>
<div style="left:2144px;top:177px;width:420px;height:1397px;background:#282828;border-right:1px solid #3a3a3a"></div>
<div class="t" style="left:2419.2px;top:189.6px;font-size:21.73px;color:#b2b2b2;letter-spacing:0.27px;text-shadow:0 1px 1px #000;">Histogram</div>
<svg style="left:2539px;top:196px" width="10.5" height="9.5" viewBox="0 0 10 9"><path d="M0 0H10L5 9z" fill="#9c9c9c"/></svg>
<div style="left:2149.5px;top:223.5px;width:409.5px;height:250px;background:#464646;border:1px solid #1a1a1a"></div>
<div style="left:2164px;top:236px;width:380.5px;height:162px;background:#383838;border:1px solid #1c1c1c"></div>
<svg style="left:2165px;top:237px" width="378.5" height="160" viewBox="229 236 1330 562" preserveAspectRatio="none"><path d="M230 798L238 700L246 500L258 240L266 360L276 450L290 560L305 600L330 680L360 715L420 700L520 712L640 700L668 640L690 450L712 275L740 270L770 300L800 345L830 400L860 435L890 480L905 505L940 520L975 525L1005 508L1030 540L1060 585L1100 625L1150 630L1210 705L1260 735L1290 768L1320 775L1350 798z" fill="#1a58b2"/><path d="M232 798L250 640L262 440L272 400L285 470L300 570L330 640L370 690L430 690L455 560L475 400L490 328L510 345L530 400L560 470L590 560L620 610L660 630L700 642L770 630L850 580L940 540L1000 520L1040 545L1090 560L1130 555L1160 590L1200 650L1240 645L1270 700L1300 760L1340 775L1395 722L1418 750L1440 795L1440 798z" fill="#cf2f2f"/><path d="M232 798L248 650L260 460L270 380L282 470L300 580L330 650L370 700L455 690L485 480L505 380L518 362L540 400L570 480L600 560L630 600L665 625L700 625L760 600L800 575L850 545L900 510L935 495L960 515L1000 525L1050 560L1090 548L1130 575L1160 630L1190 655L1220 648L1250 690L1285 750L1320 765L1375 725L1395 760L1410 795L1410 798z" fill="#4f8347"/><path d="M232 798L245 720L258 560L272 445L290 560L305 600L330 680L350 705L375 722L400 712L430 700L455 690L470 708L520 712L550 722L600 712L640 700L665 655L672 640L700 642L730 647L770 630L800 600L850 580L900 560L940 540L975 528L1000 540L1020 560L1050 585L1080 610L1100 625L1125 600L1150 630L1180 670L1210 705L1235 700L1260 735L1290 765L1320 775L1350 790L1350 798z" fill="#c4c4c4"/></svg>
<div class="t" style="left:2166.0px;top:407.4px;font-size:17.01px;color:#bdbdbd;letter-spacing:-1.64px;">ISO 100</div>
<div class="t" style="left:2283.5px;top:407.4px;font-size:17.01px;color:#bdbdbd;letter-spacing:-0.86px;">12 mm</div>
<div class="t" style="left:2381.0px;top:407.4px;font-size:17.01px;color:#bdbdbd;letter-spacing:-0.08px;">f / 8,0</div>
<div class="t" style="left:2473.5px;top:407.4px;font-size:17.01px;color:#bdbdbd;letter-spacing:-0.84px;">1/320 sec</div>
<div style="left:2164px;top:430.5px;width:380.5px;height:1px;background:#5a5a5a"></div>
<svg style="left:2167.5px;top:448px" width="14" height="9.5" viewBox="0 0 14 9.5"><rect x="0.7" y="0.7" width="12" height="7.600" fill="none" stroke="#b4b4b4" stroke-width="1.3"/></svg>
<div class="t" style="left:2192.1px;top:445.6px;font-size:15.59px;color:#a6a6a6;letter-spacing:1.54px;">35</div>
<svg style="left:2266.8px;top:448px" width="14" height="9.5" viewBox="0 0 14 9.5"><rect x="0.5" y="0.5" width="12.5" height="8" fill="none" stroke="#686868"/><rect x="2.5" y="2.5" width="8.5" height="4" fill="#686868"/></svg>
<div class="t" style="left:2291.6px;top:445.6px;font-size:15.59px;color:#686868;">0</div>
<svg style="left:2365.8px;top:448px" width="14" height="9.5" viewBox="0 0 14 9.5"><rect x="0.5" y="0.5" width="12.5" height="8" fill="none" stroke="#686868" stroke-dasharray="1 1"/><rect x="2.5" y="2.5" width="8.5" height="4" fill="#686868"/></svg>
<div class="t" style="left:2390.6px;top:445.6px;font-size:15.59px;color:#686868;">0</div>
<svg style="left:2464.8px;top:448px" width="14" height="9.5" viewBox="0 0 14 9.5"><rect x="0.5" y="0.5" width="12.5" height="8" fill="none" stroke="#686868" stroke-dasharray="1 1"/><path d="M6.700 2.5V5.5" stroke="#686868"/></svg>
<div class="t" style="left:2489.6px;top:445.6px;font-size:15.59px;color:#686868;">0</div>
<div style="left:2157px;top:485.5px;width:159px;height:23px;background:#3c3c3c;border:1px solid #222;border-radius:2px"></div>
<div style="left:2295.5px;top:485.5px;width:20.5px;height:23px;background:linear-gradient(#6a6a6a,#505050);border:1px solid #222;border-radius:2px"></div>
<svg style="left:2300.25px;top:490.0px" width="11" height="14" viewBox="0 0 11 14"><path d="M1 5.500L5.500 0.800L10 5.500zM1 8.500L5.500 13.200L10 8.500z" fill="#c4c4c4" stroke="#222" stroke-width="0.6"/></svg>
<div class="t" style="left:2163.6px;top:489.6px;font-size:14.65px;color:#b4b4b4;letter-spacing:-0.49px;">Defaults</div>
<div class="t" style="left:2375.7px;top:485.3px;font-size:21.73px;color:#b2b2b2;letter-spacing:0.28px;text-shadow:0 1px 1px #000;">Quick Develop</div>
<svg style="left:2540.5px;top:491px" width="10" height="10" viewBox="0 0 9 10"><path d="M9 0V10L0 5z" fill="#a0a0a0"/></svg>
<div class="hd" style="left:2148px;top:516.5px;width:411px;height:4px;"></div>
<div class="t" style="left:2403.2px;top:531.8px;font-size:21.73px;color:#b2b2b2;letter-spacing:0.40px;text-shadow:0 1px 1px #000;">Keywording</div>
<svg style="left:2540.5px;top:537.5px" width="10" height="10" viewBox="0 0 9 10"><path d="M9 0V10L0 5z" fill="#a0a0a0"/></svg>
<div class="hd" style="left:2148px;top:562.5px;width:411px;height:4px;"></div>
<div class="t" style="left:2393.7px;top:578.1px;font-size:21.73px;color:#b2b2b2;letter-spacing:0.21px;text-shadow:0 1px 1px #000;">Keyword List</div>
<svg style="left:2540.5px;top:583.5px" width="10" height="10" viewBox="0 0 9 10"><path d="M9 0V10L0 5z" fill="#a0a0a0"/></svg>
<svg style="left:2154.5px;top:582.5px" width="12" height="12" viewBox="0 0 12 12"><path d="M0 6H12M6 0V12" stroke="#d0d0d0" stroke-width="1.600"/></svg>
<div class="hd" style="left:2148px;top:608.5px;width:411px;height:4px;"></div>
<svg style="left:2156.5px;top:628.5px" width="19" height="15" viewBox="0 0 19 15"><path d="M0.8 7Q8.500 -3 16.200 7Q8.500 17 0.8 7z" fill="#b8b8b8"/><circle cx="8.500" cy="7" r="3.600" fill="#282828"/><circle cx="8.500" cy="7" r="1.700" fill="#b8b8b8"/><path d="M12 14.500l6.500-6.500-1.800-1.800-6.500 6.500-0.700 2.500z" fill="#b8b8b8" stroke="#282828" stroke-width="0.8"/></svg>
<div style="left:2198.5px;top:624px;width:167px;height:23px;background:#3c3c3c;border:1px solid #222;border-radius:2px"></div>
<div style="left:2344.5px;top:624px;width:20.5px;height:23px;background:linear-gradient(#6a6a6a,#505050);border:1px solid #222;border-radius:2px"></div>
<svg style="left:2349.25px;top:628.5px" width="11" height="14" viewBox="0 0 11 14"><path d="M1 5.500L5.500 0.800L10 5.500zM1 8.500L5.500 13.200L10 8.500z" fill="#c4c4c4" stroke="#222" stroke-width="0.6"/></svg>
<div class="t" style="left:2204.6px;top:628.1px;font-size:14.65px;color:#b4b4b4;letter-spacing:-0.11px;">Default</div>
<div class="t" style="left:2428.2px;top:627.1px;font-size:21.73px;color:#b2b2b2;letter-spacing:0.29px;text-shadow:0 1px 1px #000;">Metadata</div>
<svg style="left:2540px;top:632px" width="10.5" height="9.5" viewBox="0 0 10 9"><path d="M0 0H10L5 9z" fill="#9c9c9c"/></svg>
<div style="left:2148px;top:659.5px;width:411px;height:425px;background:#464646;border:1px solid #1a1a1a"></div>
<div class="t" style="left:2217.5px;top:677.1px;font-size:17.01px;color:#a2a2a2;letter-spacing:-0.32px;">Preset</div>
<div style="left:2278px;top:673.5px;width:267px;height:22.5px;background:#5c5c5c;border:1px solid #2a2a2a"></div>
<div style="left:2524px;top:673.5px;width:21px;height:22.5px;background:linear-gradient(#6a6a6a,#505050);border:1px solid #222;border-radius:2px"></div>
<svg style="left:2529.0px;top:677.75px" width="11" height="14" viewBox="0 0 11 14"><path d="M1 5.500L5.500 0.800L10 5.500zM1 8.500L5.500 13.200L10 8.500z" fill="#c4c4c4" stroke="#222" stroke-width="0.6"/></svg>
<div class="t" style="left:2284.5px;top:676.6px;font-size:17.01px;color:#8e8e8e;letter-spacing:0.13px;">None</div>
<div style="left:2149px;top:709px;width:409px;height:1px;background:#1c1c1c"></div>
<div style="left:2149px;top:710px;width:409px;height:25px;background:#2f2f2f"></div>
<div style="left:2149px;top:735px;width:409px;height:1px;background:#1c1c1c"></div>
<div class="t" style="left:2230.5px;top:714.5px;font-size:16.54px;color:#f2f2f2;letter-spacing:0.11px;text-shadow:0 1px 1px #000;">Target Photo</div>
<div style="left:2341px;top:716.5px;width:1.5px;height:14px;background:#555"></div>
<div class="t" style="left:2359.5px;top:714.5px;font-size:16.54px;color:#8a8a8a;letter-spacing:-0.17px;">Selected Photos</div>
<div class="t" style="left:2189.5px;top:750.6px;font-size:17.01px;color:#a2a2a2;letter-spacing:-0.24px;text-shadow:0 1px 1px #333;">File Name</div>
<div class="t" style="left:2218.0px;top:782.6px;font-size:17.01px;color:#a2a2a2;letter-spacing:-0.23px;text-shadow:0 1px 1px #333;">Folder</div>
<div class="t" style="left:2230.0px;top:809.6px;font-size:17.01px;color:#a2a2a2;letter-spacing:0.89px;text-shadow:0 1px 1px #333;">Title</div>
<div class="t" style="left:2207.0px;top:840.6px;font-size:17.01px;color:#a2a2a2;letter-spacing:-0.09px;text-shadow:0 1px 1px #333;">Caption</div>
<div class="t" style="left:2193.0px;top:871.8px;font-size:17.01px;color:#a2a2a2;letter-spacing:-0.09px;text-shadow:0 1px 1px #333;">Copyright</div>
<div class="t" style="left:2208.0px;top:902.9px;font-size:17.01px;color:#a2a2a2;letter-spacing:0.06px;text-shadow:0 1px 1px #333;">Creator</div>
<div class="t" style="left:2216.0px;top:934.6px;font-size:17.01px;color:#a2a2a2;letter-spacing:-0.02px;text-shadow:0 1px 1px #333;">Rating</div>
<div class="t" style="left:2164.0px;top:965.9px;font-size:17.01px;color:#a2a2a2;letter-spacing:-0.01px;text-shadow:0 1px 1px #333;">Capture Date</div>
<div class="t" style="left:2177.0px;top:994.3px;font-size:17.01px;color:#a2a2a2;letter-spacing:-0.09px;text-shadow:0 1px 1px #333;">Dimensions</div>
<div class="field" style="left:2280px;top:747.5px;width:245px;height:27px;"></div>
<div class="field" style="left:2280px;top:807px;width:267px;height:27px;"></div>
<div class="field" style="left:2280px;top:837.5px;width:267px;height:27px;"></div>
<div class="field" style="left:2280px;top:868.5px;width:267px;height:27px;"></div>
<div class="field" style="left:2280px;top:899.5px;width:267px;height:27px;"></div>
<div class="t" style="left:2281.5px;top:751.6px;font-size:17.01px;color:#d6d6d6;letter-spacing:-0.86px;text-shadow:0 1px 1px #222;">_MIR7493.ARW</div>
<div class="t" style="left:2280.5px;top:782.6px;font-size:17.01px;color:#d6d6d6;letter-spacing:-0.67px;text-shadow:0 1px 1px #222;">2. Files HDR Pano</div>
<div class="t" style="left:2281.5px;top:872.6px;font-size:17.01px;color:#d6d6d6;letter-spacing:-0.23px;text-shadow:0 1px 1px #222;">Mikhail Rybakov</div>
<div class="t" style="left:2281.5px;top:903.6px;font-size:17.01px;color:#d6d6d6;letter-spacing:-0.23px;text-shadow:0 1px 1px #222;">Mikhail Rybakov</div>
<div class="t" style="left:2280.5px;top:965.9px;font-size:17.01px;color:#d6d6d6;letter-spacing:-0.65px;text-shadow:0 1px 1px #222;">23 ноября 2021 г.</div>
<div class="t" style="left:2280.5px;top:994.3px;font-size:17.01px;color:#d6d6d6;letter-spacing:-0.61px;text-shadow:0 1px 1px #222;">5304 x 7952</div>
<svg style="left:2524.5px;top:751.5px" width="22" height="23" viewBox="0 0 22 23"><rect x="0.5" y="0.5" width="21" height="22" fill="#707070" stroke="#3a3a3a"/><rect x="1" y="1" width="20" height="9" fill="#7c7c7c"/><path d="M4 6.500H16M4 10.500H16M4 14.500H16" stroke="#3a3a3a" stroke-width="1.2" stroke-dasharray="2 1.5 20"/></svg>
<svg style="left:2524.5px;top:780.5px" width="22" height="23" viewBox="0 0 22 23"><rect x="0.5" y="0.5" width="21" height="22" fill="#707070" stroke="#3a3a3a"/><rect x="1" y="1" width="20" height="9" fill="#7c7c7c"/><path d="M3.500 11.500H15M11.500 8L15.500 11.500L11.500 15" fill="none" stroke="#2e2e2e" stroke-width="1.600"/></svg>
<svg style="left:2524.5px;top:963px" width="22" height="23" viewBox="0 0 22 23"><rect x="0.5" y="0.5" width="21" height="22" fill="#707070" stroke="#3a3a3a"/><rect x="1" y="1" width="20" height="9" fill="#7c7c7c"/><path d="M3.500 11.500H15M11.500 8L15.500 11.500L11.500 15" fill="none" stroke="#2e2e2e" stroke-width="1.600"/></svg>
<div style="left:2294px;top:1041.5px;width:119px;height:29.5px;background:linear-gradient(#646464,#585858);border:1px solid #262626"></div>
<div class="t" style="left:2310.5px;top:1048.6px;font-size:17.01px;color:#9a9a9a;letter-spacing:-0.72px;text-shadow:0 -1px 0 #3a3a3a;">Customize...</div>
<div class="t" style="left:2411.2px;top:1098.1px;font-size:21.73px;color:#b2b2b2;letter-spacing:0.66px;text-shadow:0 1px 1px #000;">Comments</div>
<svg style="left:2540.5px;top:1101.5px" width="10" height="10" viewBox="0 0 9 10"><path d="M9 0V10L0 5z" fill="#a0a0a0"/></svg>
<div class="hd" style="left:2148px;top:1127px;width:411px;height:4px;"></div>
<div style="left:2151.5px;top:1508px;width:405px;height:1px;background:#141414"></div>
<div style="left:2151.5px;top:1509px;width:405px;height:1px;background:#363636"></div>
<div class="btn" style="left:2151.5px;top:1522px;width:32px;height:42px;"></div>
<div style="left:2160.5px;top:1532px;width:12px;height:22px;background:#2a2a2a;border:1px solid #1a1a1a;border-radius:1px"></div>
<div style="left:2161.5px;top:1543.5px;width:10px;height:9.5px;background:#9a9a9a"></div>
<div class="btn" style="left:2182.5px;top:1522px;width:169px;height:42px;"></div>
<div class="btn" style="left:2357.5px;top:1522px;width:200px;height:42px;"></div>
<div class="t" style="left:2244.3px;top:1535.1px;font-size:20.32px;color:#a8a8a8;letter-spacing:-0.24px;text-shadow:0 -1px 0 #1e1e1e;">Sync</div>
<div class="t" style="left:2396.3px;top:1535.1px;font-size:20.32px;color:#a8a8a8;letter-spacing:-0.15px;text-shadow:0 -1px 0 #1e1e1e;">Sync Settings</div>
<svg style="left:20.3px;top:1586px" width="29" height="20" viewBox="0 0 29 20"><path d="M19 2.500H1.200V18.500H27.300V2.500" fill="none" stroke="#e8e8e8" stroke-width="1.500"/><path d="M19.500 2.500H27.500" stroke="#e8e8e8" stroke-width="1.500" stroke-dasharray="1.500 1.300"/></svg>
<div class="t" style="left:30.5px;top:1592.2px;font-size:12.76px;color:#f0f0f0;font-weight:700;">1</div>
<svg style="left:62.3px;top:1586px" width="29" height="20" viewBox="0 0 29 20"><path d="M19 2.500H1.200V18.500H27.300V2.500" fill="none" stroke="#7a7a7a" stroke-width="1.500"/><path d="M19.500 2.500H27.500" stroke="#7a7a7a" stroke-width="1.500" stroke-dasharray="1.500 1.300"/></svg>
<div class="t" style="left:71.5px;top:1592.2px;font-size:12.76px;color:#7a7a7a;font-weight:700;">2</div>
<div style="left:105.5px;top:1581px;width:1.5px;height:29px;background:repeating-linear-gradient(#3a3a3a 0,#3a3a3a 1.5px,transparent 1.5px,transparent 3.500px)"></div>
<div style="left:236.5px;top:1581px;width:1.5px;height:29px;background:repeating-linear-gradient(#3a3a3a 0,#3a3a3a 1.5px,transparent 1.5px,transparent 3.500px)"></div>
<svg style="left:126px;top:1588.5px" width="15.5" height="16" viewBox="0 0 15.5 16"><path d="M0 0h6.500v6.500h-6.500zM9 0h6.500v6.500h-6.500zM0 9.500h6.500v6.500h-6.500zM9 9.500h6.500v6.500h-6.500z" fill="#8c8c8c"/></svg>
<svg style="left:165px;top:1588.5px" width="14" height="16" viewBox="0 0 14 16"><path d="M0 8L7.500 0.500V5H13.500V11H7.500V15.500z" fill="#8c8c8c"/></svg>
<svg style="left:202.5px;top:1588.5px" width="14" height="16" viewBox="0 0 14 16"><path d="M14 8L6.500 0.500V5H0.500V11H6.500V15.500z" fill="#8c8c8c"/></svg>
<div class="t" style="left:252.9px;top:1589.6px;font-size:18.43px;color:#a9a9a9;letter-spacing:0.34px;">Previous Import</div>
<div class="t" style="left:418.9px;top:1589.6px;font-size:18.43px;color:#a9a9a9;letter-spacing:0.47px;">35 photos</div>
<div class="t" style="left:508.4px;top:1589.6px;font-size:18.43px;color:#a9a9a9;">/</div>
<div class="t" style="left:517.9px;top:1589.6px;font-size:18.43px;color:#fff;letter-spacing:-0.51px;font-weight:700;">35 selected</div>
<div class="t" style="left:616.4px;top:1589.6px;font-size:18.43px;color:#a9a9a9;">/</div>
<div class="t" style="left:626.4px;top:1589.6px;font-size:18.43px;color:#a9a9a9;letter-spacing:-0.64px;">_MIR7493.ARW</div>
<svg style="left:759px;top:1593px" width="7.500" height="4.500" viewBox="0 0 8 5"><path d="M0 0H8L4 5z" fill="#c8c8c8"/></svg>
<div class="t" style="left:2284.4px;top:1587.8px;font-size:17.95px;color:#b8b8b8;letter-spacing:0.40px;">Filter :</div>
<div style="left:2360px;top:1584px;width:191px;height:23.5px;background:#2b2b2b;border:1px solid #161616;border-radius:2px"></div>
<div style="left:2530.5px;top:1584px;width:20.5px;height:23.5px;background:linear-gradient(#6a6a6a,#505050);border:1px solid #222;border-radius:2px"></div>
<svg style="left:2535.25px;top:1588.75px" width="11" height="14" viewBox="0 0 11 14"><path d="M1 5.500L5.500 0.800L10 5.500zM1 8.500L5.500 13.200L10 8.500z" fill="#c4c4c4" stroke="#222" stroke-width="0.6"/></svg>
<div class="t" style="left:2366.4px;top:1588.0px;font-size:17.95px;color:#c4c4c4;letter-spacing:0.47px;">Filters Off</div>
<div style="left:2568px;top:1584px;width:16.5px;height:24px;background:#3a3a3a;border:1px solid #6a6a6a;border-radius:1px"></div>
<div style="left:2570.5px;top:1596.5px;width:11.5px;height:9.5px;background:#b0b0b0"></div>
<div style="left:22px;top:1616.5px;width:2562px;height:139.5px;background:#000;border:1px solid #2c2c2c"></div>
<div class="fc act" style="left:23.5px;top:1618.5px;width:118.5px;height:118px;overflow:hidden"><div class="t" style="left:6.500px;top:1.500px;font-size:15px;font-weight:700;color:#9a9a9a">1</div><div style="left:26px;top:11.500px;width:66px;height:94.500px;background:#fff"></div><svg style="left:29.300px;top:14.800px;outline:1px solid #1a1a1a;outline-offset:-0.500px" width="59.500" height="88.200"><use href="#p1" width="59.500" height="88.200"/></svg><svg style="left:30.3px;top:15.8px" width="13" height="13" viewBox="0 0 14 14"><rect width="14" height="14" fill="#0a0a0a"/><rect x="1.5" y="1.5" width="11" height="11" fill="none" stroke="#b4b4b4" stroke-width="0.9"/><path d="M3.2 5.2H10.5M8.3 3.2L10.6 5.2L8.3 7.200M10.800 8.900H3.500M5.700 6.900L3.400 8.900L5.700 10.900" fill="none" stroke="#f0f0f0" stroke-width="1.1"/></svg></div>
<div class="fc" style="left:142px;top:1618.5px;width:118px;height:118px;overflow:hidden"><div class="t" style="left:6.500px;top:1.500px;font-size:15px;font-weight:700;color:#7c7c7c">2</div><div style="left:26px;top:11.500px;width:66px;height:94.500px;background:#fff"></div><svg style="left:29.300px;top:14.800px;outline:1px solid #1a1a1a;outline-offset:-0.500px" width="59.500" height="88.200"><use href="#p2" width="59.500" height="88.200"/></svg><svg style="left:30.3px;top:15.8px" width="13" height="13" viewBox="0 0 14 14"><rect width="14" height="14" fill="#0a0a0a"/><rect x="1.5" y="1.5" width="11" height="11" fill="none" stroke="#b4b4b4" stroke-width="0.9"/><path d="M3.2 5.2H10.5M8.3 3.2L10.6 5.2L8.3 7.200M10.800 8.900H3.500M5.700 6.900L3.400 8.900L5.700 10.900" fill="none" stroke="#f0f0f0" stroke-width="1.1"/></svg></div>
<div class="fc" style="left:260px;top:1618.5px;width:118px;height:118px;overflow:hidden"><div class="t" style="left:6.500px;top:1.500px;font-size:15px;font-weight:700;color:#7c7c7c">3</div><div style="left:26px;top:11.500px;width:66px;height:94.500px;background:#fff"></div><svg style="left:29.300px;top:14.800px;outline:1px solid #1a1a1a;outline-offset:-0.500px" width="59.500" height="88.200"><use href="#p3" width="59.500" height="88.200"/></svg><svg style="left:30.3px;top:15.8px" width="13" height="13" viewBox="0 0 14 14"><rect width="14" height="14" fill="#0a0a0a"/><rect x="1.5" y="1.5" width="11" height="11" fill="none" stroke="#b4b4b4" stroke-width="0.9"/><path d="M3.2 5.2H10.5M8.3 3.2L10.6 5.2L8.3 7.200M10.800 8.900H3.500M5.700 6.900L3.400 8.900L5.700 10.900" fill="none" stroke="#f0f0f0" stroke-width="1.1"/></svg></div>
<div class="fc" style="left:378px;top:1618.5px;width:118px;height:118px;overflow:hidden"><div class="t" style="left:6.500px;top:1.500px;font-size:15px;font-weight:700;color:#7c7c7c">4</div><div style="left:26px;top:11.500px;width:66px;height:94.500px;background:#fff"></div><svg style="left:29.300px;top:14.800px;outline:1px solid #1a1a1a;outline-offset:-0.500px" width="59.500" height="88.200"><use href="#p4" width="59.500" height="88.200"/></svg><svg style="left:30.3px;top:15.8px" width="13" height="13" viewBox="0 0 14 14"><rect width="14" height="14" fill="#0a0a0a"/><rect x="1.5" y="1.5" width="11" height="11" fill="none" stroke="#b4b4b4" stroke-width="0.9"/><path d="M3.2 5.2H10.5M8.3 3.2L10.6 5.2L8.3 7.200M10.800 8.900H3.500M5.700 6.900L3.400 8.900L5.700 10.900" fill="none" stroke="#f0f0f0" stroke-width="1.1"/></svg></div>
<div class="fc" style="left:496px;top:1618.5px;width:118px;height:118px;overflow:hidden"><div class="t" style="left:6.500px;top:1.500px;font-size:15px;font-weight:700;color:#7c7c7c">5</div><div style="left:26px;top:11.500px;width:66px;height:94.500px;background:#fff"></div><svg style="left:29.300px;top:14.800px;outline:1px solid #1a1a1a;outline-offset:-0.500px" width="59.500" height="88.200"><use href="#p5" width="59.500" height="88.200"/></svg><svg style="left:30.3px;top:15.8px" width="13" height="13" viewBox="0 0 14 14"><rect width="14" height="14" fill="#0a0a0a"/><rect x="1.5" y="1.5" width="11" height="11" fill="none" stroke="#b4b4b4" stroke-width="0.9"/><path d="M3.2 5.2H10.5M8.3 3.2L10.6 5.2L8.3 7.200M10.800 8.900H3.500M5.700 6.900L3.400 8.900L5.700 10.900" fill="none" stroke="#f0f0f0" stroke-width="1.1"/></svg></div>
<div class="fc" style="left:614px;top:1618.5px;width:118px;height:118px;overflow:hidden"><div class="t" style="left:6.500px;top:1.500px;font-size:15px;font-weight:700;color:#7c7c7c">6</div><div style="left:26px;top:11.500px;width:66px;height:94.500px;background:#fff"></div><svg style="left:29.300px;top:14.800px;outline:1px solid #1a1a1a;outline-offset:-0.500px" width="59.500" height="88.200"><use href="#p6" width="59.500" height="88.200"/></svg><svg style="left:30.3px;top:15.8px" width="13" height="13" viewBox="0 0 14 14"><rect width="14" height="14" fill="#0a0a0a"/><rect x="1.5" y="1.5" width="11" height="11" fill="none" stroke="#b4b4b4" stroke-width="0.9"/><path d="M3.2 5.2H10.5M8.3 3.2L10.6 5.2L8.3 7.200M10.800 8.900H3.500M5.700 6.900L3.400 8.900L5.700 10.900" fill="none" stroke="#f0f0f0" stroke-width="1.1"/></svg></div>
<div class="fc" style="left:732px;top:1618.5px;width:118px;height:118px;overflow:hidden"><div class="t" style="left:6.500px;top:1.500px;font-size:15px;font-weight:700;color:#7c7c7c">7</div><div style="left:26px;top:11.500px;width:66px;height:94.500px;background:#fff"></div><svg style="left:29.300px;top:14.800px;outline:1px solid #1a1a1a;outline-offset:-0.500px" width="59.500" height="88.200"><use href="#p7" width="59.500" height="88.200"/></svg><svg style="left:30.3px;top:15.8px" width="13" height="13" viewBox="0 0 14 14"><rect width="14" height="14" fill="#0a0a0a"/><rect x="1.5" y="1.5" width="11" height="11" fill="none" stroke="#b4b4b4" stroke-width="0.9"/><path d="M3.2 5.2H10.5M8.3 3.2L10.6 5.2L8.3 7.200M10.800 8.900H3.500M5.700 6.900L3.400 8.900L5.700 10.900" fill="none" stroke="#f0f0f0" stroke-width="1.1"/></svg></div>
<div class="fc" style="left:850px;top:1618.5px;width:118px;height:118px;overflow:hidden"><div class="t" style="left:6.500px;top:1.500px;font-size:15px;font-weight:700;color:#7c7c7c">8</div><div style="left:26px;top:11.500px;width:66px;height:94.500px;background:#fff"></div><svg style="left:29.300px;top:14.800px;outline:1px solid #1a1a1a;outline-offset:-0.500px" width="59.500" height="88.200"><use href="#p8" width="59.500" height="88.200"/></svg><svg style="left:30.3px;top:15.8px" width="13" height="13" viewBox="0 0 14 14"><rect width="14" height="14" fill="#0a0a0a"/><rect x="1.5" y="1.5" width="11" height="11" fill="none" stroke="#b4b4b4" stroke-width="0.9"/><path d="M3.2 5.2H10.5M8.3 3.2L10.6 5.2L8.3 7.200M10.800 8.900H3.500M5.700 6.900L3.400 8.900L5.700 10.900" fill="none" stroke="#f0f0f0" stroke-width="1.1"/></svg></div>
<div class="fc" style="left:968px;top:1618.5px;width:118px;height:118px;overflow:hidden"><div class="t" style="left:6.500px;top:1.500px;font-size:15px;font-weight:700;color:#7c7c7c">9</div><div style="left:26px;top:11.500px;width:66px;height:94.500px;background:#fff"></div><svg style="left:29.300px;top:14.800px;outline:1px solid #1a1a1a;outline-offset:-0.500px" width="59.500" height="88.200"><use href="#p9" width="59.500" height="88.200"/></svg><svg style="left:30.3px;top:15.8px" width="13" height="13" viewBox="0 0 14 14"><rect width="14" height="14" fill="#0a0a0a"/><rect x="1.5" y="1.5" width="11" height="11" fill="none" stroke="#b4b4b4" stroke-width="0.9"/><path d="M3.2 5.2H10.5M8.3 3.2L10.6 5.2L8.3 7.200M10.800 8.900H3.500M5.700 6.900L3.400 8.900L5.700 10.900" fill="none" stroke="#f0f0f0" stroke-width="1.1"/></svg></div>
<div class="fc" style="left:1086px;top:1618.5px;width:118px;height:118px;overflow:hidden"><div class="t" style="left:6.500px;top:1.500px;font-size:15px;font-weight:700;color:#7c7c7c">10</div><div style="left:26px;top:11.500px;width:66px;height:94.500px;background:#fff"></div><svg style="left:29.300px;top:14.800px;outline:1px solid #1a1a1a;outline-offset:-0.500px" width="59.500" height="88.200"><use href="#p10" width="59.500" height="88.200"/></svg><svg style="left:30.3px;top:15.8px" width="13" height="13" viewBox="0 0 14 14"><rect width="14" height="14" fill="#0a0a0a"/><rect x="1.5" y="1.5" width="11" height="11" fill="none" stroke="#b4b4b4" stroke-width="0.9"/><path d="M3.2 5.2H10.5M8.3 3.2L10.6 5.2L8.3 7.200M10.800 8.900H3.500M5.700 6.900L3.400 8.900L5.700 10.900" fill="none" stroke="#f0f0f0" stroke-width="1.1"/></svg></div>
<div class="fc" style="left:1204px;top:1618.5px;width:118px;height:118px;overflow:hidden"><div class="t" style="left:6.500px;top:1.500px;font-size:15px;font-weight:700;color:#7c7c7c">11</div><div style="left:26px;top:11.500px;width:66px;height:94.500px;background:#fff"></div><svg style="left:29.300px;top:14.800px;outline:1px solid #1a1a1a;outline-offset:-0.500px" width="59.500" height="88.200"><use href="#p11" width="59.500" height="88.200"/></svg><svg style="left:30.3px;top:15.8px" width="13" height="13" viewBox="0 0 14 14"><rect width="14" height="14" fill="#0a0a0a"/><rect x="1.5" y="1.5" width="11" height="11" fill="none" stroke="#b4b4b4" stroke-width="0.9"/><path d="M3.2 5.2H10.5M8.3 3.2L10.6 5.2L8.3 7.200M10.800 8.900H3.500M5.700 6.900L3.400 8.900L5.700 10.900" fill="none" stroke="#f0f0f0" stroke-width="1.1"/></svg></div>
<div class="fc" style="left:1322px;top:1618.5px;width:118px;height:118px;overflow:hidden"><div class="t" style="left:6.500px;top:1.500px;font-size:15px;font-weight:700;color:#7c7c7c">12</div><div style="left:26px;top:11.500px;width:66px;height:94.500px;background:#fff"></div><svg style="left:29.300px;top:14.800px;outline:1px solid #1a1a1a;outline-offset:-0.500px" width="59.500" height="88.200"><use href="#p12" width="59.500" height="88.200"/></svg><svg style="left:30.3px;top:15.8px" width="13" height="13" viewBox="0 0 14 14"><rect width="14" height="14" fill="#0a0a0a"/><rect x="1.5" y="1.5" width="11" height="11" fill="none" stroke="#b4b4b4" stroke-width="0.9"/><path d="M3.2 5.2H10.5M8.3 3.2L10.6 5.2L8.3 7.200M10.800 8.900H3.500M5.700 6.900L3.400 8.900L5.700 10.900" fill="none" stroke="#f0f0f0" stroke-width="1.1"/></svg></div>
<div class="fc" style="left:1440px;top:1618.5px;width:118px;height:118px;overflow:hidden"><div class="t" style="left:6.500px;top:1.500px;font-size:15px;font-weight:700;color:#7c7c7c">13</div><div style="left:26px;top:11.500px;width:66px;height:94.500px;background:#fff"></div><svg style="left:29.300px;top:14.800px;outline:1px solid #1a1a1a;outline-offset:-0.500px" width="59.500" height="88.200"><use href="#p13" width="59.500" height="88.200"/></svg><svg style="left:30.3px;top:15.8px" width="13" height="13" viewBox="0 0 14 14"><rect width="14" height="14" fill="#0a0a0a"/><rect x="1.5" y="1.5" width="11" height="11" fill="none" stroke="#b4b4b4" stroke-width="0.9"/><path d="M3.2 5.2H10.5M8.3 3.2L10.6 5.2L8.3 7.200M10.800 8.900H3.500M5.700 6.900L3.400 8.900L5.700 10.900" fill="none" stroke="#f0f0f0" stroke-width="1.1"/></svg></div>
<div class="fc" style="left:1558px;top:1618.5px;width:118px;height:118px;overflow:hidden"><div class="t" style="left:6.500px;top:1.500px;font-size:15px;font-weight:700;color:#7c7c7c">14</div><div style="left:26px;top:11.500px;width:66px;height:94.500px;background:#fff"></div><svg style="left:29.300px;top:14.800px;outline:1px solid #1a1a1a;outline-offset:-0.500px" width="59.500" height="88.200"><use href="#p14" width="59.500" height="88.200"/></svg><svg style="left:30.3px;top:15.8px" width="13" height="13" viewBox="0 0 14 14"><rect width="14" height="14" fill="#0a0a0a"/><rect x="1.5" y="1.5" width="11" height="11" fill="none" stroke="#b4b4b4" stroke-width="0.9"/><path d="M3.2 5.2H10.5M8.3 3.2L10.6 5.2L8.3 7.200M10.800 8.900H3.500M5.700 6.900L3.400 8.900L5.700 10.900" fill="none" stroke="#f0f0f0" stroke-width="1.1"/></svg></div>
<div class="fc" style="left:1676px;top:1618.5px;width:118px;height:118px;overflow:hidden"><div class="t" style="left:6.500px;top:1.500px;font-size:15px;font-weight:700;color:#7c7c7c">15</div><div style="left:26px;top:11.500px;width:66px;height:94.500px;background:#fff"></div><svg style="left:29.300px;top:14.800px;outline:1px solid #1a1a1a;outline-offset:-0.500px" width="59.500" height="88.200"><use href="#p15" width="59.500" height="88.200"/></svg><svg style="left:30.3px;top:15.8px" width="13" height="13" viewBox="0 0 14 14"><rect width="14" height="14" fill="#0a0a0a"/><rect x="1.5" y="1.5" width="11" height="11" fill="none" stroke="#b4b4b4" stroke-width="0.9"/><path d="M3.2 5.2H10.5M8.3 3.2L10.6 5.2L8.3 7.200M10.800 8.900H3.500M5.700 6.900L3.400 8.900L5.700 10.900" fill="none" stroke="#f0f0f0" stroke-width="1.1"/></svg></div>
<div class="fc" style="left:1794px;top:1618.5px;width:118px;height:118px;overflow:hidden"><div class="t" style="left:6.500px;top:1.500px;font-size:15px;font-weight:700;color:#7c7c7c">16</div><div style="left:26px;top:11.500px;width:66px;height:94.500px;background:#fff"></div><svg style="left:29.300px;top:14.800px;outline:1px solid #1a1a1a;outline-offset:-0.500px" width="59.500" height="88.200"><use href="#p16" width="59.500" height="88.200"/></svg><svg style="left:30.3px;top:15.8px" width="13" height="13" viewBox="0 0 14 14"><rect width="14" height="14" fill="#0a0a0a"/><rect x="1.5" y="1.5" width="11" height="11" fill="none" stroke="#b4b4b4" stroke-width="0.9"/><path d="M3.2 5.2H10.5M8.3 3.2L10.6 5.2L8.3 7.200M10.800 8.900H3.500M5.700 6.900L3.400 8.900L5.700 10.900" fill="none" stroke="#f0f0f0" stroke-width="1.1"/></svg></div>
<div class="fc" style="left:1912px;top:1618.5px;width:118px;height:118px;overflow:hidden"><div class="t" style="left:6.500px;top:1.500px;font-size:15px;font-weight:700;color:#7c7c7c">17</div><div style="left:26px;top:11.500px;width:66px;height:94.500px;background:#fff"></div><svg style="left:29.300px;top:14.800px;outline:1px solid #1a1a1a;outline-offset:-0.500px" width="59.500" height="88.200"><use href="#p17" width="59.500" height="88.200"/></svg><svg style="left:30.3px;top:15.8px" width="13" height="13" viewBox="0 0 14 14"><rect width="14" height="14" fill="#0a0a0a"/><rect x="1.5" y="1.5" width="11" height="11" fill="none" stroke="#b4b4b4" stroke-width="0.9"/><path d="M3.2 5.2H10.5M8.3 3.2L10.6 5.2L8.3 7.200M10.800 8.900H3.500M5.700 6.900L3.400 8.900L5.700 10.900" fill="none" stroke="#f0f0f0" stroke-width="1.1"/></svg></div>
<div class="fc" style="left:2030px;top:1618.5px;width:118px;height:118px;overflow:hidden"><div class="t" style="left:6.500px;top:1.500px;font-size:15px;font-weight:700;color:#7c7c7c">18</div><div style="left:26px;top:11.500px;width:66px;height:94.500px;background:#fff"></div><svg style="left:29.300px;top:14.800px;outline:1px solid #1a1a1a;outline-offset:-0.500px" width="59.500" height="88.200"><use href="#p18" width="59.500" height="88.200"/></svg><svg style="left:30.3px;top:15.8px" width="13" height="13" viewBox="0 0 14 14"><rect width="14" height="14" fill="#0a0a0a"/><rect x="1.5" y="1.5" width="11" height="11" fill="none" stroke="#b4b4b4" stroke-width="0.9"/><path d="M3.2 5.2H10.5M8.3 3.2L10.6 5.2L8.3 7.200M10.800 8.900H3.500M5.700 6.900L3.400 8.900L5.700 10.900" fill="none" stroke="#f0f0f0" stroke-width="1.1"/></svg></div>
<div class="fc" style="left:2148px;top:1618.5px;width:117px;height:118px;overflow:hidden"><div class="t" style="left:6.500px;top:1.500px;font-size:15px;font-weight:700;color:#7c7c7c">19</div><div style="left:26px;top:11.500px;width:66px;height:94.500px;background:#fff"></div><svg style="left:29.300px;top:14.800px;outline:1px solid #1a1a1a;outline-offset:-0.500px" width="59.500" height="88.200"><use href="#p19" width="59.500" height="88.200"/></svg><svg style="left:30.3px;top:15.8px" width="13" height="13" viewBox="0 0 14 14"><rect width="14" height="14" fill="#0a0a0a"/><rect x="1.5" y="1.5" width="11" height="11" fill="none" stroke="#b4b4b4" stroke-width="0.9"/><path d="M3.2 5.2H10.5M8.3 3.2L10.6 5.2L8.3 7.200M10.800 8.900H3.500M5.700 6.900L3.400 8.900L5.700 10.900" fill="none" stroke="#f0f0f0" stroke-width="1.1"/></svg></div>
<div class="fc" style="left:2265px;top:1618.5px;width:118px;height:118px;overflow:hidden"><div class="t" style="left:6.500px;top:1.500px;font-size:15px;font-weight:700;color:#7c7c7c">20</div><div style="left:26px;top:11.500px;width:66px;height:94.500px;background:#fff"></div><svg style="left:29.300px;top:14.800px;outline:1px solid #1a1a1a;outline-offset:-0.500px" width="59.500" height="88.200"><use href="#p20" width="59.500" height="88.200"/></svg><svg style="left:30.3px;top:15.8px" width="13" height="13" viewBox="0 0 14 14"><rect width="14" height="14" fill="#0a0a0a"/><rect x="1.5" y="1.5" width="11" height="11" fill="none" stroke="#b4b4b4" stroke-width="0.9"/><path d="M3.2 5.2H10.5M8.3 3.2L10.6 5.2L8.3 7.200M10.800 8.900H3.500M5.700 6.900L3.400 8.900L5.700 10.900" fill="none" stroke="#f0f0f0" stroke-width="1.1"/></svg></div>
<div class="fc" style="left:2383px;top:1618.5px;width:118px;height:118px;overflow:hidden"><div class="t" style="left:6.500px;top:1.500px;font-size:15px;font-weight:700;color:#7c7c7c">21</div><div style="left:26px;top:11.500px;width:66px;height:94.500px;background:#fff"></div><svg style="left:29.300px;top:14.800px;outline:1px solid #1a1a1a;outline-offset:-0.500px" width="59.500" height="88.200"><use href="#p21" width="59.500" height="88.200"/></svg><svg style="left:30.3px;top:15.8px" width="13" height="13" viewBox="0 0 14 14"><rect width="14" height="14" fill="#0a0a0a"/><rect x="1.5" y="1.5" width="11" height="11" fill="none" stroke="#b4b4b4" stroke-width="0.9"/><path d="M3.2 5.2H10.5M8.3 3.2L10.6 5.2L8.3 7.200M10.800 8.900H3.500M5.700 6.900L3.400 8.900L5.700 10.900" fill="none" stroke="#f0f0f0" stroke-width="1.1"/></svg></div>
<div class="fc" style="left:2501px;top:1618.5px;width:81.5px;height:118px;overflow:hidden"><div class="t" style="left:6.500px;top:1.500px;font-size:15px;font-weight:700;color:#7c7c7c">22</div><div style="left:26px;top:11.500px;width:66px;height:94.500px;background:#fff"></div><svg style="left:29.300px;top:14.800px;outline:1px solid #1a1a1a;outline-offset:-0.500px" width="59.500" height="88.200"><use href="#p22" width="59.500" height="88.200"/></svg><svg style="left:30.3px;top:15.8px" width="13" height="13" viewBox="0 0 14 14"><rect width="14" height="14" fill="#0a0a0a"/><rect x="1.5" y="1.5" width="11" height="11" fill="none" stroke="#b4b4b4" stroke-width="0.9"/><path d="M3.2 5.2H10.5M8.3 3.2L10.6 5.2L8.3 7.200M10.800 8.900H3.500M5.700 6.900L3.400 8.900L5.700 10.900" fill="none" stroke="#f0f0f0" stroke-width="1.1"/></svg></div>
<div style="left:2530px;top:1618.5px;width:52.5px;height:118px;background:linear-gradient(90deg,rgba(0,0,0,0),rgba(0,0,0,0.15) 40%,#000 96%)"></div>
<svg style="left:2592.500px;top:1683px" width="5.500" height="10" viewBox="0 0 5.5 10"><path d="M0 0V10L5.500 5z" fill="#b0b0b0"/></svg>
<div style="left:24px;top:1741px;width:1582px;height:13px;background:linear-gradient(#8e8e8e,#767676 45%,#626262);border-radius:1px"></div>
<div style="left:705px;top:300.8px;width:402.5px;height:1163.7px;background:#f9f9f9;border:1px solid #d4d4d4;border-radius:8px;box-shadow:0 8px 14px rgba(0,0,0,0.16),0 1px 4px rgba(0,0,0,0.12)"></div>
<div class="t" style="left:760.4px;top:314.3px;font-size:18.5px;color:#1a1a1a;letter-spacing:-0.26px;">Open in Loupe</div>
<div class="t" style="left:760.4px;top:349.2px;font-size:18.5px;color:#1a1a1a;letter-spacing:-0.27px;">Open in Compare</div>
<div class="t" style="left:760.4px;top:384.1px;font-size:18.5px;color:#1a1a1a;letter-spacing:-0.38px;">Open in Survey</div>
<div style="left:718px;top:415.15px;width:376.5px;height:1px;background:#dedede"></div>
<div class="t" style="left:760.4px;top:430.0px;font-size:18.5px;color:#1a1a1a;letter-spacing:-0.59px;">Open in Reference View</div>
<div class="t" style="left:760.4px;top:465.0px;font-size:18.5px;color:#1a1a1a;letter-spacing:-0.68px;">Set as Reference Photo</div>
<div style="left:718px;top:496.05px;width:376.5px;height:1px;background:#dedede"></div>
<div class="t" style="left:760.4px;top:510.9px;font-size:18.5px;color:#1a1a1a;letter-spacing:-0.19px;">Lock to Second Window</div>
<div style="left:718px;top:541.95px;width:376.5px;height:1px;background:#dedede"></div>
<div class="t" style="left:760.4px;top:556.8px;font-size:18.5px;color:#a2a2a2;letter-spacing:-0.42px;">Show in Explorer</div>
<div class="t" style="left:760.4px;top:591.9px;font-size:18.5px;color:#1a1a1a;letter-spacing:-0.24px;">Go to Folder in Library</div>
<div class="t" style="left:760.4px;top:627.0px;font-size:18.5px;color:#1a1a1a;letter-spacing:-0.15px;">Go to Collection</div>
<svg style="left:1078.5px;top:627.1px" width="8" height="14" viewBox="0 0 8 14"><path d="M1 1L7 7L1 13" fill="none" stroke="#1a1a1a" stroke-width="1.4"/></svg>
<div style="left:718px;top:658.1px;width:376.5px;height:1px;background:#dedede"></div>
<div class="t" style="left:760.4px;top:673.0px;font-size:18.5px;color:#1a1a1a;letter-spacing:-0.16px;">Edit In</div>
<svg style="left:1078.5px;top:673.1px" width="8" height="14" viewBox="0 0 8 14"><path d="M1 1L7 7L1 13" fill="none" stroke="#1a1a1a" stroke-width="1.4"/></svg>
<div style="left:712.5px;top:699px;width:387.5px;height:34px;background:#f0f0f0;border-radius:4px"></div>
<div class="t" style="left:760.4px;top:707.9px;font-size:18.5px;color:#1a1a1a;letter-spacing:-0.05px;">Photo Merge</div>
<svg style="left:1078.5px;top:708.0px" width="8" height="14" viewBox="0 0 8 14"><path d="M1 1L7 7L1 13" fill="none" stroke="#1a1a1a" stroke-width="1.4"/></svg>
<div class="t" style="left:760.4px;top:743.0px;font-size:18.5px;color:#1a1a1a;letter-spacing:-1.15px;">Enhance...</div>
<div style="left:718px;top:774.1px;width:376.5px;height:1px;background:#dedede"></div>
<div class="t" style="left:760.4px;top:789.0px;font-size:18.5px;color:#1a1a1a;letter-spacing:-0.68px;">Set Flag</div>
<svg style="left:1078.5px;top:789.1px" width="8" height="14" viewBox="0 0 8 14"><path d="M1 1L7 7L1 13" fill="none" stroke="#1a1a1a" stroke-width="1.4"/></svg>
<div class="t" style="left:760.4px;top:824.0px;font-size:18.5px;color:#1a1a1a;letter-spacing:-0.50px;">Set Rating</div>
<svg style="left:1078.5px;top:824.1px" width="8" height="14" viewBox="0 0 8 14"><path d="M1 1L7 7L1 13" fill="none" stroke="#1a1a1a" stroke-width="1.4"/></svg>
<div class="t" style="left:760.4px;top:858.9px;font-size:18.5px;color:#1a1a1a;letter-spacing:-0.49px;">Set Color Label</div>
<svg style="left:1078.5px;top:859.0px" width="8" height="14" viewBox="0 0 8 14"><path d="M1 1L7 7L1 13" fill="none" stroke="#1a1a1a" stroke-width="1.4"/></svg>
<div class="t" style="left:760.4px;top:893.8px;font-size:18.5px;color:#1a1a1a;letter-spacing:-0.67px;">Reset Export Status</div>
<div class="t" style="left:760.4px;top:928.9px;font-size:18.5px;color:#a2a2a2;letter-spacing:-0.16px;">Add Shortcut Keyword</div>
<div style="left:718px;top:960.05px;width:376.5px;height:1px;background:#dedede"></div>
<div class="t" style="left:760.4px;top:975.0px;font-size:18.5px;color:#1a1a1a;letter-spacing:-0.08px;">Add to Quick Collection</div>
<div style="left:718px;top:1006.05px;width:376.5px;height:1px;background:#dedede"></div>
<div class="t" style="left:760.4px;top:1020.9px;font-size:18.5px;color:#1a1a1a;letter-spacing:-0.58px;">Stacking</div>
<svg style="left:1078.5px;top:1021.0px" width="8" height="14" viewBox="0 0 8 14"><path d="M1 1L7 7L1 13" fill="none" stroke="#1a1a1a" stroke-width="1.4"/></svg>
<div class="t" style="left:760.4px;top:1055.8px;font-size:18.5px;color:#1a1a1a;letter-spacing:-0.50px;">Create Virtual Copies</div>
<div style="left:718px;top:1086.85px;width:376.5px;height:1px;background:#dedede"></div>
<div class="t" style="left:760.4px;top:1101.7px;font-size:18.5px;color:#1a1a1a;letter-spacing:-0.23px;">Develop Settings</div>
<svg style="left:1078.5px;top:1101.8px" width="8" height="14" viewBox="0 0 8 14"><path d="M1 1L7 7L1 13" fill="none" stroke="#1a1a1a" stroke-width="1.4"/></svg>
<div class="t" style="left:760.4px;top:1136.8px;font-size:18.5px;color:#1a1a1a;letter-spacing:-0.53px;">Metadata Presets</div>
<svg style="left:1078.5px;top:1136.9px" width="8" height="14" viewBox="0 0 8 14"><path d="M1 1L7 7L1 13" fill="none" stroke="#1a1a1a" stroke-width="1.4"/></svg>
<div style="left:718px;top:1167.95px;width:376.5px;height:1px;background:#dedede"></div>
<div class="t" style="left:760.4px;top:1182.9px;font-size:18.5px;color:#1a1a1a;letter-spacing:-0.71px;">Rotate Left (CCW)</div>
<div class="t" style="left:760.4px;top:1218.0px;font-size:18.5px;color:#1a1a1a;letter-spacing:-0.53px;">Rotate Right (CW)</div>
<div style="left:718px;top:1249.15px;width:376.5px;height:1px;background:#dedede"></div>
<div class="t" style="left:760.4px;top:1264.1px;font-size:18.5px;color:#1a1a1a;letter-spacing:-0.12px;">Metadata</div>
<svg style="left:1078.5px;top:1264.2px" width="8" height="14" viewBox="0 0 8 14"><path d="M1 1L7 7L1 13" fill="none" stroke="#1a1a1a" stroke-width="1.4"/></svg>
<div class="t" style="left:760.4px;top:1299.0px;font-size:18.5px;color:#1a1a1a;letter-spacing:-0.21px;">Export</div>
<svg style="left:1078.5px;top:1299.1px" width="8" height="14" viewBox="0 0 8 14"><path d="M1 1L7 7L1 13" fill="none" stroke="#1a1a1a" stroke-width="1.4"/></svg>
<div style="left:718px;top:1330.05px;width:376.5px;height:1px;background:#dedede"></div>
<div class="t" style="left:760.4px;top:1344.9px;font-size:18.5px;color:#1a1a1a;letter-spacing:-0.58px;">Email Photos...</div>
<div style="left:718px;top:1376.05px;width:376.5px;height:1px;background:#dedede"></div>
<div class="t" style="left:760.4px;top:1391.0px;font-size:18.5px;color:#1a1a1a;letter-spacing:-0.58px;">Remove Photos...</div>
<div style="left:718px;top:1422.1px;width:376.5px;height:1px;background:#dedede"></div>
<div class="t" style="left:760.4px;top:1437.0px;font-size:18.5px;color:#1a1a1a;letter-spacing:-0.33px;">View Options...</div>
<div class="t" style="left:993.4px;top:743.0px;font-size:18.5px;color:#1a1a1a;letter-spacing:0.23px;">Ctrl+Alt+I</div>
<div style="left:1104px;top:696.5px;width:317.5px;height:108.5px;background:#f9f9f9;border:1px solid #d4d4d4;border-radius:8px;box-shadow:0 8px 14px rgba(0,0,0,0.16),0 1px 4px rgba(0,0,0,0.12)"></div>
<div style="left:1110px;top:768.5px;width:304px;height:34.5px;background:#f0f0f0;border-radius:4px"></div>
<div class="t" style="left:1157.6px;top:707.9px;font-size:18.5px;color:#1a1a1a;letter-spacing:-1.18px;">HDR...</div>
<div class="t" style="left:1333.3px;top:707.9px;font-size:18.5px;color:#1a1a1a;letter-spacing:0.04px;">Ctrl+H</div>
<div class="t" style="left:1157.6px;top:743.0px;font-size:18.5px;color:#1a1a1a;letter-spacing:-0.90px;">Panorama...</div>
<div class="t" style="left:1330.3px;top:743.0px;font-size:18.5px;color:#1a1a1a;letter-spacing:0.22px;">Ctrl+M</div>
<div class="t" style="left:1157.6px;top:778.1px;font-size:18.5px;color:#1a1a1a;letter-spacing:-0.86px;">HDR Panorama...</div>
</div>
</body></html>
